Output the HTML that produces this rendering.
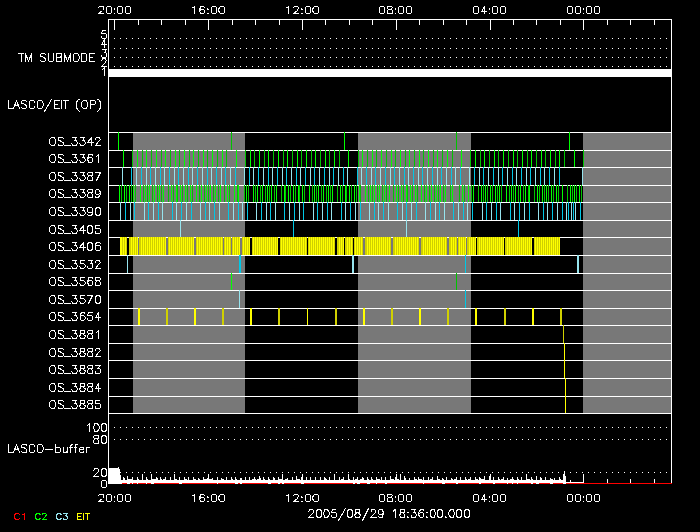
<!DOCTYPE html>
<html><head><meta charset="utf-8"><title>LASCO/EIT schedule</title>
<style>
html,body{margin:0;padding:0;background:#000;}
body{width:700px;height:532px;overflow:hidden;}
svg{display:block;}
</style></head><body>
<svg width="700" height="532" viewBox="0 0 700 532">
<rect x="0" y="0" width="700" height="532" fill="#000"/>
<g shape-rendering="crispEdges">
<rect x="133" y="133" width="112" height="280" fill="#787878"/>
<rect x="358" y="133" width="113" height="280" fill="#787878"/>
<rect x="583" y="133" width="88" height="280" fill="#787878"/>
<rect x="108" y="19" width="1" height="465" fill="#fff"/>
<rect x="671" y="19" width="1" height="465" fill="#fff"/>
<rect x="108" y="19" width="564" height="1" fill="#fff"/>
<rect x="114" y="19" width="1" height="11" fill="#fff"/>
<rect x="138" y="19" width="1" height="6" fill="#fff"/>
<rect x="161" y="19" width="1" height="6" fill="#fff"/>
<rect x="185" y="19" width="1" height="6" fill="#fff"/>
<rect x="208" y="19" width="1" height="11" fill="#fff"/>
<rect x="232" y="19" width="1" height="6" fill="#fff"/>
<rect x="255" y="19" width="1" height="6" fill="#fff"/>
<rect x="279" y="19" width="1" height="6" fill="#fff"/>
<rect x="302" y="19" width="1" height="11" fill="#fff"/>
<rect x="325" y="19" width="1" height="6" fill="#fff"/>
<rect x="349" y="19" width="1" height="6" fill="#fff"/>
<rect x="372" y="19" width="1" height="6" fill="#fff"/>
<rect x="396" y="19" width="1" height="11" fill="#fff"/>
<rect x="419" y="19" width="1" height="6" fill="#fff"/>
<rect x="443" y="19" width="1" height="6" fill="#fff"/>
<rect x="466" y="19" width="1" height="6" fill="#fff"/>
<rect x="490" y="19" width="1" height="11" fill="#fff"/>
<rect x="513" y="19" width="1" height="6" fill="#fff"/>
<rect x="536" y="19" width="1" height="6" fill="#fff"/>
<rect x="560" y="19" width="1" height="6" fill="#fff"/>
<rect x="583" y="19" width="1" height="11" fill="#fff"/>
<rect x="607" y="19" width="1" height="6" fill="#fff"/>
<rect x="630" y="19" width="1" height="6" fill="#fff"/>
<rect x="654" y="19" width="1" height="6" fill="#fff"/>
<rect x="114" y="38" width="1" height="1" fill="#fff"/>
<rect x="120" y="38" width="1" height="1" fill="#fff"/>
<rect x="126" y="38" width="1" height="1" fill="#fff"/>
<rect x="132" y="38" width="1" height="1" fill="#fff"/>
<rect x="138" y="38" width="1" height="1" fill="#fff"/>
<rect x="144" y="38" width="1" height="1" fill="#fff"/>
<rect x="150" y="38" width="1" height="1" fill="#fff"/>
<rect x="156" y="38" width="1" height="1" fill="#fff"/>
<rect x="162" y="38" width="1" height="1" fill="#fff"/>
<rect x="168" y="38" width="1" height="1" fill="#fff"/>
<rect x="174" y="38" width="1" height="1" fill="#fff"/>
<rect x="180" y="38" width="1" height="1" fill="#fff"/>
<rect x="186" y="38" width="1" height="1" fill="#fff"/>
<rect x="192" y="38" width="1" height="1" fill="#fff"/>
<rect x="198" y="38" width="1" height="1" fill="#fff"/>
<rect x="204" y="38" width="1" height="1" fill="#fff"/>
<rect x="210" y="38" width="1" height="1" fill="#fff"/>
<rect x="216" y="38" width="1" height="1" fill="#fff"/>
<rect x="222" y="38" width="1" height="1" fill="#fff"/>
<rect x="228" y="38" width="1" height="1" fill="#fff"/>
<rect x="234" y="38" width="1" height="1" fill="#fff"/>
<rect x="240" y="38" width="1" height="1" fill="#fff"/>
<rect x="246" y="38" width="1" height="1" fill="#fff"/>
<rect x="252" y="38" width="1" height="1" fill="#fff"/>
<rect x="258" y="38" width="1" height="1" fill="#fff"/>
<rect x="264" y="38" width="1" height="1" fill="#fff"/>
<rect x="270" y="38" width="1" height="1" fill="#fff"/>
<rect x="276" y="38" width="1" height="1" fill="#fff"/>
<rect x="282" y="38" width="1" height="1" fill="#fff"/>
<rect x="288" y="38" width="1" height="1" fill="#fff"/>
<rect x="294" y="38" width="1" height="1" fill="#fff"/>
<rect x="300" y="38" width="1" height="1" fill="#fff"/>
<rect x="306" y="38" width="1" height="1" fill="#fff"/>
<rect x="312" y="38" width="1" height="1" fill="#fff"/>
<rect x="318" y="38" width="1" height="1" fill="#fff"/>
<rect x="324" y="38" width="1" height="1" fill="#fff"/>
<rect x="330" y="38" width="1" height="1" fill="#fff"/>
<rect x="336" y="38" width="1" height="1" fill="#fff"/>
<rect x="342" y="38" width="1" height="1" fill="#fff"/>
<rect x="348" y="38" width="1" height="1" fill="#fff"/>
<rect x="354" y="38" width="1" height="1" fill="#fff"/>
<rect x="360" y="38" width="1" height="1" fill="#fff"/>
<rect x="366" y="38" width="1" height="1" fill="#fff"/>
<rect x="372" y="38" width="1" height="1" fill="#fff"/>
<rect x="378" y="38" width="1" height="1" fill="#fff"/>
<rect x="384" y="38" width="1" height="1" fill="#fff"/>
<rect x="390" y="38" width="1" height="1" fill="#fff"/>
<rect x="396" y="38" width="1" height="1" fill="#fff"/>
<rect x="402" y="38" width="1" height="1" fill="#fff"/>
<rect x="408" y="38" width="1" height="1" fill="#fff"/>
<rect x="414" y="38" width="1" height="1" fill="#fff"/>
<rect x="420" y="38" width="1" height="1" fill="#fff"/>
<rect x="426" y="38" width="1" height="1" fill="#fff"/>
<rect x="432" y="38" width="1" height="1" fill="#fff"/>
<rect x="438" y="38" width="1" height="1" fill="#fff"/>
<rect x="444" y="38" width="1" height="1" fill="#fff"/>
<rect x="450" y="38" width="1" height="1" fill="#fff"/>
<rect x="456" y="38" width="1" height="1" fill="#fff"/>
<rect x="462" y="38" width="1" height="1" fill="#fff"/>
<rect x="468" y="38" width="1" height="1" fill="#fff"/>
<rect x="474" y="38" width="1" height="1" fill="#fff"/>
<rect x="480" y="38" width="1" height="1" fill="#fff"/>
<rect x="486" y="38" width="1" height="1" fill="#fff"/>
<rect x="492" y="38" width="1" height="1" fill="#fff"/>
<rect x="498" y="38" width="1" height="1" fill="#fff"/>
<rect x="504" y="38" width="1" height="1" fill="#fff"/>
<rect x="510" y="38" width="1" height="1" fill="#fff"/>
<rect x="516" y="38" width="1" height="1" fill="#fff"/>
<rect x="522" y="38" width="1" height="1" fill="#fff"/>
<rect x="528" y="38" width="1" height="1" fill="#fff"/>
<rect x="534" y="38" width="1" height="1" fill="#fff"/>
<rect x="540" y="38" width="1" height="1" fill="#fff"/>
<rect x="546" y="38" width="1" height="1" fill="#fff"/>
<rect x="552" y="38" width="1" height="1" fill="#fff"/>
<rect x="558" y="38" width="1" height="1" fill="#fff"/>
<rect x="564" y="38" width="1" height="1" fill="#fff"/>
<rect x="570" y="38" width="1" height="1" fill="#fff"/>
<rect x="576" y="38" width="1" height="1" fill="#fff"/>
<rect x="582" y="38" width="1" height="1" fill="#fff"/>
<rect x="588" y="38" width="1" height="1" fill="#fff"/>
<rect x="594" y="38" width="1" height="1" fill="#fff"/>
<rect x="600" y="38" width="1" height="1" fill="#fff"/>
<rect x="606" y="38" width="1" height="1" fill="#fff"/>
<rect x="612" y="38" width="1" height="1" fill="#fff"/>
<rect x="618" y="38" width="1" height="1" fill="#fff"/>
<rect x="624" y="38" width="1" height="1" fill="#fff"/>
<rect x="630" y="38" width="1" height="1" fill="#fff"/>
<rect x="636" y="38" width="1" height="1" fill="#fff"/>
<rect x="642" y="38" width="1" height="1" fill="#fff"/>
<rect x="648" y="38" width="1" height="1" fill="#fff"/>
<rect x="654" y="38" width="1" height="1" fill="#fff"/>
<rect x="660" y="38" width="1" height="1" fill="#fff"/>
<rect x="666" y="38" width="1" height="1" fill="#fff"/>
<rect x="114" y="48" width="1" height="1" fill="#fff"/>
<rect x="120" y="48" width="1" height="1" fill="#fff"/>
<rect x="126" y="48" width="1" height="1" fill="#fff"/>
<rect x="132" y="48" width="1" height="1" fill="#fff"/>
<rect x="138" y="48" width="1" height="1" fill="#fff"/>
<rect x="144" y="48" width="1" height="1" fill="#fff"/>
<rect x="150" y="48" width="1" height="1" fill="#fff"/>
<rect x="156" y="48" width="1" height="1" fill="#fff"/>
<rect x="162" y="48" width="1" height="1" fill="#fff"/>
<rect x="168" y="48" width="1" height="1" fill="#fff"/>
<rect x="174" y="48" width="1" height="1" fill="#fff"/>
<rect x="180" y="48" width="1" height="1" fill="#fff"/>
<rect x="186" y="48" width="1" height="1" fill="#fff"/>
<rect x="192" y="48" width="1" height="1" fill="#fff"/>
<rect x="198" y="48" width="1" height="1" fill="#fff"/>
<rect x="204" y="48" width="1" height="1" fill="#fff"/>
<rect x="210" y="48" width="1" height="1" fill="#fff"/>
<rect x="216" y="48" width="1" height="1" fill="#fff"/>
<rect x="222" y="48" width="1" height="1" fill="#fff"/>
<rect x="228" y="48" width="1" height="1" fill="#fff"/>
<rect x="234" y="48" width="1" height="1" fill="#fff"/>
<rect x="240" y="48" width="1" height="1" fill="#fff"/>
<rect x="246" y="48" width="1" height="1" fill="#fff"/>
<rect x="252" y="48" width="1" height="1" fill="#fff"/>
<rect x="258" y="48" width="1" height="1" fill="#fff"/>
<rect x="264" y="48" width="1" height="1" fill="#fff"/>
<rect x="270" y="48" width="1" height="1" fill="#fff"/>
<rect x="276" y="48" width="1" height="1" fill="#fff"/>
<rect x="282" y="48" width="1" height="1" fill="#fff"/>
<rect x="288" y="48" width="1" height="1" fill="#fff"/>
<rect x="294" y="48" width="1" height="1" fill="#fff"/>
<rect x="300" y="48" width="1" height="1" fill="#fff"/>
<rect x="306" y="48" width="1" height="1" fill="#fff"/>
<rect x="312" y="48" width="1" height="1" fill="#fff"/>
<rect x="318" y="48" width="1" height="1" fill="#fff"/>
<rect x="324" y="48" width="1" height="1" fill="#fff"/>
<rect x="330" y="48" width="1" height="1" fill="#fff"/>
<rect x="336" y="48" width="1" height="1" fill="#fff"/>
<rect x="342" y="48" width="1" height="1" fill="#fff"/>
<rect x="348" y="48" width="1" height="1" fill="#fff"/>
<rect x="354" y="48" width="1" height="1" fill="#fff"/>
<rect x="360" y="48" width="1" height="1" fill="#fff"/>
<rect x="366" y="48" width="1" height="1" fill="#fff"/>
<rect x="372" y="48" width="1" height="1" fill="#fff"/>
<rect x="378" y="48" width="1" height="1" fill="#fff"/>
<rect x="384" y="48" width="1" height="1" fill="#fff"/>
<rect x="390" y="48" width="1" height="1" fill="#fff"/>
<rect x="396" y="48" width="1" height="1" fill="#fff"/>
<rect x="402" y="48" width="1" height="1" fill="#fff"/>
<rect x="408" y="48" width="1" height="1" fill="#fff"/>
<rect x="414" y="48" width="1" height="1" fill="#fff"/>
<rect x="420" y="48" width="1" height="1" fill="#fff"/>
<rect x="426" y="48" width="1" height="1" fill="#fff"/>
<rect x="432" y="48" width="1" height="1" fill="#fff"/>
<rect x="438" y="48" width="1" height="1" fill="#fff"/>
<rect x="444" y="48" width="1" height="1" fill="#fff"/>
<rect x="450" y="48" width="1" height="1" fill="#fff"/>
<rect x="456" y="48" width="1" height="1" fill="#fff"/>
<rect x="462" y="48" width="1" height="1" fill="#fff"/>
<rect x="468" y="48" width="1" height="1" fill="#fff"/>
<rect x="474" y="48" width="1" height="1" fill="#fff"/>
<rect x="480" y="48" width="1" height="1" fill="#fff"/>
<rect x="486" y="48" width="1" height="1" fill="#fff"/>
<rect x="492" y="48" width="1" height="1" fill="#fff"/>
<rect x="498" y="48" width="1" height="1" fill="#fff"/>
<rect x="504" y="48" width="1" height="1" fill="#fff"/>
<rect x="510" y="48" width="1" height="1" fill="#fff"/>
<rect x="516" y="48" width="1" height="1" fill="#fff"/>
<rect x="522" y="48" width="1" height="1" fill="#fff"/>
<rect x="528" y="48" width="1" height="1" fill="#fff"/>
<rect x="534" y="48" width="1" height="1" fill="#fff"/>
<rect x="540" y="48" width="1" height="1" fill="#fff"/>
<rect x="546" y="48" width="1" height="1" fill="#fff"/>
<rect x="552" y="48" width="1" height="1" fill="#fff"/>
<rect x="558" y="48" width="1" height="1" fill="#fff"/>
<rect x="564" y="48" width="1" height="1" fill="#fff"/>
<rect x="570" y="48" width="1" height="1" fill="#fff"/>
<rect x="576" y="48" width="1" height="1" fill="#fff"/>
<rect x="582" y="48" width="1" height="1" fill="#fff"/>
<rect x="588" y="48" width="1" height="1" fill="#fff"/>
<rect x="594" y="48" width="1" height="1" fill="#fff"/>
<rect x="600" y="48" width="1" height="1" fill="#fff"/>
<rect x="606" y="48" width="1" height="1" fill="#fff"/>
<rect x="612" y="48" width="1" height="1" fill="#fff"/>
<rect x="618" y="48" width="1" height="1" fill="#fff"/>
<rect x="624" y="48" width="1" height="1" fill="#fff"/>
<rect x="630" y="48" width="1" height="1" fill="#fff"/>
<rect x="636" y="48" width="1" height="1" fill="#fff"/>
<rect x="642" y="48" width="1" height="1" fill="#fff"/>
<rect x="648" y="48" width="1" height="1" fill="#fff"/>
<rect x="654" y="48" width="1" height="1" fill="#fff"/>
<rect x="660" y="48" width="1" height="1" fill="#fff"/>
<rect x="666" y="48" width="1" height="1" fill="#fff"/>
<rect x="114" y="57" width="1" height="1" fill="#fff"/>
<rect x="120" y="57" width="1" height="1" fill="#fff"/>
<rect x="126" y="57" width="1" height="1" fill="#fff"/>
<rect x="132" y="57" width="1" height="1" fill="#fff"/>
<rect x="138" y="57" width="1" height="1" fill="#fff"/>
<rect x="144" y="57" width="1" height="1" fill="#fff"/>
<rect x="150" y="57" width="1" height="1" fill="#fff"/>
<rect x="156" y="57" width="1" height="1" fill="#fff"/>
<rect x="162" y="57" width="1" height="1" fill="#fff"/>
<rect x="168" y="57" width="1" height="1" fill="#fff"/>
<rect x="174" y="57" width="1" height="1" fill="#fff"/>
<rect x="180" y="57" width="1" height="1" fill="#fff"/>
<rect x="186" y="57" width="1" height="1" fill="#fff"/>
<rect x="192" y="57" width="1" height="1" fill="#fff"/>
<rect x="198" y="57" width="1" height="1" fill="#fff"/>
<rect x="204" y="57" width="1" height="1" fill="#fff"/>
<rect x="210" y="57" width="1" height="1" fill="#fff"/>
<rect x="216" y="57" width="1" height="1" fill="#fff"/>
<rect x="222" y="57" width="1" height="1" fill="#fff"/>
<rect x="228" y="57" width="1" height="1" fill="#fff"/>
<rect x="234" y="57" width="1" height="1" fill="#fff"/>
<rect x="240" y="57" width="1" height="1" fill="#fff"/>
<rect x="246" y="57" width="1" height="1" fill="#fff"/>
<rect x="252" y="57" width="1" height="1" fill="#fff"/>
<rect x="258" y="57" width="1" height="1" fill="#fff"/>
<rect x="264" y="57" width="1" height="1" fill="#fff"/>
<rect x="270" y="57" width="1" height="1" fill="#fff"/>
<rect x="276" y="57" width="1" height="1" fill="#fff"/>
<rect x="282" y="57" width="1" height="1" fill="#fff"/>
<rect x="288" y="57" width="1" height="1" fill="#fff"/>
<rect x="294" y="57" width="1" height="1" fill="#fff"/>
<rect x="300" y="57" width="1" height="1" fill="#fff"/>
<rect x="306" y="57" width="1" height="1" fill="#fff"/>
<rect x="312" y="57" width="1" height="1" fill="#fff"/>
<rect x="318" y="57" width="1" height="1" fill="#fff"/>
<rect x="324" y="57" width="1" height="1" fill="#fff"/>
<rect x="330" y="57" width="1" height="1" fill="#fff"/>
<rect x="336" y="57" width="1" height="1" fill="#fff"/>
<rect x="342" y="57" width="1" height="1" fill="#fff"/>
<rect x="348" y="57" width="1" height="1" fill="#fff"/>
<rect x="354" y="57" width="1" height="1" fill="#fff"/>
<rect x="360" y="57" width="1" height="1" fill="#fff"/>
<rect x="366" y="57" width="1" height="1" fill="#fff"/>
<rect x="372" y="57" width="1" height="1" fill="#fff"/>
<rect x="378" y="57" width="1" height="1" fill="#fff"/>
<rect x="384" y="57" width="1" height="1" fill="#fff"/>
<rect x="390" y="57" width="1" height="1" fill="#fff"/>
<rect x="396" y="57" width="1" height="1" fill="#fff"/>
<rect x="402" y="57" width="1" height="1" fill="#fff"/>
<rect x="408" y="57" width="1" height="1" fill="#fff"/>
<rect x="414" y="57" width="1" height="1" fill="#fff"/>
<rect x="420" y="57" width="1" height="1" fill="#fff"/>
<rect x="426" y="57" width="1" height="1" fill="#fff"/>
<rect x="432" y="57" width="1" height="1" fill="#fff"/>
<rect x="438" y="57" width="1" height="1" fill="#fff"/>
<rect x="444" y="57" width="1" height="1" fill="#fff"/>
<rect x="450" y="57" width="1" height="1" fill="#fff"/>
<rect x="456" y="57" width="1" height="1" fill="#fff"/>
<rect x="462" y="57" width="1" height="1" fill="#fff"/>
<rect x="468" y="57" width="1" height="1" fill="#fff"/>
<rect x="474" y="57" width="1" height="1" fill="#fff"/>
<rect x="480" y="57" width="1" height="1" fill="#fff"/>
<rect x="486" y="57" width="1" height="1" fill="#fff"/>
<rect x="492" y="57" width="1" height="1" fill="#fff"/>
<rect x="498" y="57" width="1" height="1" fill="#fff"/>
<rect x="504" y="57" width="1" height="1" fill="#fff"/>
<rect x="510" y="57" width="1" height="1" fill="#fff"/>
<rect x="516" y="57" width="1" height="1" fill="#fff"/>
<rect x="522" y="57" width="1" height="1" fill="#fff"/>
<rect x="528" y="57" width="1" height="1" fill="#fff"/>
<rect x="534" y="57" width="1" height="1" fill="#fff"/>
<rect x="540" y="57" width="1" height="1" fill="#fff"/>
<rect x="546" y="57" width="1" height="1" fill="#fff"/>
<rect x="552" y="57" width="1" height="1" fill="#fff"/>
<rect x="558" y="57" width="1" height="1" fill="#fff"/>
<rect x="564" y="57" width="1" height="1" fill="#fff"/>
<rect x="570" y="57" width="1" height="1" fill="#fff"/>
<rect x="576" y="57" width="1" height="1" fill="#fff"/>
<rect x="582" y="57" width="1" height="1" fill="#fff"/>
<rect x="588" y="57" width="1" height="1" fill="#fff"/>
<rect x="594" y="57" width="1" height="1" fill="#fff"/>
<rect x="600" y="57" width="1" height="1" fill="#fff"/>
<rect x="606" y="57" width="1" height="1" fill="#fff"/>
<rect x="612" y="57" width="1" height="1" fill="#fff"/>
<rect x="618" y="57" width="1" height="1" fill="#fff"/>
<rect x="624" y="57" width="1" height="1" fill="#fff"/>
<rect x="630" y="57" width="1" height="1" fill="#fff"/>
<rect x="636" y="57" width="1" height="1" fill="#fff"/>
<rect x="642" y="57" width="1" height="1" fill="#fff"/>
<rect x="648" y="57" width="1" height="1" fill="#fff"/>
<rect x="654" y="57" width="1" height="1" fill="#fff"/>
<rect x="660" y="57" width="1" height="1" fill="#fff"/>
<rect x="666" y="57" width="1" height="1" fill="#fff"/>
<rect x="114" y="66" width="1" height="1" fill="#fff"/>
<rect x="120" y="66" width="1" height="1" fill="#fff"/>
<rect x="126" y="66" width="1" height="1" fill="#fff"/>
<rect x="132" y="66" width="1" height="1" fill="#fff"/>
<rect x="138" y="66" width="1" height="1" fill="#fff"/>
<rect x="144" y="66" width="1" height="1" fill="#fff"/>
<rect x="150" y="66" width="1" height="1" fill="#fff"/>
<rect x="156" y="66" width="1" height="1" fill="#fff"/>
<rect x="162" y="66" width="1" height="1" fill="#fff"/>
<rect x="168" y="66" width="1" height="1" fill="#fff"/>
<rect x="174" y="66" width="1" height="1" fill="#fff"/>
<rect x="180" y="66" width="1" height="1" fill="#fff"/>
<rect x="186" y="66" width="1" height="1" fill="#fff"/>
<rect x="192" y="66" width="1" height="1" fill="#fff"/>
<rect x="198" y="66" width="1" height="1" fill="#fff"/>
<rect x="204" y="66" width="1" height="1" fill="#fff"/>
<rect x="210" y="66" width="1" height="1" fill="#fff"/>
<rect x="216" y="66" width="1" height="1" fill="#fff"/>
<rect x="222" y="66" width="1" height="1" fill="#fff"/>
<rect x="228" y="66" width="1" height="1" fill="#fff"/>
<rect x="234" y="66" width="1" height="1" fill="#fff"/>
<rect x="240" y="66" width="1" height="1" fill="#fff"/>
<rect x="246" y="66" width="1" height="1" fill="#fff"/>
<rect x="252" y="66" width="1" height="1" fill="#fff"/>
<rect x="258" y="66" width="1" height="1" fill="#fff"/>
<rect x="264" y="66" width="1" height="1" fill="#fff"/>
<rect x="270" y="66" width="1" height="1" fill="#fff"/>
<rect x="276" y="66" width="1" height="1" fill="#fff"/>
<rect x="282" y="66" width="1" height="1" fill="#fff"/>
<rect x="288" y="66" width="1" height="1" fill="#fff"/>
<rect x="294" y="66" width="1" height="1" fill="#fff"/>
<rect x="300" y="66" width="1" height="1" fill="#fff"/>
<rect x="306" y="66" width="1" height="1" fill="#fff"/>
<rect x="312" y="66" width="1" height="1" fill="#fff"/>
<rect x="318" y="66" width="1" height="1" fill="#fff"/>
<rect x="324" y="66" width="1" height="1" fill="#fff"/>
<rect x="330" y="66" width="1" height="1" fill="#fff"/>
<rect x="336" y="66" width="1" height="1" fill="#fff"/>
<rect x="342" y="66" width="1" height="1" fill="#fff"/>
<rect x="348" y="66" width="1" height="1" fill="#fff"/>
<rect x="354" y="66" width="1" height="1" fill="#fff"/>
<rect x="360" y="66" width="1" height="1" fill="#fff"/>
<rect x="366" y="66" width="1" height="1" fill="#fff"/>
<rect x="372" y="66" width="1" height="1" fill="#fff"/>
<rect x="378" y="66" width="1" height="1" fill="#fff"/>
<rect x="384" y="66" width="1" height="1" fill="#fff"/>
<rect x="390" y="66" width="1" height="1" fill="#fff"/>
<rect x="396" y="66" width="1" height="1" fill="#fff"/>
<rect x="402" y="66" width="1" height="1" fill="#fff"/>
<rect x="408" y="66" width="1" height="1" fill="#fff"/>
<rect x="414" y="66" width="1" height="1" fill="#fff"/>
<rect x="420" y="66" width="1" height="1" fill="#fff"/>
<rect x="426" y="66" width="1" height="1" fill="#fff"/>
<rect x="432" y="66" width="1" height="1" fill="#fff"/>
<rect x="438" y="66" width="1" height="1" fill="#fff"/>
<rect x="444" y="66" width="1" height="1" fill="#fff"/>
<rect x="450" y="66" width="1" height="1" fill="#fff"/>
<rect x="456" y="66" width="1" height="1" fill="#fff"/>
<rect x="462" y="66" width="1" height="1" fill="#fff"/>
<rect x="468" y="66" width="1" height="1" fill="#fff"/>
<rect x="474" y="66" width="1" height="1" fill="#fff"/>
<rect x="480" y="66" width="1" height="1" fill="#fff"/>
<rect x="486" y="66" width="1" height="1" fill="#fff"/>
<rect x="492" y="66" width="1" height="1" fill="#fff"/>
<rect x="498" y="66" width="1" height="1" fill="#fff"/>
<rect x="504" y="66" width="1" height="1" fill="#fff"/>
<rect x="510" y="66" width="1" height="1" fill="#fff"/>
<rect x="516" y="66" width="1" height="1" fill="#fff"/>
<rect x="522" y="66" width="1" height="1" fill="#fff"/>
<rect x="528" y="66" width="1" height="1" fill="#fff"/>
<rect x="534" y="66" width="1" height="1" fill="#fff"/>
<rect x="540" y="66" width="1" height="1" fill="#fff"/>
<rect x="546" y="66" width="1" height="1" fill="#fff"/>
<rect x="552" y="66" width="1" height="1" fill="#fff"/>
<rect x="558" y="66" width="1" height="1" fill="#fff"/>
<rect x="564" y="66" width="1" height="1" fill="#fff"/>
<rect x="570" y="66" width="1" height="1" fill="#fff"/>
<rect x="576" y="66" width="1" height="1" fill="#fff"/>
<rect x="582" y="66" width="1" height="1" fill="#fff"/>
<rect x="588" y="66" width="1" height="1" fill="#fff"/>
<rect x="594" y="66" width="1" height="1" fill="#fff"/>
<rect x="600" y="66" width="1" height="1" fill="#fff"/>
<rect x="606" y="66" width="1" height="1" fill="#fff"/>
<rect x="612" y="66" width="1" height="1" fill="#fff"/>
<rect x="618" y="66" width="1" height="1" fill="#fff"/>
<rect x="624" y="66" width="1" height="1" fill="#fff"/>
<rect x="630" y="66" width="1" height="1" fill="#fff"/>
<rect x="636" y="66" width="1" height="1" fill="#fff"/>
<rect x="642" y="66" width="1" height="1" fill="#fff"/>
<rect x="648" y="66" width="1" height="1" fill="#fff"/>
<rect x="654" y="66" width="1" height="1" fill="#fff"/>
<rect x="660" y="66" width="1" height="1" fill="#fff"/>
<rect x="666" y="66" width="1" height="1" fill="#fff"/>
<rect x="114" y="427" width="1" height="1" fill="#fff"/>
<rect x="120" y="427" width="1" height="1" fill="#fff"/>
<rect x="126" y="427" width="1" height="1" fill="#fff"/>
<rect x="132" y="427" width="1" height="1" fill="#fff"/>
<rect x="138" y="427" width="1" height="1" fill="#fff"/>
<rect x="144" y="427" width="1" height="1" fill="#fff"/>
<rect x="150" y="427" width="1" height="1" fill="#fff"/>
<rect x="156" y="427" width="1" height="1" fill="#fff"/>
<rect x="162" y="427" width="1" height="1" fill="#fff"/>
<rect x="168" y="427" width="1" height="1" fill="#fff"/>
<rect x="174" y="427" width="1" height="1" fill="#fff"/>
<rect x="180" y="427" width="1" height="1" fill="#fff"/>
<rect x="186" y="427" width="1" height="1" fill="#fff"/>
<rect x="192" y="427" width="1" height="1" fill="#fff"/>
<rect x="198" y="427" width="1" height="1" fill="#fff"/>
<rect x="204" y="427" width="1" height="1" fill="#fff"/>
<rect x="210" y="427" width="1" height="1" fill="#fff"/>
<rect x="216" y="427" width="1" height="1" fill="#fff"/>
<rect x="222" y="427" width="1" height="1" fill="#fff"/>
<rect x="228" y="427" width="1" height="1" fill="#fff"/>
<rect x="234" y="427" width="1" height="1" fill="#fff"/>
<rect x="240" y="427" width="1" height="1" fill="#fff"/>
<rect x="246" y="427" width="1" height="1" fill="#fff"/>
<rect x="252" y="427" width="1" height="1" fill="#fff"/>
<rect x="258" y="427" width="1" height="1" fill="#fff"/>
<rect x="264" y="427" width="1" height="1" fill="#fff"/>
<rect x="270" y="427" width="1" height="1" fill="#fff"/>
<rect x="276" y="427" width="1" height="1" fill="#fff"/>
<rect x="282" y="427" width="1" height="1" fill="#fff"/>
<rect x="288" y="427" width="1" height="1" fill="#fff"/>
<rect x="294" y="427" width="1" height="1" fill="#fff"/>
<rect x="300" y="427" width="1" height="1" fill="#fff"/>
<rect x="306" y="427" width="1" height="1" fill="#fff"/>
<rect x="312" y="427" width="1" height="1" fill="#fff"/>
<rect x="318" y="427" width="1" height="1" fill="#fff"/>
<rect x="324" y="427" width="1" height="1" fill="#fff"/>
<rect x="330" y="427" width="1" height="1" fill="#fff"/>
<rect x="336" y="427" width="1" height="1" fill="#fff"/>
<rect x="342" y="427" width="1" height="1" fill="#fff"/>
<rect x="348" y="427" width="1" height="1" fill="#fff"/>
<rect x="354" y="427" width="1" height="1" fill="#fff"/>
<rect x="360" y="427" width="1" height="1" fill="#fff"/>
<rect x="366" y="427" width="1" height="1" fill="#fff"/>
<rect x="372" y="427" width="1" height="1" fill="#fff"/>
<rect x="378" y="427" width="1" height="1" fill="#fff"/>
<rect x="384" y="427" width="1" height="1" fill="#fff"/>
<rect x="390" y="427" width="1" height="1" fill="#fff"/>
<rect x="396" y="427" width="1" height="1" fill="#fff"/>
<rect x="402" y="427" width="1" height="1" fill="#fff"/>
<rect x="408" y="427" width="1" height="1" fill="#fff"/>
<rect x="414" y="427" width="1" height="1" fill="#fff"/>
<rect x="420" y="427" width="1" height="1" fill="#fff"/>
<rect x="426" y="427" width="1" height="1" fill="#fff"/>
<rect x="432" y="427" width="1" height="1" fill="#fff"/>
<rect x="438" y="427" width="1" height="1" fill="#fff"/>
<rect x="444" y="427" width="1" height="1" fill="#fff"/>
<rect x="450" y="427" width="1" height="1" fill="#fff"/>
<rect x="456" y="427" width="1" height="1" fill="#fff"/>
<rect x="462" y="427" width="1" height="1" fill="#fff"/>
<rect x="468" y="427" width="1" height="1" fill="#fff"/>
<rect x="474" y="427" width="1" height="1" fill="#fff"/>
<rect x="480" y="427" width="1" height="1" fill="#fff"/>
<rect x="486" y="427" width="1" height="1" fill="#fff"/>
<rect x="492" y="427" width="1" height="1" fill="#fff"/>
<rect x="498" y="427" width="1" height="1" fill="#fff"/>
<rect x="504" y="427" width="1" height="1" fill="#fff"/>
<rect x="510" y="427" width="1" height="1" fill="#fff"/>
<rect x="516" y="427" width="1" height="1" fill="#fff"/>
<rect x="522" y="427" width="1" height="1" fill="#fff"/>
<rect x="528" y="427" width="1" height="1" fill="#fff"/>
<rect x="534" y="427" width="1" height="1" fill="#fff"/>
<rect x="540" y="427" width="1" height="1" fill="#fff"/>
<rect x="546" y="427" width="1" height="1" fill="#fff"/>
<rect x="552" y="427" width="1" height="1" fill="#fff"/>
<rect x="558" y="427" width="1" height="1" fill="#fff"/>
<rect x="564" y="427" width="1" height="1" fill="#fff"/>
<rect x="570" y="427" width="1" height="1" fill="#fff"/>
<rect x="576" y="427" width="1" height="1" fill="#fff"/>
<rect x="582" y="427" width="1" height="1" fill="#fff"/>
<rect x="588" y="427" width="1" height="1" fill="#fff"/>
<rect x="594" y="427" width="1" height="1" fill="#fff"/>
<rect x="600" y="427" width="1" height="1" fill="#fff"/>
<rect x="606" y="427" width="1" height="1" fill="#fff"/>
<rect x="612" y="427" width="1" height="1" fill="#fff"/>
<rect x="618" y="427" width="1" height="1" fill="#fff"/>
<rect x="624" y="427" width="1" height="1" fill="#fff"/>
<rect x="630" y="427" width="1" height="1" fill="#fff"/>
<rect x="636" y="427" width="1" height="1" fill="#fff"/>
<rect x="642" y="427" width="1" height="1" fill="#fff"/>
<rect x="648" y="427" width="1" height="1" fill="#fff"/>
<rect x="654" y="427" width="1" height="1" fill="#fff"/>
<rect x="660" y="427" width="1" height="1" fill="#fff"/>
<rect x="666" y="427" width="1" height="1" fill="#fff"/>
<rect x="114" y="439" width="1" height="1" fill="#fff"/>
<rect x="120" y="439" width="1" height="1" fill="#fff"/>
<rect x="126" y="439" width="1" height="1" fill="#fff"/>
<rect x="132" y="439" width="1" height="1" fill="#fff"/>
<rect x="138" y="439" width="1" height="1" fill="#fff"/>
<rect x="144" y="439" width="1" height="1" fill="#fff"/>
<rect x="150" y="439" width="1" height="1" fill="#fff"/>
<rect x="156" y="439" width="1" height="1" fill="#fff"/>
<rect x="162" y="439" width="1" height="1" fill="#fff"/>
<rect x="168" y="439" width="1" height="1" fill="#fff"/>
<rect x="174" y="439" width="1" height="1" fill="#fff"/>
<rect x="180" y="439" width="1" height="1" fill="#fff"/>
<rect x="186" y="439" width="1" height="1" fill="#fff"/>
<rect x="192" y="439" width="1" height="1" fill="#fff"/>
<rect x="198" y="439" width="1" height="1" fill="#fff"/>
<rect x="204" y="439" width="1" height="1" fill="#fff"/>
<rect x="210" y="439" width="1" height="1" fill="#fff"/>
<rect x="216" y="439" width="1" height="1" fill="#fff"/>
<rect x="222" y="439" width="1" height="1" fill="#fff"/>
<rect x="228" y="439" width="1" height="1" fill="#fff"/>
<rect x="234" y="439" width="1" height="1" fill="#fff"/>
<rect x="240" y="439" width="1" height="1" fill="#fff"/>
<rect x="246" y="439" width="1" height="1" fill="#fff"/>
<rect x="252" y="439" width="1" height="1" fill="#fff"/>
<rect x="258" y="439" width="1" height="1" fill="#fff"/>
<rect x="264" y="439" width="1" height="1" fill="#fff"/>
<rect x="270" y="439" width="1" height="1" fill="#fff"/>
<rect x="276" y="439" width="1" height="1" fill="#fff"/>
<rect x="282" y="439" width="1" height="1" fill="#fff"/>
<rect x="288" y="439" width="1" height="1" fill="#fff"/>
<rect x="294" y="439" width="1" height="1" fill="#fff"/>
<rect x="300" y="439" width="1" height="1" fill="#fff"/>
<rect x="306" y="439" width="1" height="1" fill="#fff"/>
<rect x="312" y="439" width="1" height="1" fill="#fff"/>
<rect x="318" y="439" width="1" height="1" fill="#fff"/>
<rect x="324" y="439" width="1" height="1" fill="#fff"/>
<rect x="330" y="439" width="1" height="1" fill="#fff"/>
<rect x="336" y="439" width="1" height="1" fill="#fff"/>
<rect x="342" y="439" width="1" height="1" fill="#fff"/>
<rect x="348" y="439" width="1" height="1" fill="#fff"/>
<rect x="354" y="439" width="1" height="1" fill="#fff"/>
<rect x="360" y="439" width="1" height="1" fill="#fff"/>
<rect x="366" y="439" width="1" height="1" fill="#fff"/>
<rect x="372" y="439" width="1" height="1" fill="#fff"/>
<rect x="378" y="439" width="1" height="1" fill="#fff"/>
<rect x="384" y="439" width="1" height="1" fill="#fff"/>
<rect x="390" y="439" width="1" height="1" fill="#fff"/>
<rect x="396" y="439" width="1" height="1" fill="#fff"/>
<rect x="402" y="439" width="1" height="1" fill="#fff"/>
<rect x="408" y="439" width="1" height="1" fill="#fff"/>
<rect x="414" y="439" width="1" height="1" fill="#fff"/>
<rect x="420" y="439" width="1" height="1" fill="#fff"/>
<rect x="426" y="439" width="1" height="1" fill="#fff"/>
<rect x="432" y="439" width="1" height="1" fill="#fff"/>
<rect x="438" y="439" width="1" height="1" fill="#fff"/>
<rect x="444" y="439" width="1" height="1" fill="#fff"/>
<rect x="450" y="439" width="1" height="1" fill="#fff"/>
<rect x="456" y="439" width="1" height="1" fill="#fff"/>
<rect x="462" y="439" width="1" height="1" fill="#fff"/>
<rect x="468" y="439" width="1" height="1" fill="#fff"/>
<rect x="474" y="439" width="1" height="1" fill="#fff"/>
<rect x="480" y="439" width="1" height="1" fill="#fff"/>
<rect x="486" y="439" width="1" height="1" fill="#fff"/>
<rect x="492" y="439" width="1" height="1" fill="#fff"/>
<rect x="498" y="439" width="1" height="1" fill="#fff"/>
<rect x="504" y="439" width="1" height="1" fill="#fff"/>
<rect x="510" y="439" width="1" height="1" fill="#fff"/>
<rect x="516" y="439" width="1" height="1" fill="#fff"/>
<rect x="522" y="439" width="1" height="1" fill="#fff"/>
<rect x="528" y="439" width="1" height="1" fill="#fff"/>
<rect x="534" y="439" width="1" height="1" fill="#fff"/>
<rect x="540" y="439" width="1" height="1" fill="#fff"/>
<rect x="546" y="439" width="1" height="1" fill="#fff"/>
<rect x="552" y="439" width="1" height="1" fill="#fff"/>
<rect x="558" y="439" width="1" height="1" fill="#fff"/>
<rect x="564" y="439" width="1" height="1" fill="#fff"/>
<rect x="570" y="439" width="1" height="1" fill="#fff"/>
<rect x="576" y="439" width="1" height="1" fill="#fff"/>
<rect x="582" y="439" width="1" height="1" fill="#fff"/>
<rect x="588" y="439" width="1" height="1" fill="#fff"/>
<rect x="594" y="439" width="1" height="1" fill="#fff"/>
<rect x="600" y="439" width="1" height="1" fill="#fff"/>
<rect x="606" y="439" width="1" height="1" fill="#fff"/>
<rect x="612" y="439" width="1" height="1" fill="#fff"/>
<rect x="618" y="439" width="1" height="1" fill="#fff"/>
<rect x="624" y="439" width="1" height="1" fill="#fff"/>
<rect x="630" y="439" width="1" height="1" fill="#fff"/>
<rect x="636" y="439" width="1" height="1" fill="#fff"/>
<rect x="642" y="439" width="1" height="1" fill="#fff"/>
<rect x="648" y="439" width="1" height="1" fill="#fff"/>
<rect x="654" y="439" width="1" height="1" fill="#fff"/>
<rect x="660" y="439" width="1" height="1" fill="#fff"/>
<rect x="666" y="439" width="1" height="1" fill="#fff"/>
<rect x="114" y="472" width="1" height="1" fill="#fff"/>
<rect x="120" y="472" width="1" height="1" fill="#fff"/>
<rect x="126" y="472" width="1" height="1" fill="#fff"/>
<rect x="132" y="472" width="1" height="1" fill="#fff"/>
<rect x="138" y="472" width="1" height="1" fill="#fff"/>
<rect x="144" y="472" width="1" height="1" fill="#fff"/>
<rect x="150" y="472" width="1" height="1" fill="#fff"/>
<rect x="156" y="472" width="1" height="1" fill="#fff"/>
<rect x="162" y="472" width="1" height="1" fill="#fff"/>
<rect x="168" y="472" width="1" height="1" fill="#fff"/>
<rect x="174" y="472" width="1" height="1" fill="#fff"/>
<rect x="180" y="472" width="1" height="1" fill="#fff"/>
<rect x="186" y="472" width="1" height="1" fill="#fff"/>
<rect x="192" y="472" width="1" height="1" fill="#fff"/>
<rect x="198" y="472" width="1" height="1" fill="#fff"/>
<rect x="204" y="472" width="1" height="1" fill="#fff"/>
<rect x="210" y="472" width="1" height="1" fill="#fff"/>
<rect x="216" y="472" width="1" height="1" fill="#fff"/>
<rect x="222" y="472" width="1" height="1" fill="#fff"/>
<rect x="228" y="472" width="1" height="1" fill="#fff"/>
<rect x="234" y="472" width="1" height="1" fill="#fff"/>
<rect x="240" y="472" width="1" height="1" fill="#fff"/>
<rect x="246" y="472" width="1" height="1" fill="#fff"/>
<rect x="252" y="472" width="1" height="1" fill="#fff"/>
<rect x="258" y="472" width="1" height="1" fill="#fff"/>
<rect x="264" y="472" width="1" height="1" fill="#fff"/>
<rect x="270" y="472" width="1" height="1" fill="#fff"/>
<rect x="276" y="472" width="1" height="1" fill="#fff"/>
<rect x="282" y="472" width="1" height="1" fill="#fff"/>
<rect x="288" y="472" width="1" height="1" fill="#fff"/>
<rect x="294" y="472" width="1" height="1" fill="#fff"/>
<rect x="300" y="472" width="1" height="1" fill="#fff"/>
<rect x="306" y="472" width="1" height="1" fill="#fff"/>
<rect x="312" y="472" width="1" height="1" fill="#fff"/>
<rect x="318" y="472" width="1" height="1" fill="#fff"/>
<rect x="324" y="472" width="1" height="1" fill="#fff"/>
<rect x="330" y="472" width="1" height="1" fill="#fff"/>
<rect x="336" y="472" width="1" height="1" fill="#fff"/>
<rect x="342" y="472" width="1" height="1" fill="#fff"/>
<rect x="348" y="472" width="1" height="1" fill="#fff"/>
<rect x="354" y="472" width="1" height="1" fill="#fff"/>
<rect x="360" y="472" width="1" height="1" fill="#fff"/>
<rect x="366" y="472" width="1" height="1" fill="#fff"/>
<rect x="372" y="472" width="1" height="1" fill="#fff"/>
<rect x="378" y="472" width="1" height="1" fill="#fff"/>
<rect x="384" y="472" width="1" height="1" fill="#fff"/>
<rect x="390" y="472" width="1" height="1" fill="#fff"/>
<rect x="396" y="472" width="1" height="1" fill="#fff"/>
<rect x="402" y="472" width="1" height="1" fill="#fff"/>
<rect x="408" y="472" width="1" height="1" fill="#fff"/>
<rect x="414" y="472" width="1" height="1" fill="#fff"/>
<rect x="420" y="472" width="1" height="1" fill="#fff"/>
<rect x="426" y="472" width="1" height="1" fill="#fff"/>
<rect x="432" y="472" width="1" height="1" fill="#fff"/>
<rect x="438" y="472" width="1" height="1" fill="#fff"/>
<rect x="444" y="472" width="1" height="1" fill="#fff"/>
<rect x="450" y="472" width="1" height="1" fill="#fff"/>
<rect x="456" y="472" width="1" height="1" fill="#fff"/>
<rect x="462" y="472" width="1" height="1" fill="#fff"/>
<rect x="468" y="472" width="1" height="1" fill="#fff"/>
<rect x="474" y="472" width="1" height="1" fill="#fff"/>
<rect x="480" y="472" width="1" height="1" fill="#fff"/>
<rect x="486" y="472" width="1" height="1" fill="#fff"/>
<rect x="492" y="472" width="1" height="1" fill="#fff"/>
<rect x="498" y="472" width="1" height="1" fill="#fff"/>
<rect x="504" y="472" width="1" height="1" fill="#fff"/>
<rect x="510" y="472" width="1" height="1" fill="#fff"/>
<rect x="516" y="472" width="1" height="1" fill="#fff"/>
<rect x="522" y="472" width="1" height="1" fill="#fff"/>
<rect x="528" y="472" width="1" height="1" fill="#fff"/>
<rect x="534" y="472" width="1" height="1" fill="#fff"/>
<rect x="540" y="472" width="1" height="1" fill="#fff"/>
<rect x="546" y="472" width="1" height="1" fill="#fff"/>
<rect x="552" y="472" width="1" height="1" fill="#fff"/>
<rect x="558" y="472" width="1" height="1" fill="#fff"/>
<rect x="564" y="472" width="1" height="1" fill="#fff"/>
<rect x="570" y="472" width="1" height="1" fill="#fff"/>
<rect x="576" y="472" width="1" height="1" fill="#fff"/>
<rect x="582" y="472" width="1" height="1" fill="#fff"/>
<rect x="588" y="472" width="1" height="1" fill="#fff"/>
<rect x="594" y="472" width="1" height="1" fill="#fff"/>
<rect x="600" y="472" width="1" height="1" fill="#fff"/>
<rect x="606" y="472" width="1" height="1" fill="#fff"/>
<rect x="612" y="472" width="1" height="1" fill="#fff"/>
<rect x="618" y="472" width="1" height="1" fill="#fff"/>
<rect x="624" y="472" width="1" height="1" fill="#fff"/>
<rect x="630" y="472" width="1" height="1" fill="#fff"/>
<rect x="636" y="472" width="1" height="1" fill="#fff"/>
<rect x="642" y="472" width="1" height="1" fill="#fff"/>
<rect x="648" y="472" width="1" height="1" fill="#fff"/>
<rect x="654" y="472" width="1" height="1" fill="#fff"/>
<rect x="660" y="472" width="1" height="1" fill="#fff"/>
<rect x="666" y="472" width="1" height="1" fill="#fff"/>
<rect x="109" y="69" width="562" height="8" fill="#fff"/>
<rect x="109" y="132" width="562" height="1" fill="#fff"/>
<rect x="109" y="150" width="562" height="1" fill="#fff"/>
<rect x="109" y="167" width="562" height="1" fill="#fff"/>
<rect x="109" y="185" width="562" height="1" fill="#fff"/>
<rect x="109" y="202" width="562" height="1" fill="#fff"/>
<rect x="109" y="220" width="562" height="1" fill="#fff"/>
<rect x="109" y="237" width="562" height="1" fill="#fff"/>
<rect x="109" y="255" width="562" height="1" fill="#fff"/>
<rect x="109" y="273" width="562" height="1" fill="#fff"/>
<rect x="109" y="290" width="562" height="1" fill="#fff"/>
<rect x="109" y="308" width="562" height="1" fill="#fff"/>
<rect x="109" y="325" width="562" height="1" fill="#fff"/>
<rect x="109" y="343" width="562" height="1" fill="#fff"/>
<rect x="109" y="360" width="562" height="1" fill="#fff"/>
<rect x="109" y="378" width="562" height="1" fill="#fff"/>
<rect x="109" y="396" width="562" height="1" fill="#fff"/>
<rect x="109" y="413" width="562" height="1" fill="#fff"/>
<rect x="118" y="132" width="1" height="18" fill="#00ff00"/>
<rect x="231" y="132" width="1" height="18" fill="#00c400"/>
<rect x="344" y="132" width="1" height="18" fill="#00ff00"/>
<rect x="456" y="132" width="1" height="18" fill="#00c400"/>
<rect x="569" y="132" width="1" height="18" fill="#00ff00"/>
<rect x="123" y="150" width="1" height="17" fill="#00ff00"/>
<rect x="132" y="150" width="1" height="17" fill="#00c400"/>
<rect x="137" y="150" width="1" height="17" fill="#00ff00"/>
<rect x="142" y="150" width="1" height="17" fill="#00c400"/>
<rect x="146" y="150" width="1" height="17" fill="#00ff00"/>
<rect x="151" y="150" width="1" height="17" fill="#00c400"/>
<rect x="156" y="150" width="1" height="17" fill="#00ff00"/>
<rect x="161" y="150" width="1" height="17" fill="#00c400"/>
<rect x="165" y="150" width="1" height="17" fill="#00ff00"/>
<rect x="170" y="150" width="1" height="17" fill="#00c400"/>
<rect x="175" y="150" width="1" height="17" fill="#00ff00"/>
<rect x="179" y="150" width="1" height="17" fill="#00c400"/>
<rect x="184" y="150" width="1" height="17" fill="#00ff00"/>
<rect x="189" y="150" width="1" height="17" fill="#00c400"/>
<rect x="193" y="150" width="1" height="17" fill="#00ff00"/>
<rect x="198" y="150" width="1" height="17" fill="#00c400"/>
<rect x="203" y="150" width="1" height="17" fill="#00ff00"/>
<rect x="207" y="150" width="1" height="17" fill="#00c400"/>
<rect x="212" y="150" width="1" height="17" fill="#00ff00"/>
<rect x="217" y="150" width="1" height="17" fill="#00c400"/>
<rect x="222" y="150" width="1" height="17" fill="#00ff00"/>
<rect x="226" y="150" width="1" height="17" fill="#00c400"/>
<rect x="236" y="150" width="1" height="17" fill="#00ff00"/>
<rect x="245" y="150" width="1" height="17" fill="#00c400"/>
<rect x="250" y="150" width="1" height="17" fill="#00ff00"/>
<rect x="254" y="150" width="1" height="17" fill="#00c400"/>
<rect x="259" y="150" width="1" height="17" fill="#00ff00"/>
<rect x="264" y="150" width="1" height="17" fill="#00c400"/>
<rect x="268" y="150" width="1" height="17" fill="#00ff00"/>
<rect x="273" y="150" width="1" height="17" fill="#00c400"/>
<rect x="278" y="150" width="1" height="17" fill="#00ff00"/>
<rect x="283" y="150" width="1" height="17" fill="#00c400"/>
<rect x="287" y="150" width="1" height="17" fill="#00ff00"/>
<rect x="292" y="150" width="1" height="17" fill="#00c400"/>
<rect x="297" y="150" width="1" height="17" fill="#00ff00"/>
<rect x="301" y="150" width="1" height="17" fill="#00c400"/>
<rect x="306" y="150" width="1" height="17" fill="#00ff00"/>
<rect x="311" y="150" width="1" height="17" fill="#00c400"/>
<rect x="315" y="150" width="1" height="17" fill="#00ff00"/>
<rect x="320" y="150" width="1" height="17" fill="#00c400"/>
<rect x="325" y="150" width="1" height="17" fill="#00ff00"/>
<rect x="329" y="150" width="1" height="17" fill="#00c400"/>
<rect x="334" y="150" width="1" height="17" fill="#00ff00"/>
<rect x="339" y="150" width="1" height="17" fill="#00c400"/>
<rect x="348" y="150" width="1" height="17" fill="#00ff00"/>
<rect x="358" y="150" width="1" height="17" fill="#00c400"/>
<rect x="362" y="150" width="1" height="17" fill="#00ff00"/>
<rect x="367" y="150" width="1" height="17" fill="#00c400"/>
<rect x="372" y="150" width="1" height="17" fill="#00ff00"/>
<rect x="376" y="150" width="1" height="17" fill="#00c400"/>
<rect x="381" y="150" width="1" height="17" fill="#00ff00"/>
<rect x="386" y="150" width="1" height="17" fill="#00c400"/>
<rect x="391" y="150" width="1" height="17" fill="#00ff00"/>
<rect x="395" y="150" width="1" height="17" fill="#00c400"/>
<rect x="400" y="150" width="1" height="17" fill="#00ff00"/>
<rect x="405" y="150" width="1" height="17" fill="#00c400"/>
<rect x="409" y="150" width="1" height="17" fill="#00ff00"/>
<rect x="414" y="150" width="1" height="17" fill="#00c400"/>
<rect x="419" y="150" width="1" height="17" fill="#00ff00"/>
<rect x="423" y="150" width="1" height="17" fill="#00c400"/>
<rect x="428" y="150" width="1" height="17" fill="#00ff00"/>
<rect x="433" y="150" width="1" height="17" fill="#00c400"/>
<rect x="437" y="150" width="1" height="17" fill="#00ff00"/>
<rect x="442" y="150" width="1" height="17" fill="#00c400"/>
<rect x="447" y="150" width="1" height="17" fill="#00ff00"/>
<rect x="452" y="150" width="1" height="17" fill="#00c400"/>
<rect x="461" y="150" width="1" height="17" fill="#00ff00"/>
<rect x="470" y="150" width="1" height="17" fill="#00c400"/>
<rect x="475" y="150" width="1" height="17" fill="#00ff00"/>
<rect x="480" y="150" width="1" height="17" fill="#00c400"/>
<rect x="484" y="150" width="1" height="17" fill="#00ff00"/>
<rect x="489" y="150" width="1" height="17" fill="#00c400"/>
<rect x="494" y="150" width="1" height="17" fill="#00ff00"/>
<rect x="498" y="150" width="1" height="17" fill="#00c400"/>
<rect x="503" y="150" width="1" height="17" fill="#00ff00"/>
<rect x="508" y="150" width="1" height="17" fill="#00c400"/>
<rect x="513" y="150" width="1" height="17" fill="#00ff00"/>
<rect x="517" y="150" width="1" height="17" fill="#00c400"/>
<rect x="522" y="150" width="1" height="17" fill="#00ff00"/>
<rect x="527" y="150" width="1" height="17" fill="#00c400"/>
<rect x="531" y="150" width="1" height="17" fill="#00ff00"/>
<rect x="536" y="150" width="1" height="17" fill="#00c400"/>
<rect x="541" y="150" width="1" height="17" fill="#00ff00"/>
<rect x="545" y="150" width="1" height="17" fill="#00c400"/>
<rect x="550" y="150" width="1" height="17" fill="#00ff00"/>
<rect x="555" y="150" width="1" height="17" fill="#00c400"/>
<rect x="559" y="150" width="1" height="17" fill="#00ff00"/>
<rect x="564" y="150" width="1" height="17" fill="#00c400"/>
<rect x="574" y="150" width="1" height="17" fill="#00ff00"/>
<rect x="583" y="150" width="1" height="17" fill="#00c400"/>
<rect x="122" y="167" width="1" height="18" fill="#96e4ee"/>
<rect x="131" y="167" width="1" height="18" fill="#00c8e6"/>
<rect x="136" y="167" width="1" height="18" fill="#96e4ee"/>
<rect x="141" y="167" width="1" height="18" fill="#00c8e6"/>
<rect x="146" y="167" width="1" height="18" fill="#96e4ee"/>
<rect x="150" y="167" width="1" height="18" fill="#00c8e6"/>
<rect x="155" y="167" width="1" height="18" fill="#96e4ee"/>
<rect x="160" y="167" width="1" height="18" fill="#00c8e6"/>
<rect x="164" y="167" width="1" height="18" fill="#96e4ee"/>
<rect x="169" y="167" width="1" height="18" fill="#00c8e6"/>
<rect x="174" y="167" width="1" height="18" fill="#96e4ee"/>
<rect x="178" y="167" width="1" height="18" fill="#00c8e6"/>
<rect x="183" y="167" width="1" height="18" fill="#96e4ee"/>
<rect x="188" y="167" width="1" height="18" fill="#00c8e6"/>
<rect x="192" y="167" width="1" height="18" fill="#96e4ee"/>
<rect x="197" y="167" width="1" height="18" fill="#00c8e6"/>
<rect x="202" y="167" width="1" height="18" fill="#96e4ee"/>
<rect x="207" y="167" width="1" height="18" fill="#00c8e6"/>
<rect x="211" y="167" width="1" height="18" fill="#96e4ee"/>
<rect x="216" y="167" width="1" height="18" fill="#00c8e6"/>
<rect x="221" y="167" width="1" height="18" fill="#96e4ee"/>
<rect x="225" y="167" width="1" height="18" fill="#00c8e6"/>
<rect x="230" y="167" width="1" height="18" fill="#96e4ee"/>
<rect x="235" y="167" width="1" height="18" fill="#00c8e6"/>
<rect x="244" y="167" width="1" height="18" fill="#96e4ee"/>
<rect x="249" y="167" width="1" height="18" fill="#00c8e6"/>
<rect x="253" y="167" width="1" height="18" fill="#96e4ee"/>
<rect x="258" y="167" width="1" height="18" fill="#00c8e6"/>
<rect x="263" y="167" width="1" height="18" fill="#96e4ee"/>
<rect x="268" y="167" width="1" height="18" fill="#00c8e6"/>
<rect x="272" y="167" width="1" height="18" fill="#96e4ee"/>
<rect x="277" y="167" width="1" height="18" fill="#00c8e6"/>
<rect x="282" y="167" width="1" height="18" fill="#96e4ee"/>
<rect x="286" y="167" width="1" height="18" fill="#00c8e6"/>
<rect x="291" y="167" width="1" height="18" fill="#96e4ee"/>
<rect x="296" y="167" width="1" height="18" fill="#00c8e6"/>
<rect x="300" y="167" width="1" height="18" fill="#96e4ee"/>
<rect x="305" y="167" width="1" height="18" fill="#00c8e6"/>
<rect x="310" y="167" width="1" height="18" fill="#96e4ee"/>
<rect x="314" y="167" width="1" height="18" fill="#00c8e6"/>
<rect x="319" y="167" width="1" height="18" fill="#96e4ee"/>
<rect x="324" y="167" width="1" height="18" fill="#00c8e6"/>
<rect x="329" y="167" width="1" height="18" fill="#96e4ee"/>
<rect x="333" y="167" width="1" height="18" fill="#00c8e6"/>
<rect x="338" y="167" width="1" height="18" fill="#96e4ee"/>
<rect x="343" y="167" width="1" height="18" fill="#00c8e6"/>
<rect x="347" y="167" width="1" height="18" fill="#96e4ee"/>
<rect x="357" y="167" width="1" height="18" fill="#00c8e6"/>
<rect x="361" y="167" width="1" height="18" fill="#96e4ee"/>
<rect x="366" y="167" width="1" height="18" fill="#00c8e6"/>
<rect x="371" y="167" width="1" height="18" fill="#96e4ee"/>
<rect x="375" y="167" width="1" height="18" fill="#00c8e6"/>
<rect x="380" y="167" width="1" height="18" fill="#96e4ee"/>
<rect x="385" y="167" width="1" height="18" fill="#00c8e6"/>
<rect x="390" y="167" width="1" height="18" fill="#96e4ee"/>
<rect x="394" y="167" width="1" height="18" fill="#00c8e6"/>
<rect x="399" y="167" width="1" height="18" fill="#96e4ee"/>
<rect x="404" y="167" width="1" height="18" fill="#00c8e6"/>
<rect x="408" y="167" width="1" height="18" fill="#96e4ee"/>
<rect x="413" y="167" width="1" height="18" fill="#00c8e6"/>
<rect x="418" y="167" width="1" height="18" fill="#96e4ee"/>
<rect x="422" y="167" width="1" height="18" fill="#00c8e6"/>
<rect x="427" y="167" width="1" height="18" fill="#96e4ee"/>
<rect x="432" y="167" width="1" height="18" fill="#00c8e6"/>
<rect x="437" y="167" width="1" height="18" fill="#96e4ee"/>
<rect x="441" y="167" width="1" height="18" fill="#00c8e6"/>
<rect x="446" y="167" width="1" height="18" fill="#96e4ee"/>
<rect x="451" y="167" width="1" height="18" fill="#00c8e6"/>
<rect x="455" y="167" width="1" height="18" fill="#96e4ee"/>
<rect x="460" y="167" width="1" height="18" fill="#00c8e6"/>
<rect x="469" y="167" width="1" height="18" fill="#96e4ee"/>
<rect x="474" y="167" width="1" height="18" fill="#00c8e6"/>
<rect x="479" y="167" width="1" height="18" fill="#96e4ee"/>
<rect x="483" y="167" width="1" height="18" fill="#00c8e6"/>
<rect x="488" y="167" width="1" height="18" fill="#96e4ee"/>
<rect x="493" y="167" width="1" height="18" fill="#00c8e6"/>
<rect x="498" y="167" width="1" height="18" fill="#96e4ee"/>
<rect x="502" y="167" width="1" height="18" fill="#00c8e6"/>
<rect x="507" y="167" width="1" height="18" fill="#96e4ee"/>
<rect x="512" y="167" width="1" height="18" fill="#00c8e6"/>
<rect x="516" y="167" width="1" height="18" fill="#96e4ee"/>
<rect x="521" y="167" width="1" height="18" fill="#00c8e6"/>
<rect x="526" y="167" width="1" height="18" fill="#96e4ee"/>
<rect x="530" y="167" width="1" height="18" fill="#00c8e6"/>
<rect x="535" y="167" width="1" height="18" fill="#96e4ee"/>
<rect x="540" y="167" width="1" height="18" fill="#00c8e6"/>
<rect x="544" y="167" width="1" height="18" fill="#96e4ee"/>
<rect x="549" y="167" width="1" height="18" fill="#00c8e6"/>
<rect x="554" y="167" width="1" height="18" fill="#96e4ee"/>
<rect x="559" y="167" width="1" height="18" fill="#00c8e6"/>
<rect x="582" y="167" width="1" height="18" fill="#96e4ee"/>
<rect x="119" y="185" width="1" height="17" fill="#00ff00"/>
<rect x="121" y="185" width="1" height="17" fill="#00c400"/>
<rect x="124" y="185" width="1" height="17" fill="#00ff00"/>
<rect x="126" y="185" width="1" height="17" fill="#00c400"/>
<rect x="129" y="185" width="1" height="17" fill="#00ff00"/>
<rect x="131" y="185" width="1" height="17" fill="#00c400"/>
<rect x="133" y="185" width="1" height="17" fill="#00ff00"/>
<rect x="135" y="185" width="1" height="17" fill="#00c400"/>
<rect x="140" y="185" width="1" height="17" fill="#00ff00"/>
<rect x="143" y="185" width="1" height="17" fill="#00c400"/>
<rect x="145" y="185" width="1" height="17" fill="#00ff00"/>
<rect x="147" y="185" width="1" height="17" fill="#00c400"/>
<rect x="149" y="185" width="1" height="17" fill="#00ff00"/>
<rect x="152" y="185" width="1" height="17" fill="#00c400"/>
<rect x="154" y="185" width="1" height="17" fill="#00ff00"/>
<rect x="157" y="185" width="1" height="17" fill="#00c400"/>
<rect x="159" y="185" width="1" height="17" fill="#00ff00"/>
<rect x="161" y="185" width="1" height="17" fill="#00c400"/>
<rect x="163" y="185" width="1" height="17" fill="#00ff00"/>
<rect x="168" y="185" width="1" height="17" fill="#00c400"/>
<rect x="171" y="185" width="1" height="17" fill="#00ff00"/>
<rect x="173" y="185" width="1" height="17" fill="#00c400"/>
<rect x="176" y="185" width="1" height="17" fill="#00ff00"/>
<rect x="177" y="185" width="1" height="17" fill="#00c400"/>
<rect x="180" y="185" width="1" height="17" fill="#00ff00"/>
<rect x="182" y="185" width="1" height="17" fill="#00c400"/>
<rect x="185" y="185" width="1" height="17" fill="#00ff00"/>
<rect x="187" y="185" width="1" height="17" fill="#00c400"/>
<rect x="190" y="185" width="1" height="17" fill="#00ff00"/>
<rect x="192" y="185" width="1" height="17" fill="#00c400"/>
<rect x="196" y="185" width="1" height="17" fill="#00ff00"/>
<rect x="199" y="185" width="1" height="17" fill="#00c400"/>
<rect x="201" y="185" width="1" height="17" fill="#00ff00"/>
<rect x="204" y="185" width="1" height="17" fill="#00c400"/>
<rect x="206" y="185" width="1" height="17" fill="#00ff00"/>
<rect x="208" y="185" width="1" height="17" fill="#00c400"/>
<rect x="210" y="185" width="1" height="17" fill="#00ff00"/>
<rect x="213" y="185" width="1" height="17" fill="#00c400"/>
<rect x="215" y="185" width="1" height="17" fill="#00ff00"/>
<rect x="218" y="185" width="1" height="17" fill="#00c400"/>
<rect x="220" y="185" width="1" height="17" fill="#00ff00"/>
<rect x="224" y="185" width="1" height="17" fill="#00c400"/>
<rect x="227" y="185" width="1" height="17" fill="#00ff00"/>
<rect x="229" y="185" width="1" height="17" fill="#00c400"/>
<rect x="234" y="185" width="1" height="17" fill="#00ff00"/>
<rect x="237" y="185" width="1" height="17" fill="#00c400"/>
<rect x="238" y="185" width="1" height="17" fill="#00ff00"/>
<rect x="244" y="185" width="1" height="17" fill="#00c400"/>
<rect x="246" y="185" width="1" height="17" fill="#00ff00"/>
<rect x="248" y="185" width="1" height="17" fill="#00c400"/>
<rect x="253" y="185" width="1" height="17" fill="#00ff00"/>
<rect x="255" y="185" width="1" height="17" fill="#00c400"/>
<rect x="257" y="185" width="1" height="17" fill="#00ff00"/>
<rect x="260" y="185" width="1" height="17" fill="#00c400"/>
<rect x="262" y="185" width="1" height="17" fill="#00ff00"/>
<rect x="265" y="185" width="1" height="17" fill="#00c400"/>
<rect x="267" y="185" width="1" height="17" fill="#00ff00"/>
<rect x="269" y="185" width="1" height="17" fill="#00c400"/>
<rect x="271" y="185" width="1" height="17" fill="#00ff00"/>
<rect x="274" y="185" width="1" height="17" fill="#00c400"/>
<rect x="276" y="185" width="1" height="17" fill="#00ff00"/>
<rect x="281" y="185" width="1" height="17" fill="#00c400"/>
<rect x="284" y="185" width="1" height="17" fill="#00ff00"/>
<rect x="285" y="185" width="1" height="17" fill="#00c400"/>
<rect x="288" y="185" width="1" height="17" fill="#00ff00"/>
<rect x="290" y="185" width="1" height="17" fill="#00c400"/>
<rect x="293" y="185" width="1" height="17" fill="#00ff00"/>
<rect x="295" y="185" width="1" height="17" fill="#00c400"/>
<rect x="298" y="185" width="1" height="17" fill="#00ff00"/>
<rect x="299" y="185" width="1" height="17" fill="#00c400"/>
<rect x="302" y="185" width="1" height="17" fill="#00ff00"/>
<rect x="304" y="185" width="1" height="17" fill="#00c400"/>
<rect x="309" y="185" width="1" height="17" fill="#00ff00"/>
<rect x="312" y="185" width="1" height="17" fill="#00c400"/>
<rect x="314" y="185" width="1" height="17" fill="#00ff00"/>
<rect x="316" y="185" width="1" height="17" fill="#00c400"/>
<rect x="318" y="185" width="1" height="17" fill="#00ff00"/>
<rect x="321" y="185" width="1" height="17" fill="#00c400"/>
<rect x="323" y="185" width="1" height="17" fill="#00ff00"/>
<rect x="326" y="185" width="1" height="17" fill="#00c400"/>
<rect x="328" y="185" width="1" height="17" fill="#00ff00"/>
<rect x="330" y="185" width="1" height="17" fill="#00c400"/>
<rect x="332" y="185" width="1" height="17" fill="#00ff00"/>
<rect x="337" y="185" width="1" height="17" fill="#00c400"/>
<rect x="340" y="185" width="1" height="17" fill="#00ff00"/>
<rect x="342" y="185" width="1" height="17" fill="#00c400"/>
<rect x="345" y="185" width="1" height="17" fill="#00ff00"/>
<rect x="346" y="185" width="1" height="17" fill="#00c400"/>
<rect x="349" y="185" width="1" height="17" fill="#00ff00"/>
<rect x="351" y="185" width="1" height="17" fill="#00c400"/>
<rect x="354" y="185" width="1" height="17" fill="#00ff00"/>
<rect x="356" y="185" width="1" height="17" fill="#00c400"/>
<rect x="359" y="185" width="1" height="17" fill="#00ff00"/>
<rect x="360" y="185" width="1" height="17" fill="#00c400"/>
<rect x="365" y="185" width="1" height="17" fill="#00ff00"/>
<rect x="368" y="185" width="1" height="17" fill="#00c400"/>
<rect x="370" y="185" width="1" height="17" fill="#00ff00"/>
<rect x="372" y="185" width="1" height="17" fill="#00c400"/>
<rect x="374" y="185" width="1" height="17" fill="#00ff00"/>
<rect x="377" y="185" width="1" height="17" fill="#00c400"/>
<rect x="379" y="185" width="1" height="17" fill="#00ff00"/>
<rect x="382" y="185" width="1" height="17" fill="#00c400"/>
<rect x="384" y="185" width="1" height="17" fill="#00ff00"/>
<rect x="386" y="185" width="1" height="17" fill="#00c400"/>
<rect x="389" y="185" width="1" height="17" fill="#00ff00"/>
<rect x="393" y="185" width="1" height="17" fill="#00c400"/>
<rect x="396" y="185" width="1" height="17" fill="#00ff00"/>
<rect x="398" y="185" width="1" height="17" fill="#00c400"/>
<rect x="401" y="185" width="1" height="17" fill="#00ff00"/>
<rect x="403" y="185" width="1" height="17" fill="#00c400"/>
<rect x="406" y="185" width="1" height="17" fill="#00ff00"/>
<rect x="407" y="185" width="1" height="17" fill="#00c400"/>
<rect x="410" y="185" width="1" height="17" fill="#00ff00"/>
<rect x="412" y="185" width="1" height="17" fill="#00c400"/>
<rect x="415" y="185" width="1" height="17" fill="#00ff00"/>
<rect x="417" y="185" width="1" height="17" fill="#00c400"/>
<rect x="421" y="185" width="1" height="17" fill="#00ff00"/>
<rect x="424" y="185" width="1" height="17" fill="#00c400"/>
<rect x="426" y="185" width="1" height="17" fill="#00ff00"/>
<rect x="429" y="185" width="1" height="17" fill="#00c400"/>
<rect x="431" y="185" width="1" height="17" fill="#00ff00"/>
<rect x="434" y="185" width="1" height="17" fill="#00c400"/>
<rect x="436" y="185" width="1" height="17" fill="#00ff00"/>
<rect x="438" y="185" width="1" height="17" fill="#00c400"/>
<rect x="440" y="185" width="1" height="17" fill="#00ff00"/>
<rect x="443" y="185" width="1" height="17" fill="#00c400"/>
<rect x="445" y="185" width="1" height="17" fill="#00ff00"/>
<rect x="450" y="185" width="1" height="17" fill="#00c400"/>
<rect x="452" y="185" width="1" height="17" fill="#00ff00"/>
<rect x="459" y="185" width="1" height="17" fill="#00c400"/>
<rect x="462" y="185" width="1" height="17" fill="#00ff00"/>
<rect x="464" y="185" width="1" height="17" fill="#00c400"/>
<rect x="468" y="185" width="1" height="17" fill="#00ff00"/>
<rect x="471" y="185" width="1" height="17" fill="#00c400"/>
<rect x="473" y="185" width="1" height="17" fill="#00ff00"/>
<rect x="478" y="185" width="1" height="17" fill="#00c400"/>
<rect x="481" y="185" width="1" height="17" fill="#00ff00"/>
<rect x="483" y="185" width="1" height="17" fill="#00c400"/>
<rect x="485" y="185" width="1" height="17" fill="#00ff00"/>
<rect x="487" y="185" width="1" height="17" fill="#00c400"/>
<rect x="490" y="185" width="1" height="17" fill="#00ff00"/>
<rect x="492" y="185" width="1" height="17" fill="#00c400"/>
<rect x="495" y="185" width="1" height="17" fill="#00ff00"/>
<rect x="497" y="185" width="1" height="17" fill="#00c400"/>
<rect x="499" y="185" width="1" height="17" fill="#00ff00"/>
<rect x="501" y="185" width="1" height="17" fill="#00c400"/>
<rect x="506" y="185" width="1" height="17" fill="#00ff00"/>
<rect x="509" y="185" width="1" height="17" fill="#00c400"/>
<rect x="511" y="185" width="1" height="17" fill="#00ff00"/>
<rect x="513" y="185" width="1" height="17" fill="#00c400"/>
<rect x="515" y="185" width="1" height="17" fill="#00ff00"/>
<rect x="518" y="185" width="1" height="17" fill="#00c400"/>
<rect x="520" y="185" width="1" height="17" fill="#00ff00"/>
<rect x="523" y="185" width="1" height="17" fill="#00c400"/>
<rect x="525" y="185" width="1" height="17" fill="#00ff00"/>
<rect x="528" y="185" width="1" height="17" fill="#00c400"/>
<rect x="529" y="185" width="1" height="17" fill="#00ff00"/>
<rect x="534" y="185" width="1" height="17" fill="#00c400"/>
<rect x="537" y="185" width="1" height="17" fill="#00ff00"/>
<rect x="539" y="185" width="1" height="17" fill="#00c400"/>
<rect x="542" y="185" width="1" height="17" fill="#00ff00"/>
<rect x="544" y="185" width="1" height="17" fill="#00c400"/>
<rect x="546" y="185" width="1" height="17" fill="#00ff00"/>
<rect x="548" y="185" width="1" height="17" fill="#00c400"/>
<rect x="551" y="185" width="1" height="17" fill="#00ff00"/>
<rect x="553" y="185" width="1" height="17" fill="#00c400"/>
<rect x="556" y="185" width="1" height="17" fill="#00ff00"/>
<rect x="558" y="185" width="1" height="17" fill="#00c400"/>
<rect x="562" y="185" width="1" height="17" fill="#00ff00"/>
<rect x="567" y="185" width="1" height="17" fill="#00c400"/>
<rect x="570" y="185" width="1" height="17" fill="#00ff00"/>
<rect x="572" y="185" width="1" height="17" fill="#00c400"/>
<rect x="574" y="185" width="1" height="17" fill="#00ff00"/>
<rect x="576" y="185" width="1" height="17" fill="#00c400"/>
<rect x="579" y="185" width="1" height="17" fill="#00ff00"/>
<rect x="581" y="185" width="1" height="17" fill="#00c400"/>
<rect x="120" y="202" width="1" height="18" fill="#96e4ee"/>
<rect x="125" y="202" width="1" height="18" fill="#00c8e6"/>
<rect x="130" y="202" width="1" height="18" fill="#96e4ee"/>
<rect x="134" y="202" width="1" height="18" fill="#00c8e6"/>
<rect x="144" y="202" width="1" height="18" fill="#96e4ee"/>
<rect x="148" y="202" width="1" height="18" fill="#00c8e6"/>
<rect x="153" y="202" width="1" height="18" fill="#96e4ee"/>
<rect x="158" y="202" width="1" height="18" fill="#00c8e6"/>
<rect x="162" y="202" width="1" height="18" fill="#96e4ee"/>
<rect x="172" y="202" width="1" height="18" fill="#00c8e6"/>
<rect x="176" y="202" width="1" height="18" fill="#96e4ee"/>
<rect x="181" y="202" width="1" height="18" fill="#00c8e6"/>
<rect x="186" y="202" width="1" height="18" fill="#96e4ee"/>
<rect x="191" y="202" width="1" height="18" fill="#00c8e6"/>
<rect x="200" y="202" width="1" height="18" fill="#96e4ee"/>
<rect x="205" y="202" width="1" height="18" fill="#00c8e6"/>
<rect x="209" y="202" width="1" height="18" fill="#96e4ee"/>
<rect x="214" y="202" width="1" height="18" fill="#00c8e6"/>
<rect x="219" y="202" width="1" height="18" fill="#96e4ee"/>
<rect x="228" y="202" width="1" height="18" fill="#00c8e6"/>
<rect x="233" y="202" width="1" height="18" fill="#96e4ee"/>
<rect x="238" y="202" width="1" height="18" fill="#00c8e6"/>
<rect x="242" y="202" width="1" height="18" fill="#96e4ee"/>
<rect x="247" y="202" width="1" height="18" fill="#00c8e6"/>
<rect x="256" y="202" width="1" height="18" fill="#96e4ee"/>
<rect x="261" y="202" width="1" height="18" fill="#00c8e6"/>
<rect x="266" y="202" width="1" height="18" fill="#96e4ee"/>
<rect x="270" y="202" width="1" height="18" fill="#00c8e6"/>
<rect x="275" y="202" width="1" height="18" fill="#96e4ee"/>
<rect x="284" y="202" width="1" height="18" fill="#00c8e6"/>
<rect x="289" y="202" width="1" height="18" fill="#96e4ee"/>
<rect x="294" y="202" width="1" height="18" fill="#00c8e6"/>
<rect x="299" y="202" width="1" height="18" fill="#96e4ee"/>
<rect x="303" y="202" width="1" height="18" fill="#00c8e6"/>
<rect x="313" y="202" width="1" height="18" fill="#96e4ee"/>
<rect x="317" y="202" width="1" height="18" fill="#00c8e6"/>
<rect x="322" y="202" width="1" height="18" fill="#96e4ee"/>
<rect x="327" y="202" width="1" height="18" fill="#00c8e6"/>
<rect x="331" y="202" width="1" height="18" fill="#96e4ee"/>
<rect x="341" y="202" width="1" height="18" fill="#00c8e6"/>
<rect x="345" y="202" width="1" height="18" fill="#96e4ee"/>
<rect x="350" y="202" width="1" height="18" fill="#00c8e6"/>
<rect x="355" y="202" width="1" height="18" fill="#96e4ee"/>
<rect x="360" y="202" width="1" height="18" fill="#00c8e6"/>
<rect x="369" y="202" width="1" height="18" fill="#96e4ee"/>
<rect x="374" y="202" width="1" height="18" fill="#00c8e6"/>
<rect x="378" y="202" width="1" height="18" fill="#96e4ee"/>
<rect x="383" y="202" width="1" height="18" fill="#00c8e6"/>
<rect x="388" y="202" width="1" height="18" fill="#96e4ee"/>
<rect x="397" y="202" width="1" height="18" fill="#00c8e6"/>
<rect x="402" y="202" width="1" height="18" fill="#96e4ee"/>
<rect x="406" y="202" width="1" height="18" fill="#00c8e6"/>
<rect x="411" y="202" width="1" height="18" fill="#96e4ee"/>
<rect x="416" y="202" width="1" height="18" fill="#00c8e6"/>
<rect x="425" y="202" width="1" height="18" fill="#96e4ee"/>
<rect x="430" y="202" width="1" height="18" fill="#00c8e6"/>
<rect x="435" y="202" width="1" height="18" fill="#96e4ee"/>
<rect x="439" y="202" width="1" height="18" fill="#00c8e6"/>
<rect x="444" y="202" width="1" height="18" fill="#96e4ee"/>
<rect x="453" y="202" width="1" height="18" fill="#00c8e6"/>
<rect x="458" y="202" width="1" height="18" fill="#96e4ee"/>
<rect x="463" y="202" width="1" height="18" fill="#00c8e6"/>
<rect x="467" y="202" width="1" height="18" fill="#96e4ee"/>
<rect x="472" y="202" width="1" height="18" fill="#00c8e6"/>
<rect x="482" y="202" width="1" height="18" fill="#96e4ee"/>
<rect x="486" y="202" width="1" height="18" fill="#00c8e6"/>
<rect x="491" y="202" width="1" height="18" fill="#96e4ee"/>
<rect x="496" y="202" width="1" height="18" fill="#00c8e6"/>
<rect x="500" y="202" width="1" height="18" fill="#96e4ee"/>
<rect x="510" y="202" width="1" height="18" fill="#00c8e6"/>
<rect x="514" y="202" width="1" height="18" fill="#96e4ee"/>
<rect x="519" y="202" width="1" height="18" fill="#00c8e6"/>
<rect x="524" y="202" width="1" height="18" fill="#96e4ee"/>
<rect x="529" y="202" width="1" height="18" fill="#00c8e6"/>
<rect x="538" y="202" width="1" height="18" fill="#96e4ee"/>
<rect x="543" y="202" width="1" height="18" fill="#00c8e6"/>
<rect x="547" y="202" width="1" height="18" fill="#96e4ee"/>
<rect x="552" y="202" width="1" height="18" fill="#00c8e6"/>
<rect x="557" y="202" width="1" height="18" fill="#96e4ee"/>
<rect x="562" y="202" width="1" height="18" fill="#00c8e6"/>
<rect x="566" y="202" width="1" height="18" fill="#96e4ee"/>
<rect x="568" y="202" width="1" height="18" fill="#00c8e6"/>
<rect x="571" y="202" width="1" height="18" fill="#96e4ee"/>
<rect x="573" y="202" width="1" height="18" fill="#00c8e6"/>
<rect x="575" y="202" width="1" height="18" fill="#96e4ee"/>
<rect x="580" y="202" width="1" height="18" fill="#00c8e6"/>
<rect x="180" y="220" width="1" height="17" fill="#96e4ee"/>
<rect x="293" y="220" width="1" height="17" fill="#00c8e6"/>
<rect x="406" y="220" width="1" height="17" fill="#96e4ee"/>
<rect x="518" y="220" width="1" height="17" fill="#00c8e6"/>
<rect x="120" y="237" width="1" height="18" fill="#ffff00"/>
<rect x="121" y="237" width="1" height="18" fill="#ffff00"/>
<rect x="122" y="237" width="1" height="18" fill="#d0d000"/>
<rect x="123" y="237" width="1" height="18" fill="#ffff00"/>
<rect x="124" y="237" width="1" height="18" fill="#d0d000"/>
<rect x="125" y="237" width="1" height="18" fill="#ffff00"/>
<rect x="126" y="237" width="1" height="18" fill="#d0d000"/>
<rect x="129" y="237" width="1" height="18" fill="#d0d000"/>
<rect x="130" y="237" width="1" height="18" fill="#d0d000"/>
<rect x="131" y="237" width="1" height="18" fill="#ffff00"/>
<rect x="132" y="237" width="1" height="18" fill="#d0d000"/>
<rect x="133" y="237" width="1" height="18" fill="#ffff00"/>
<rect x="134" y="237" width="1" height="18" fill="#d0d000"/>
<rect x="135" y="237" width="1" height="18" fill="#ffff00"/>
<rect x="136" y="237" width="1" height="18" fill="#d0d000"/>
<rect x="137" y="237" width="1" height="18" fill="#ffff00"/>
<rect x="139" y="237" width="1" height="18" fill="#d0d000"/>
<rect x="140" y="237" width="1" height="18" fill="#d0d000"/>
<rect x="141" y="237" width="1" height="18" fill="#ffff00"/>
<rect x="142" y="237" width="1" height="18" fill="#d0d000"/>
<rect x="143" y="237" width="1" height="18" fill="#ffff00"/>
<rect x="144" y="237" width="1" height="18" fill="#d0d000"/>
<rect x="145" y="237" width="1" height="18" fill="#ffff00"/>
<rect x="146" y="237" width="1" height="18" fill="#d0d000"/>
<rect x="147" y="237" width="1" height="18" fill="#ffff00"/>
<rect x="148" y="237" width="1" height="18" fill="#d0d000"/>
<rect x="149" y="237" width="1" height="18" fill="#ffff00"/>
<rect x="150" y="237" width="1" height="18" fill="#d0d000"/>
<rect x="151" y="237" width="1" height="18" fill="#ffff00"/>
<rect x="152" y="237" width="1" height="18" fill="#d0d000"/>
<rect x="153" y="237" width="1" height="18" fill="#ffff00"/>
<rect x="154" y="237" width="1" height="18" fill="#d0d000"/>
<rect x="155" y="237" width="1" height="18" fill="#ffff00"/>
<rect x="156" y="237" width="1" height="18" fill="#d0d000"/>
<rect x="157" y="237" width="1" height="18" fill="#ffff00"/>
<rect x="158" y="237" width="1" height="18" fill="#d0d000"/>
<rect x="159" y="237" width="1" height="18" fill="#ffff00"/>
<rect x="160" y="237" width="1" height="18" fill="#d0d000"/>
<rect x="161" y="237" width="1" height="18" fill="#ffff00"/>
<rect x="162" y="237" width="1" height="18" fill="#d0d000"/>
<rect x="163" y="237" width="1" height="18" fill="#ffff00"/>
<rect x="164" y="237" width="1" height="18" fill="#d0d000"/>
<rect x="165" y="237" width="1" height="18" fill="#ffff00"/>
<rect x="168" y="237" width="1" height="18" fill="#d0d000"/>
<rect x="169" y="237" width="1" height="18" fill="#ffff00"/>
<rect x="170" y="237" width="1" height="18" fill="#d0d000"/>
<rect x="171" y="237" width="1" height="18" fill="#ffff00"/>
<rect x="172" y="237" width="1" height="18" fill="#d0d000"/>
<rect x="173" y="237" width="1" height="18" fill="#ffff00"/>
<rect x="174" y="237" width="1" height="18" fill="#d0d000"/>
<rect x="175" y="237" width="1" height="18" fill="#ffff00"/>
<rect x="176" y="237" width="1" height="18" fill="#d0d000"/>
<rect x="177" y="237" width="1" height="18" fill="#ffff00"/>
<rect x="178" y="237" width="1" height="18" fill="#d0d000"/>
<rect x="179" y="237" width="1" height="18" fill="#ffff00"/>
<rect x="180" y="237" width="1" height="18" fill="#d0d000"/>
<rect x="181" y="237" width="1" height="18" fill="#ffff00"/>
<rect x="182" y="237" width="1" height="18" fill="#d0d000"/>
<rect x="183" y="237" width="1" height="18" fill="#ffff00"/>
<rect x="184" y="237" width="1" height="18" fill="#d0d000"/>
<rect x="185" y="237" width="1" height="18" fill="#ffff00"/>
<rect x="186" y="237" width="1" height="18" fill="#d0d000"/>
<rect x="187" y="237" width="1" height="18" fill="#ffff00"/>
<rect x="188" y="237" width="1" height="18" fill="#d0d000"/>
<rect x="189" y="237" width="1" height="18" fill="#ffff00"/>
<rect x="190" y="237" width="1" height="18" fill="#d0d000"/>
<rect x="191" y="237" width="1" height="18" fill="#ffff00"/>
<rect x="192" y="237" width="1" height="18" fill="#d0d000"/>
<rect x="193" y="237" width="1" height="18" fill="#ffff00"/>
<rect x="196" y="237" width="1" height="18" fill="#d0d000"/>
<rect x="197" y="237" width="1" height="18" fill="#ffff00"/>
<rect x="198" y="237" width="1" height="18" fill="#d0d000"/>
<rect x="199" y="237" width="1" height="18" fill="#ffff00"/>
<rect x="200" y="237" width="1" height="18" fill="#d0d000"/>
<rect x="201" y="237" width="1" height="18" fill="#ffff00"/>
<rect x="202" y="237" width="1" height="18" fill="#d0d000"/>
<rect x="203" y="237" width="1" height="18" fill="#ffff00"/>
<rect x="204" y="237" width="1" height="18" fill="#d0d000"/>
<rect x="205" y="237" width="1" height="18" fill="#ffff00"/>
<rect x="206" y="237" width="1" height="18" fill="#d0d000"/>
<rect x="207" y="237" width="1" height="18" fill="#ffff00"/>
<rect x="208" y="237" width="1" height="18" fill="#d0d000"/>
<rect x="209" y="237" width="1" height="18" fill="#ffff00"/>
<rect x="210" y="237" width="1" height="18" fill="#d0d000"/>
<rect x="211" y="237" width="1" height="18" fill="#ffff00"/>
<rect x="212" y="237" width="1" height="18" fill="#d0d000"/>
<rect x="213" y="237" width="1" height="18" fill="#ffff00"/>
<rect x="214" y="237" width="1" height="18" fill="#d0d000"/>
<rect x="215" y="237" width="1" height="18" fill="#ffff00"/>
<rect x="216" y="237" width="1" height="18" fill="#d0d000"/>
<rect x="217" y="237" width="1" height="18" fill="#ffff00"/>
<rect x="218" y="237" width="1" height="18" fill="#d0d000"/>
<rect x="219" y="237" width="1" height="18" fill="#ffff00"/>
<rect x="220" y="237" width="1" height="18" fill="#d0d000"/>
<rect x="221" y="237" width="1" height="18" fill="#ffff00"/>
<rect x="222" y="237" width="1" height="18" fill="#d0d000"/>
<rect x="224" y="237" width="1" height="18" fill="#d0d000"/>
<rect x="225" y="237" width="1" height="18" fill="#ffff00"/>
<rect x="226" y="237" width="1" height="18" fill="#d0d000"/>
<rect x="227" y="237" width="1" height="18" fill="#ffff00"/>
<rect x="228" y="237" width="1" height="18" fill="#d0d000"/>
<rect x="229" y="237" width="1" height="18" fill="#ffff00"/>
<rect x="230" y="237" width="1" height="18" fill="#d0d000"/>
<rect x="232" y="237" width="1" height="18" fill="#d0d000"/>
<rect x="233" y="237" width="1" height="18" fill="#ffff00"/>
<rect x="234" y="237" width="1" height="18" fill="#d0d000"/>
<rect x="235" y="237" width="1" height="18" fill="#ffff00"/>
<rect x="236" y="237" width="1" height="18" fill="#d0d000"/>
<rect x="237" y="237" width="1" height="18" fill="#ffff00"/>
<rect x="238" y="237" width="1" height="18" fill="#d0d000"/>
<rect x="239" y="237" width="1" height="18" fill="#ffff00"/>
<rect x="242" y="237" width="1" height="18" fill="#d0d000"/>
<rect x="243" y="237" width="1" height="18" fill="#ffff00"/>
<rect x="244" y="237" width="1" height="18" fill="#d0d000"/>
<rect x="245" y="237" width="1" height="18" fill="#ffff00"/>
<rect x="246" y="237" width="1" height="18" fill="#d0d000"/>
<rect x="247" y="237" width="1" height="18" fill="#ffff00"/>
<rect x="248" y="237" width="1" height="18" fill="#d0d000"/>
<rect x="249" y="237" width="1" height="18" fill="#ffff00"/>
<rect x="252" y="237" width="1" height="18" fill="#d0d000"/>
<rect x="253" y="237" width="1" height="18" fill="#ffff00"/>
<rect x="254" y="237" width="1" height="18" fill="#d0d000"/>
<rect x="255" y="237" width="1" height="18" fill="#ffff00"/>
<rect x="256" y="237" width="1" height="18" fill="#d0d000"/>
<rect x="257" y="237" width="1" height="18" fill="#ffff00"/>
<rect x="258" y="237" width="1" height="18" fill="#d0d000"/>
<rect x="259" y="237" width="1" height="18" fill="#ffff00"/>
<rect x="260" y="237" width="1" height="18" fill="#d0d000"/>
<rect x="261" y="237" width="1" height="18" fill="#ffff00"/>
<rect x="262" y="237" width="1" height="18" fill="#d0d000"/>
<rect x="263" y="237" width="1" height="18" fill="#ffff00"/>
<rect x="264" y="237" width="1" height="18" fill="#d0d000"/>
<rect x="265" y="237" width="1" height="18" fill="#ffff00"/>
<rect x="266" y="237" width="1" height="18" fill="#d0d000"/>
<rect x="267" y="237" width="1" height="18" fill="#ffff00"/>
<rect x="268" y="237" width="1" height="18" fill="#d0d000"/>
<rect x="269" y="237" width="1" height="18" fill="#ffff00"/>
<rect x="270" y="237" width="1" height="18" fill="#d0d000"/>
<rect x="271" y="237" width="1" height="18" fill="#ffff00"/>
<rect x="272" y="237" width="1" height="18" fill="#d0d000"/>
<rect x="273" y="237" width="1" height="18" fill="#ffff00"/>
<rect x="274" y="237" width="1" height="18" fill="#d0d000"/>
<rect x="275" y="237" width="1" height="18" fill="#ffff00"/>
<rect x="276" y="237" width="1" height="18" fill="#d0d000"/>
<rect x="277" y="237" width="1" height="18" fill="#ffff00"/>
<rect x="280" y="237" width="1" height="18" fill="#d0d000"/>
<rect x="281" y="237" width="1" height="18" fill="#ffff00"/>
<rect x="282" y="237" width="1" height="18" fill="#d0d000"/>
<rect x="283" y="237" width="1" height="18" fill="#ffff00"/>
<rect x="284" y="237" width="1" height="18" fill="#d0d000"/>
<rect x="285" y="237" width="1" height="18" fill="#ffff00"/>
<rect x="286" y="237" width="1" height="18" fill="#d0d000"/>
<rect x="287" y="237" width="1" height="18" fill="#ffff00"/>
<rect x="288" y="237" width="1" height="18" fill="#d0d000"/>
<rect x="289" y="237" width="1" height="18" fill="#ffff00"/>
<rect x="290" y="237" width="1" height="18" fill="#d0d000"/>
<rect x="291" y="237" width="1" height="18" fill="#ffff00"/>
<rect x="292" y="237" width="1" height="18" fill="#d0d000"/>
<rect x="293" y="237" width="1" height="18" fill="#ffff00"/>
<rect x="294" y="237" width="1" height="18" fill="#d0d000"/>
<rect x="295" y="237" width="1" height="18" fill="#ffff00"/>
<rect x="296" y="237" width="1" height="18" fill="#d0d000"/>
<rect x="297" y="237" width="1" height="18" fill="#ffff00"/>
<rect x="298" y="237" width="1" height="18" fill="#d0d000"/>
<rect x="299" y="237" width="1" height="18" fill="#ffff00"/>
<rect x="300" y="237" width="1" height="18" fill="#d0d000"/>
<rect x="301" y="237" width="1" height="18" fill="#ffff00"/>
<rect x="302" y="237" width="1" height="18" fill="#d0d000"/>
<rect x="303" y="237" width="1" height="18" fill="#ffff00"/>
<rect x="304" y="237" width="1" height="18" fill="#d0d000"/>
<rect x="305" y="237" width="1" height="18" fill="#ffff00"/>
<rect x="306" y="237" width="1" height="18" fill="#d0d000"/>
<rect x="308" y="237" width="1" height="18" fill="#d0d000"/>
<rect x="309" y="237" width="1" height="18" fill="#ffff00"/>
<rect x="310" y="237" width="1" height="18" fill="#d0d000"/>
<rect x="311" y="237" width="1" height="18" fill="#ffff00"/>
<rect x="312" y="237" width="1" height="18" fill="#d0d000"/>
<rect x="313" y="237" width="1" height="18" fill="#ffff00"/>
<rect x="314" y="237" width="1" height="18" fill="#d0d000"/>
<rect x="315" y="237" width="1" height="18" fill="#ffff00"/>
<rect x="316" y="237" width="1" height="18" fill="#d0d000"/>
<rect x="317" y="237" width="1" height="18" fill="#ffff00"/>
<rect x="318" y="237" width="1" height="18" fill="#d0d000"/>
<rect x="319" y="237" width="1" height="18" fill="#ffff00"/>
<rect x="320" y="237" width="1" height="18" fill="#d0d000"/>
<rect x="321" y="237" width="1" height="18" fill="#ffff00"/>
<rect x="322" y="237" width="1" height="18" fill="#d0d000"/>
<rect x="323" y="237" width="1" height="18" fill="#ffff00"/>
<rect x="324" y="237" width="1" height="18" fill="#d0d000"/>
<rect x="325" y="237" width="1" height="18" fill="#ffff00"/>
<rect x="326" y="237" width="1" height="18" fill="#d0d000"/>
<rect x="327" y="237" width="1" height="18" fill="#ffff00"/>
<rect x="328" y="237" width="1" height="18" fill="#d0d000"/>
<rect x="329" y="237" width="1" height="18" fill="#ffff00"/>
<rect x="330" y="237" width="1" height="18" fill="#d0d000"/>
<rect x="331" y="237" width="1" height="18" fill="#ffff00"/>
<rect x="332" y="237" width="1" height="18" fill="#d0d000"/>
<rect x="333" y="237" width="1" height="18" fill="#ffff00"/>
<rect x="334" y="237" width="1" height="18" fill="#d0d000"/>
<rect x="337" y="237" width="1" height="18" fill="#d0d000"/>
<rect x="338" y="237" width="1" height="18" fill="#d0d000"/>
<rect x="339" y="237" width="1" height="18" fill="#ffff00"/>
<rect x="340" y="237" width="1" height="18" fill="#d0d000"/>
<rect x="341" y="237" width="1" height="18" fill="#ffff00"/>
<rect x="342" y="237" width="1" height="18" fill="#d0d000"/>
<rect x="343" y="237" width="1" height="18" fill="#ffff00"/>
<rect x="345" y="237" width="1" height="18" fill="#d0d000"/>
<rect x="346" y="237" width="1" height="18" fill="#d0d000"/>
<rect x="347" y="237" width="1" height="18" fill="#ffff00"/>
<rect x="348" y="237" width="1" height="18" fill="#d0d000"/>
<rect x="349" y="237" width="1" height="18" fill="#ffff00"/>
<rect x="350" y="237" width="1" height="18" fill="#d0d000"/>
<rect x="351" y="237" width="1" height="18" fill="#ffff00"/>
<rect x="352" y="237" width="1" height="18" fill="#d0d000"/>
<rect x="354" y="237" width="1" height="18" fill="#d0d000"/>
<rect x="355" y="237" width="1" height="18" fill="#ffff00"/>
<rect x="356" y="237" width="1" height="18" fill="#d0d000"/>
<rect x="357" y="237" width="1" height="18" fill="#ffff00"/>
<rect x="358" y="237" width="1" height="18" fill="#d0d000"/>
<rect x="359" y="237" width="1" height="18" fill="#ffff00"/>
<rect x="360" y="237" width="1" height="18" fill="#d0d000"/>
<rect x="361" y="237" width="1" height="18" fill="#ffff00"/>
<rect x="362" y="237" width="1" height="18" fill="#d0d000"/>
<rect x="365" y="237" width="1" height="18" fill="#d0d000"/>
<rect x="366" y="237" width="1" height="18" fill="#d0d000"/>
<rect x="367" y="237" width="1" height="18" fill="#ffff00"/>
<rect x="368" y="237" width="1" height="18" fill="#d0d000"/>
<rect x="369" y="237" width="1" height="18" fill="#ffff00"/>
<rect x="370" y="237" width="1" height="18" fill="#d0d000"/>
<rect x="371" y="237" width="1" height="18" fill="#ffff00"/>
<rect x="372" y="237" width="1" height="18" fill="#d0d000"/>
<rect x="373" y="237" width="1" height="18" fill="#ffff00"/>
<rect x="374" y="237" width="1" height="18" fill="#d0d000"/>
<rect x="375" y="237" width="1" height="18" fill="#ffff00"/>
<rect x="376" y="237" width="1" height="18" fill="#d0d000"/>
<rect x="377" y="237" width="1" height="18" fill="#ffff00"/>
<rect x="378" y="237" width="1" height="18" fill="#d0d000"/>
<rect x="379" y="237" width="1" height="18" fill="#ffff00"/>
<rect x="380" y="237" width="1" height="18" fill="#d0d000"/>
<rect x="381" y="237" width="1" height="18" fill="#ffff00"/>
<rect x="382" y="237" width="1" height="18" fill="#d0d000"/>
<rect x="383" y="237" width="1" height="18" fill="#ffff00"/>
<rect x="384" y="237" width="1" height="18" fill="#d0d000"/>
<rect x="385" y="237" width="1" height="18" fill="#ffff00"/>
<rect x="386" y="237" width="1" height="18" fill="#d0d000"/>
<rect x="387" y="237" width="1" height="18" fill="#ffff00"/>
<rect x="388" y="237" width="1" height="18" fill="#d0d000"/>
<rect x="389" y="237" width="1" height="18" fill="#ffff00"/>
<rect x="390" y="237" width="1" height="18" fill="#d0d000"/>
<rect x="393" y="237" width="1" height="18" fill="#d0d000"/>
<rect x="394" y="237" width="1" height="18" fill="#d0d000"/>
<rect x="395" y="237" width="1" height="18" fill="#ffff00"/>
<rect x="396" y="237" width="1" height="18" fill="#d0d000"/>
<rect x="397" y="237" width="1" height="18" fill="#ffff00"/>
<rect x="398" y="237" width="1" height="18" fill="#d0d000"/>
<rect x="399" y="237" width="1" height="18" fill="#ffff00"/>
<rect x="400" y="237" width="1" height="18" fill="#d0d000"/>
<rect x="401" y="237" width="1" height="18" fill="#ffff00"/>
<rect x="402" y="237" width="1" height="18" fill="#d0d000"/>
<rect x="403" y="237" width="1" height="18" fill="#ffff00"/>
<rect x="404" y="237" width="1" height="18" fill="#d0d000"/>
<rect x="405" y="237" width="1" height="18" fill="#ffff00"/>
<rect x="406" y="237" width="1" height="18" fill="#d0d000"/>
<rect x="407" y="237" width="1" height="18" fill="#ffff00"/>
<rect x="408" y="237" width="1" height="18" fill="#d0d000"/>
<rect x="409" y="237" width="1" height="18" fill="#ffff00"/>
<rect x="410" y="237" width="1" height="18" fill="#d0d000"/>
<rect x="411" y="237" width="1" height="18" fill="#ffff00"/>
<rect x="412" y="237" width="1" height="18" fill="#d0d000"/>
<rect x="413" y="237" width="1" height="18" fill="#ffff00"/>
<rect x="414" y="237" width="1" height="18" fill="#d0d000"/>
<rect x="415" y="237" width="1" height="18" fill="#ffff00"/>
<rect x="416" y="237" width="1" height="18" fill="#d0d000"/>
<rect x="417" y="237" width="1" height="18" fill="#ffff00"/>
<rect x="418" y="237" width="1" height="18" fill="#d0d000"/>
<rect x="421" y="237" width="1" height="18" fill="#d0d000"/>
<rect x="422" y="237" width="1" height="18" fill="#d0d000"/>
<rect x="423" y="237" width="1" height="18" fill="#ffff00"/>
<rect x="424" y="237" width="1" height="18" fill="#d0d000"/>
<rect x="425" y="237" width="1" height="18" fill="#ffff00"/>
<rect x="426" y="237" width="1" height="18" fill="#d0d000"/>
<rect x="427" y="237" width="1" height="18" fill="#ffff00"/>
<rect x="428" y="237" width="1" height="18" fill="#d0d000"/>
<rect x="429" y="237" width="1" height="18" fill="#ffff00"/>
<rect x="430" y="237" width="1" height="18" fill="#d0d000"/>
<rect x="431" y="237" width="1" height="18" fill="#ffff00"/>
<rect x="432" y="237" width="1" height="18" fill="#d0d000"/>
<rect x="433" y="237" width="1" height="18" fill="#ffff00"/>
<rect x="434" y="237" width="1" height="18" fill="#d0d000"/>
<rect x="435" y="237" width="1" height="18" fill="#ffff00"/>
<rect x="436" y="237" width="1" height="18" fill="#d0d000"/>
<rect x="437" y="237" width="1" height="18" fill="#ffff00"/>
<rect x="438" y="237" width="1" height="18" fill="#d0d000"/>
<rect x="439" y="237" width="1" height="18" fill="#ffff00"/>
<rect x="440" y="237" width="1" height="18" fill="#d0d000"/>
<rect x="441" y="237" width="1" height="18" fill="#ffff00"/>
<rect x="442" y="237" width="1" height="18" fill="#d0d000"/>
<rect x="443" y="237" width="1" height="18" fill="#ffff00"/>
<rect x="444" y="237" width="1" height="18" fill="#d0d000"/>
<rect x="445" y="237" width="1" height="18" fill="#ffff00"/>
<rect x="446" y="237" width="1" height="18" fill="#d0d000"/>
<rect x="449" y="237" width="1" height="18" fill="#d0d000"/>
<rect x="450" y="237" width="1" height="18" fill="#d0d000"/>
<rect x="451" y="237" width="1" height="18" fill="#ffff00"/>
<rect x="452" y="237" width="1" height="18" fill="#d0d000"/>
<rect x="453" y="237" width="1" height="18" fill="#ffff00"/>
<rect x="454" y="237" width="1" height="18" fill="#d0d000"/>
<rect x="455" y="237" width="1" height="18" fill="#ffff00"/>
<rect x="456" y="237" width="1" height="18" fill="#d0d000"/>
<rect x="458" y="237" width="1" height="18" fill="#d0d000"/>
<rect x="459" y="237" width="1" height="18" fill="#ffff00"/>
<rect x="460" y="237" width="1" height="18" fill="#d0d000"/>
<rect x="461" y="237" width="1" height="18" fill="#ffff00"/>
<rect x="462" y="237" width="1" height="18" fill="#d0d000"/>
<rect x="463" y="237" width="1" height="18" fill="#ffff00"/>
<rect x="464" y="237" width="1" height="18" fill="#d0d000"/>
<rect x="465" y="237" width="1" height="18" fill="#ffff00"/>
<rect x="467" y="237" width="1" height="18" fill="#d0d000"/>
<rect x="468" y="237" width="1" height="18" fill="#d0d000"/>
<rect x="469" y="237" width="1" height="18" fill="#ffff00"/>
<rect x="470" y="237" width="1" height="18" fill="#d0d000"/>
<rect x="471" y="237" width="1" height="18" fill="#ffff00"/>
<rect x="472" y="237" width="1" height="18" fill="#d0d000"/>
<rect x="473" y="237" width="1" height="18" fill="#ffff00"/>
<rect x="474" y="237" width="1" height="18" fill="#d0d000"/>
<rect x="475" y="237" width="1" height="18" fill="#ffff00"/>
<rect x="477" y="237" width="1" height="18" fill="#d0d000"/>
<rect x="478" y="237" width="1" height="18" fill="#d0d000"/>
<rect x="479" y="237" width="1" height="18" fill="#ffff00"/>
<rect x="480" y="237" width="1" height="18" fill="#d0d000"/>
<rect x="481" y="237" width="1" height="18" fill="#ffff00"/>
<rect x="482" y="237" width="1" height="18" fill="#d0d000"/>
<rect x="483" y="237" width="1" height="18" fill="#ffff00"/>
<rect x="484" y="237" width="1" height="18" fill="#d0d000"/>
<rect x="485" y="237" width="1" height="18" fill="#ffff00"/>
<rect x="486" y="237" width="1" height="18" fill="#d0d000"/>
<rect x="487" y="237" width="1" height="18" fill="#ffff00"/>
<rect x="488" y="237" width="1" height="18" fill="#d0d000"/>
<rect x="489" y="237" width="1" height="18" fill="#ffff00"/>
<rect x="490" y="237" width="1" height="18" fill="#d0d000"/>
<rect x="491" y="237" width="1" height="18" fill="#ffff00"/>
<rect x="492" y="237" width="1" height="18" fill="#d0d000"/>
<rect x="493" y="237" width="1" height="18" fill="#ffff00"/>
<rect x="494" y="237" width="1" height="18" fill="#d0d000"/>
<rect x="495" y="237" width="1" height="18" fill="#ffff00"/>
<rect x="496" y="237" width="1" height="18" fill="#d0d000"/>
<rect x="497" y="237" width="1" height="18" fill="#ffff00"/>
<rect x="498" y="237" width="1" height="18" fill="#d0d000"/>
<rect x="499" y="237" width="1" height="18" fill="#ffff00"/>
<rect x="500" y="237" width="1" height="18" fill="#d0d000"/>
<rect x="501" y="237" width="1" height="18" fill="#ffff00"/>
<rect x="502" y="237" width="1" height="18" fill="#d0d000"/>
<rect x="503" y="237" width="1" height="18" fill="#ffff00"/>
<rect x="505" y="237" width="1" height="18" fill="#d0d000"/>
<rect x="506" y="237" width="1" height="18" fill="#d0d000"/>
<rect x="507" y="237" width="1" height="18" fill="#ffff00"/>
<rect x="508" y="237" width="1" height="18" fill="#d0d000"/>
<rect x="509" y="237" width="1" height="18" fill="#ffff00"/>
<rect x="510" y="237" width="1" height="18" fill="#d0d000"/>
<rect x="511" y="237" width="1" height="18" fill="#ffff00"/>
<rect x="512" y="237" width="1" height="18" fill="#d0d000"/>
<rect x="513" y="237" width="1" height="18" fill="#ffff00"/>
<rect x="514" y="237" width="1" height="18" fill="#d0d000"/>
<rect x="515" y="237" width="1" height="18" fill="#ffff00"/>
<rect x="516" y="237" width="1" height="18" fill="#d0d000"/>
<rect x="517" y="237" width="1" height="18" fill="#ffff00"/>
<rect x="518" y="237" width="1" height="18" fill="#d0d000"/>
<rect x="519" y="237" width="1" height="18" fill="#ffff00"/>
<rect x="520" y="237" width="1" height="18" fill="#d0d000"/>
<rect x="521" y="237" width="1" height="18" fill="#ffff00"/>
<rect x="522" y="237" width="1" height="18" fill="#d0d000"/>
<rect x="523" y="237" width="1" height="18" fill="#ffff00"/>
<rect x="524" y="237" width="1" height="18" fill="#d0d000"/>
<rect x="525" y="237" width="1" height="18" fill="#ffff00"/>
<rect x="526" y="237" width="1" height="18" fill="#d0d000"/>
<rect x="527" y="237" width="1" height="18" fill="#ffff00"/>
<rect x="528" y="237" width="1" height="18" fill="#d0d000"/>
<rect x="529" y="237" width="1" height="18" fill="#ffff00"/>
<rect x="530" y="237" width="1" height="18" fill="#d0d000"/>
<rect x="531" y="237" width="1" height="18" fill="#ffff00"/>
<rect x="534" y="237" width="1" height="18" fill="#d0d000"/>
<rect x="535" y="237" width="1" height="18" fill="#ffff00"/>
<rect x="536" y="237" width="1" height="18" fill="#d0d000"/>
<rect x="537" y="237" width="1" height="18" fill="#ffff00"/>
<rect x="538" y="237" width="1" height="18" fill="#d0d000"/>
<rect x="539" y="237" width="1" height="18" fill="#ffff00"/>
<rect x="540" y="237" width="1" height="18" fill="#d0d000"/>
<rect x="541" y="237" width="1" height="18" fill="#ffff00"/>
<rect x="542" y="237" width="1" height="18" fill="#d0d000"/>
<rect x="543" y="237" width="1" height="18" fill="#ffff00"/>
<rect x="544" y="237" width="1" height="18" fill="#d0d000"/>
<rect x="545" y="237" width="1" height="18" fill="#ffff00"/>
<rect x="546" y="237" width="1" height="18" fill="#d0d000"/>
<rect x="547" y="237" width="1" height="18" fill="#ffff00"/>
<rect x="548" y="237" width="1" height="18" fill="#d0d000"/>
<rect x="549" y="237" width="1" height="18" fill="#ffff00"/>
<rect x="550" y="237" width="1" height="18" fill="#d0d000"/>
<rect x="551" y="237" width="1" height="18" fill="#ffff00"/>
<rect x="552" y="237" width="1" height="18" fill="#d0d000"/>
<rect x="553" y="237" width="1" height="18" fill="#ffff00"/>
<rect x="554" y="237" width="1" height="18" fill="#d0d000"/>
<rect x="555" y="237" width="1" height="18" fill="#ffff00"/>
<rect x="556" y="237" width="1" height="18" fill="#d0d000"/>
<rect x="557" y="237" width="1" height="18" fill="#ffff00"/>
<rect x="558" y="237" width="1" height="18" fill="#d0d000"/>
<rect x="559" y="237" width="1" height="18" fill="#ffff00"/>
<rect x="127" y="255" width="1" height="18" fill="#96e4ee"/>
<rect x="239" y="255" width="2" height="18" fill="#00c8e6"/>
<rect x="352" y="255" width="2" height="18" fill="#96e4ee"/>
<rect x="465" y="255" width="1" height="18" fill="#00c8e6"/>
<rect x="577" y="255" width="2" height="18" fill="#96e4ee"/>
<rect x="231" y="273" width="1" height="17" fill="#00ff00"/>
<rect x="456" y="273" width="1" height="17" fill="#00c400"/>
<rect x="239" y="290" width="1" height="18" fill="#96e4ee"/>
<rect x="465" y="290" width="1" height="18" fill="#00c8e6"/>
<rect x="138" y="308" width="2" height="17" fill="#ffff00"/>
<rect x="166" y="308" width="2" height="17" fill="#d0d000"/>
<rect x="194" y="308" width="2" height="17" fill="#ffff00"/>
<rect x="222" y="308" width="2" height="17" fill="#d0d000"/>
<rect x="250" y="308" width="2" height="17" fill="#ffff00"/>
<rect x="278" y="308" width="2" height="17" fill="#d0d000"/>
<rect x="307" y="308" width="1" height="17" fill="#ffff00"/>
<rect x="335" y="308" width="2" height="17" fill="#d0d000"/>
<rect x="363" y="308" width="2" height="17" fill="#ffff00"/>
<rect x="391" y="308" width="2" height="17" fill="#d0d000"/>
<rect x="419" y="308" width="2" height="17" fill="#ffff00"/>
<rect x="447" y="308" width="2" height="17" fill="#d0d000"/>
<rect x="475" y="308" width="2" height="17" fill="#ffff00"/>
<rect x="504" y="308" width="2" height="17" fill="#d0d000"/>
<rect x="532" y="308" width="2" height="17" fill="#ffff00"/>
<rect x="560" y="308" width="2" height="17" fill="#d0d000"/>
<rect x="563" y="325" width="1" height="18" fill="#d0d000"/>
<rect x="564" y="343" width="1" height="17" fill="#ffff00"/>
<rect x="564" y="360" width="1" height="18" fill="#ffff00"/>
<rect x="565" y="378" width="1" height="18" fill="#ffff00"/>
<rect x="565" y="396" width="1" height="17" fill="#ffff00"/>
<rect x="109" y="483" width="563" height="1" fill="#ff0000"/>
<rect x="109" y="468" width="9" height="16" fill="#fff"/>
<rect x="118" y="467" width="1" height="17" fill="#fff"/>
<rect x="119" y="469" width="1" height="15" fill="#fff"/>
<rect x="120" y="475" width="1" height="9" fill="#fff"/>
<rect x="121" y="480" width="1" height="4" fill="#fff"/>
<rect x="122" y="480" width="444" height="3" fill="#fff"/>
<rect x="123" y="477" width="1" height="3" fill="#fff"/>
<rect x="124" y="478" width="1" height="2" fill="#fff"/>
<rect x="127" y="476" width="1" height="4" fill="#fff"/>
<rect x="128" y="479" width="3" height="1" fill="#fff"/>
<rect x="127" y="483" width="3" height="1" fill="#fff"/>
<rect x="132" y="477" width="1" height="3" fill="#fff"/>
<rect x="130" y="479" width="2" height="1" fill="#fff"/>
<rect x="132" y="483" width="1" height="1" fill="#fff"/>
<rect x="137" y="477" width="1" height="3" fill="#fff"/>
<rect x="137" y="483" width="1" height="1" fill="#fff"/>
<rect x="142" y="474" width="1" height="6" fill="#fff"/>
<rect x="146" y="477" width="1" height="3" fill="#fff"/>
<rect x="147" y="479" width="1" height="1" fill="#fff"/>
<rect x="146" y="483" width="1" height="1" fill="#fff"/>
<rect x="151" y="474" width="1" height="6" fill="#fff"/>
<rect x="152" y="479" width="3" height="1" fill="#fff"/>
<rect x="151" y="483" width="3" height="1" fill="#fff"/>
<rect x="156" y="477" width="1" height="3" fill="#fff"/>
<rect x="154" y="479" width="2" height="1" fill="#fff"/>
<rect x="157" y="478" width="1" height="2" fill="#fff"/>
<rect x="160" y="477" width="1" height="3" fill="#fff"/>
<rect x="165" y="477" width="1" height="3" fill="#fff"/>
<rect x="163" y="479" width="2" height="1" fill="#fff"/>
<rect x="170" y="477" width="1" height="3" fill="#fff"/>
<rect x="174" y="474" width="1" height="6" fill="#fff"/>
<rect x="175" y="479" width="2" height="1" fill="#fff"/>
<rect x="179" y="477" width="1" height="3" fill="#fff"/>
<rect x="179" y="483" width="3" height="1" fill="#fff"/>
<rect x="184" y="477" width="1" height="3" fill="#fff"/>
<rect x="185" y="479" width="2" height="1" fill="#fff"/>
<rect x="188" y="477" width="1" height="3" fill="#fff"/>
<rect x="193" y="477" width="1" height="3" fill="#fff"/>
<rect x="194" y="479" width="2" height="1" fill="#fff"/>
<rect x="198" y="478" width="1" height="2" fill="#fff"/>
<rect x="199" y="479" width="1" height="1" fill="#fff"/>
<rect x="203" y="477" width="1" height="3" fill="#fff"/>
<rect x="204" y="479" width="3" height="1" fill="#fff"/>
<rect x="207" y="478" width="1" height="2" fill="#fff"/>
<rect x="208" y="479" width="2" height="1" fill="#fff"/>
<rect x="212" y="478" width="1" height="2" fill="#fff"/>
<rect x="210" y="479" width="2" height="1" fill="#fff"/>
<rect x="217" y="477" width="1" height="3" fill="#fff"/>
<rect x="217" y="483" width="1" height="1" fill="#fff"/>
<rect x="221" y="478" width="1" height="2" fill="#fff"/>
<rect x="222" y="479" width="2" height="1" fill="#fff"/>
<rect x="226" y="477" width="1" height="3" fill="#fff"/>
<rect x="231" y="477" width="1" height="3" fill="#fff"/>
<rect x="235" y="477" width="1" height="3" fill="#fff"/>
<rect x="236" y="479" width="1" height="1" fill="#fff"/>
<rect x="235" y="483" width="3" height="1" fill="#fff"/>
<rect x="240" y="478" width="1" height="2" fill="#fff"/>
<rect x="240" y="483" width="2" height="1" fill="#fff"/>
<rect x="241" y="478" width="1" height="2" fill="#fff"/>
<rect x="245" y="477" width="1" height="3" fill="#fff"/>
<rect x="249" y="477" width="1" height="3" fill="#fff"/>
<rect x="254" y="477" width="1" height="3" fill="#fff"/>
<rect x="252" y="479" width="2" height="1" fill="#fff"/>
<rect x="259" y="476" width="1" height="4" fill="#fff"/>
<rect x="257" y="479" width="2" height="1" fill="#fff"/>
<rect x="260" y="478" width="1" height="2" fill="#fff"/>
<rect x="263" y="477" width="1" height="3" fill="#fff"/>
<rect x="264" y="479" width="1" height="1" fill="#fff"/>
<rect x="268" y="477" width="1" height="3" fill="#fff"/>
<rect x="269" y="479" width="1" height="1" fill="#fff"/>
<rect x="268" y="483" width="3" height="1" fill="#fff"/>
<rect x="273" y="477" width="1" height="3" fill="#fff"/>
<rect x="274" y="478" width="1" height="2" fill="#fff"/>
<rect x="278" y="477" width="1" height="3" fill="#fff"/>
<rect x="278" y="483" width="2" height="1" fill="#fff"/>
<rect x="282" y="474" width="1" height="6" fill="#fff"/>
<rect x="280" y="479" width="2" height="1" fill="#fff"/>
<rect x="282" y="483" width="2" height="1" fill="#fff"/>
<rect x="287" y="478" width="1" height="2" fill="#fff"/>
<rect x="285" y="479" width="2" height="1" fill="#fff"/>
<rect x="292" y="477" width="1" height="3" fill="#fff"/>
<rect x="296" y="476" width="1" height="4" fill="#fff"/>
<rect x="297" y="479" width="3" height="1" fill="#fff"/>
<rect x="301" y="477" width="1" height="3" fill="#fff"/>
<rect x="301" y="483" width="3" height="1" fill="#fff"/>
<rect x="306" y="477" width="1" height="3" fill="#fff"/>
<rect x="310" y="477" width="1" height="3" fill="#fff"/>
<rect x="315" y="477" width="1" height="3" fill="#fff"/>
<rect x="320" y="477" width="1" height="3" fill="#fff"/>
<rect x="324" y="477" width="1" height="3" fill="#fff"/>
<rect x="325" y="479" width="2" height="1" fill="#fff"/>
<rect x="325" y="478" width="1" height="2" fill="#fff"/>
<rect x="329" y="477" width="1" height="3" fill="#fff"/>
<rect x="334" y="474" width="1" height="6" fill="#fff"/>
<rect x="339" y="477" width="1" height="3" fill="#fff"/>
<rect x="343" y="477" width="1" height="3" fill="#fff"/>
<rect x="341" y="479" width="2" height="1" fill="#fff"/>
<rect x="348" y="474" width="1" height="6" fill="#fff"/>
<rect x="353" y="477" width="1" height="3" fill="#fff"/>
<rect x="353" y="483" width="2" height="1" fill="#fff"/>
<rect x="357" y="477" width="1" height="3" fill="#fff"/>
<rect x="355" y="479" width="2" height="1" fill="#fff"/>
<rect x="357" y="483" width="3" height="1" fill="#fff"/>
<rect x="362" y="477" width="1" height="3" fill="#fff"/>
<rect x="360" y="479" width="2" height="1" fill="#fff"/>
<rect x="363" y="478" width="1" height="2" fill="#fff"/>
<rect x="367" y="477" width="1" height="3" fill="#fff"/>
<rect x="368" y="479" width="1" height="1" fill="#fff"/>
<rect x="367" y="483" width="3" height="1" fill="#fff"/>
<rect x="371" y="477" width="1" height="3" fill="#fff"/>
<rect x="376" y="477" width="1" height="3" fill="#fff"/>
<rect x="377" y="479" width="3" height="1" fill="#fff"/>
<rect x="376" y="483" width="1" height="1" fill="#fff"/>
<rect x="381" y="477" width="1" height="3" fill="#fff"/>
<rect x="385" y="477" width="1" height="3" fill="#fff"/>
<rect x="385" y="483" width="2" height="1" fill="#fff"/>
<rect x="390" y="476" width="1" height="4" fill="#fff"/>
<rect x="391" y="479" width="3" height="1" fill="#fff"/>
<rect x="395" y="477" width="1" height="3" fill="#fff"/>
<rect x="396" y="479" width="3" height="1" fill="#fff"/>
<rect x="400" y="474" width="1" height="6" fill="#fff"/>
<rect x="404" y="476" width="1" height="4" fill="#fff"/>
<rect x="405" y="479" width="1" height="1" fill="#fff"/>
<rect x="405" y="478" width="1" height="2" fill="#fff"/>
<rect x="409" y="478" width="1" height="2" fill="#fff"/>
<rect x="414" y="477" width="1" height="3" fill="#fff"/>
<rect x="415" y="479" width="2" height="1" fill="#fff"/>
<rect x="418" y="477" width="1" height="3" fill="#fff"/>
<rect x="419" y="479" width="3" height="1" fill="#fff"/>
<rect x="423" y="477" width="1" height="3" fill="#fff"/>
<rect x="423" y="483" width="1" height="1" fill="#fff"/>
<rect x="428" y="477" width="1" height="3" fill="#fff"/>
<rect x="432" y="477" width="1" height="3" fill="#fff"/>
<rect x="430" y="479" width="2" height="1" fill="#fff"/>
<rect x="437" y="476" width="1" height="4" fill="#fff"/>
<rect x="438" y="479" width="2" height="1" fill="#fff"/>
<rect x="442" y="478" width="1" height="2" fill="#fff"/>
<rect x="442" y="483" width="3" height="1" fill="#fff"/>
<rect x="446" y="477" width="1" height="3" fill="#fff"/>
<rect x="451" y="478" width="1" height="2" fill="#fff"/>
<rect x="452" y="479" width="1" height="1" fill="#fff"/>
<rect x="456" y="477" width="1" height="3" fill="#fff"/>
<rect x="454" y="479" width="2" height="1" fill="#fff"/>
<rect x="456" y="483" width="2" height="1" fill="#fff"/>
<rect x="460" y="477" width="1" height="3" fill="#fff"/>
<rect x="465" y="477" width="1" height="3" fill="#fff"/>
<rect x="470" y="477" width="1" height="3" fill="#fff"/>
<rect x="468" y="479" width="2" height="1" fill="#fff"/>
<rect x="475" y="477" width="1" height="3" fill="#fff"/>
<rect x="476" y="479" width="2" height="1" fill="#fff"/>
<rect x="479" y="477" width="1" height="3" fill="#fff"/>
<rect x="480" y="479" width="2" height="1" fill="#fff"/>
<rect x="479" y="483" width="2" height="1" fill="#fff"/>
<rect x="480" y="478" width="1" height="2" fill="#fff"/>
<rect x="484" y="476" width="1" height="4" fill="#fff"/>
<rect x="482" y="479" width="2" height="1" fill="#fff"/>
<rect x="489" y="476" width="1" height="4" fill="#fff"/>
<rect x="490" y="478" width="1" height="2" fill="#fff"/>
<rect x="493" y="477" width="1" height="3" fill="#fff"/>
<rect x="493" y="483" width="2" height="1" fill="#fff"/>
<rect x="498" y="477" width="1" height="3" fill="#fff"/>
<rect x="499" y="479" width="1" height="1" fill="#fff"/>
<rect x="503" y="477" width="1" height="3" fill="#fff"/>
<rect x="501" y="479" width="2" height="1" fill="#fff"/>
<rect x="507" y="478" width="1" height="2" fill="#fff"/>
<rect x="507" y="483" width="1" height="1" fill="#fff"/>
<rect x="512" y="477" width="1" height="3" fill="#fff"/>
<rect x="510" y="479" width="2" height="1" fill="#fff"/>
<rect x="512" y="483" width="1" height="1" fill="#fff"/>
<rect x="517" y="477" width="1" height="3" fill="#fff"/>
<rect x="518" y="479" width="1" height="1" fill="#fff"/>
<rect x="517" y="483" width="1" height="1" fill="#fff"/>
<rect x="521" y="477" width="1" height="3" fill="#fff"/>
<rect x="526" y="474" width="1" height="6" fill="#fff"/>
<rect x="527" y="479" width="3" height="1" fill="#fff"/>
<rect x="531" y="477" width="1" height="3" fill="#fff"/>
<rect x="532" y="479" width="1" height="1" fill="#fff"/>
<rect x="531" y="483" width="2" height="1" fill="#fff"/>
<rect x="536" y="476" width="1" height="4" fill="#fff"/>
<rect x="536" y="483" width="3" height="1" fill="#fff"/>
<rect x="540" y="477" width="1" height="3" fill="#fff"/>
<rect x="541" y="479" width="1" height="1" fill="#fff"/>
<rect x="541" y="478" width="1" height="2" fill="#fff"/>
<rect x="545" y="477" width="1" height="3" fill="#fff"/>
<rect x="550" y="478" width="1" height="2" fill="#fff"/>
<rect x="551" y="479" width="2" height="1" fill="#fff"/>
<rect x="550" y="483" width="3" height="1" fill="#fff"/>
<rect x="554" y="478" width="1" height="2" fill="#fff"/>
<rect x="559" y="477" width="1" height="3" fill="#fff"/>
<rect x="563" y="474" width="1" height="10" fill="#fff"/>
<rect x="564" y="471" width="1" height="13" fill="#fff"/>
<rect x="565" y="476" width="1" height="8" fill="#fff"/>
<rect x="566" y="482" width="17" height="1" fill="#fff"/>
<rect x="570" y="480" width="1" height="3" fill="#fff"/>
<rect x="114" y="474" width="1" height="9" fill="#fff"/>
<rect x="138" y="479" width="1" height="4" fill="#fff"/>
<rect x="161" y="479" width="1" height="4" fill="#fff"/>
<rect x="185" y="479" width="1" height="4" fill="#fff"/>
<rect x="208" y="474" width="1" height="9" fill="#fff"/>
<rect x="232" y="479" width="1" height="4" fill="#fff"/>
<rect x="255" y="479" width="1" height="4" fill="#fff"/>
<rect x="279" y="479" width="1" height="4" fill="#fff"/>
<rect x="302" y="474" width="1" height="9" fill="#fff"/>
<rect x="325" y="479" width="1" height="4" fill="#fff"/>
<rect x="349" y="479" width="1" height="4" fill="#fff"/>
<rect x="372" y="479" width="1" height="4" fill="#fff"/>
<rect x="396" y="474" width="1" height="9" fill="#fff"/>
<rect x="419" y="479" width="1" height="4" fill="#fff"/>
<rect x="443" y="479" width="1" height="4" fill="#fff"/>
<rect x="466" y="479" width="1" height="4" fill="#fff"/>
<rect x="490" y="474" width="1" height="9" fill="#fff"/>
<rect x="513" y="479" width="1" height="4" fill="#fff"/>
<rect x="536" y="479" width="1" height="4" fill="#fff"/>
<rect x="560" y="479" width="1" height="4" fill="#fff"/>
<rect x="583" y="474" width="1" height="10" fill="#fff"/>
<rect x="607" y="479" width="1" height="5" fill="#fff"/>
<rect x="630" y="479" width="1" height="5" fill="#fff"/>
<rect x="654" y="479" width="1" height="5" fill="#fff"/>
<rect x="583" y="483" width="88" height="1" fill="#ff0000"/>
</g>
<g fill="none" stroke-width="1" stroke-linecap="square" shape-rendering="crispEdges">
<path d="M98.5,7.5 L99.5,6.5 L100.5,6.5 L101.5,6.5 L102.5,6.5 L103.5,6.5 L103.5,7.5 L103.5,8.5 L103.5,9.5 L102.5,10.5 L98.5,13.5 L103.5,13.5 M108.5,6.5 L107.5,6.5 L106.5,7.5 L106.5,9.5 L106.5,10.5 L106.5,12.5 L107.5,13.5 L108.5,13.5 L109.5,13.5 L110.5,13.5 L111.5,12.5 L111.5,10.5 L111.5,9.5 L111.5,7.5 L110.5,6.5 L109.5,6.5 L108.5,6.5 M114.5,8.5 L114.5,9.5 L114.5,8.5 M114.5,13.5 L114.51,13.5 M119.5,6.5 L118.5,6.5 L117.5,7.5 L117.5,9.5 L117.5,10.5 L117.5,12.5 L118.5,13.5 L119.5,13.5 L120.5,13.5 L121.5,13.5 L122.5,12.5 L122.5,10.5 L122.5,9.5 L122.5,7.5 L121.5,6.5 L120.5,6.5 L119.5,6.5 M127.5,6.5 L126.5,6.5 L125.5,7.5 L125.5,9.5 L125.5,10.5 L125.5,12.5 L126.5,13.5 L127.5,13.5 L128.5,13.5 L129.5,13.5 L130.5,12.5 L130.5,10.5 L130.5,9.5 L130.5,7.5 L129.5,6.5 L128.5,6.5 L127.5,6.5" stroke="#fff"/>
<path d="M98.5,495.5 L99.5,494.5 L100.5,494.5 L101.5,494.5 L102.5,494.5 L103.5,494.5 L103.5,495.5 L103.5,496.5 L103.5,497.5 L102.5,498.5 L98.5,501.5 L103.5,501.5 M108.5,494.5 L107.5,494.5 L106.5,495.5 L106.5,497.5 L106.5,498.5 L106.5,500.5 L107.5,501.5 L108.5,501.5 L109.5,501.5 L110.5,501.5 L111.5,500.5 L111.5,498.5 L111.5,497.5 L111.5,495.5 L110.5,494.5 L109.5,494.5 L108.5,494.5 M114.5,496.5 L114.5,497.5 L114.5,496.5 M114.5,501.5 L114.51,501.5 M119.5,494.5 L118.5,494.5 L117.5,495.5 L117.5,497.5 L117.5,498.5 L117.5,500.5 L118.5,501.5 L119.5,501.5 L120.5,501.5 L121.5,501.5 L122.5,500.5 L122.5,498.5 L122.5,497.5 L122.5,495.5 L121.5,494.5 L120.5,494.5 L119.5,494.5 M127.5,494.5 L126.5,494.5 L125.5,495.5 L125.5,497.5 L125.5,498.5 L125.5,500.5 L126.5,501.5 L127.5,501.5 L128.5,501.5 L129.5,501.5 L130.5,500.5 L130.5,498.5 L130.5,497.5 L130.5,495.5 L129.5,494.5 L128.5,494.5 L127.5,494.5" stroke="#fff"/>
<path d="M192.5,7.5 L193.5,7.5 L194.5,6.5 L194.5,13.5 M204.5,7.5 L203.5,6.5 L202.5,6.5 L201.5,6.5 L200.5,6.5 L200.5,7.5 L199.5,9.5 L199.5,11.5 L200.5,12.5 L200.5,13.5 L201.5,13.5 L202.5,13.5 L203.5,13.5 L204.5,12.5 L204.5,11.5 L204.5,10.5 L203.5,9.5 L202.5,9.5 L201.5,9.5 L200.5,9.5 L200.5,10.5 L199.5,11.5 M207.5,8.5 L207.5,9.5 L208.5,9.5 L207.5,8.5 M207.5,13.5 L208.5,13.5 L207.5,13.5 M213.5,6.5 L212.5,6.5 L211.5,7.5 L211.5,9.5 L211.5,10.5 L211.5,12.5 L212.5,13.5 L213.5,13.5 L214.5,13.5 L215.5,13.5 L216.5,12.5 L216.5,10.5 L216.5,9.5 L216.5,7.5 L215.5,6.5 L214.5,6.5 L213.5,6.5 M221.5,6.5 L220.5,6.5 L219.5,7.5 L218.5,9.5 L218.5,10.5 L219.5,12.5 L220.5,13.5 L221.5,13.5 L222.5,13.5 L223.5,13.5 L224.5,12.5 L224.5,10.5 L224.5,9.5 L224.5,7.5 L223.5,6.5 L222.5,6.5 L221.5,6.5" stroke="#fff"/>
<path d="M192.5,495.5 L193.5,495.5 L194.5,494.5 L194.5,501.5 M204.5,495.5 L203.5,494.5 L202.5,494.5 L201.5,494.5 L200.5,494.5 L200.5,495.5 L199.5,497.5 L199.5,499.5 L200.5,500.5 L200.5,501.5 L201.5,501.5 L202.5,501.5 L203.5,501.5 L204.5,500.5 L204.5,499.5 L204.5,498.5 L203.5,497.5 L202.5,497.5 L201.5,497.5 L200.5,497.5 L200.5,498.5 L199.5,499.5 M207.5,496.5 L207.5,497.5 L208.5,497.5 L207.5,496.5 M207.5,501.5 L208.5,501.5 L207.5,501.5 M213.5,494.5 L212.5,494.5 L211.5,495.5 L211.5,497.5 L211.5,498.5 L211.5,500.5 L212.5,501.5 L213.5,501.5 L214.5,501.5 L215.5,501.5 L216.5,500.5 L216.5,498.5 L216.5,497.5 L216.5,495.5 L215.5,494.5 L214.5,494.5 L213.5,494.5 M221.5,494.5 L220.5,494.5 L219.5,495.5 L218.5,497.5 L218.5,498.5 L219.5,500.5 L220.5,501.5 L221.5,501.5 L222.5,501.5 L223.5,501.5 L224.5,500.5 L224.5,498.5 L224.5,497.5 L224.5,495.5 L223.5,494.5 L222.5,494.5 L221.5,494.5" stroke="#fff"/>
<path d="M286.5,7.5 L287.5,7.5 L288.5,6.5 L288.5,13.5 M293.5,7.5 L294.5,6.5 L295.5,6.5 L296.5,6.5 L297.5,6.5 L298.5,7.5 L298.5,8.5 L297.5,9.5 L297.5,10.5 L293.5,13.5 L298.5,13.5 M301.5,8.5 L301.5,9.5 L302.5,9.5 L301.5,8.5 M301.5,13.5 L302.5,13.5 L301.5,13.5 M307.5,6.5 L306.5,6.5 L305.5,7.5 L305.5,9.5 L305.5,10.5 L305.5,12.5 L306.5,13.5 L307.5,13.5 L308.5,13.5 L309.5,13.5 L310.5,12.5 L310.5,10.5 L310.5,9.5 L310.5,7.5 L309.5,6.5 L308.5,6.5 L307.5,6.5 M315.5,6.5 L314.5,6.5 L313.5,7.5 L312.5,9.5 L312.5,10.5 L313.5,12.5 L314.5,13.5 L315.5,13.5 L316.5,13.5 L317.5,13.5 L318.5,12.5 L318.5,10.5 L318.5,9.5 L318.5,7.5 L317.5,6.5 L316.5,6.5 L315.5,6.5" stroke="#fff"/>
<path d="M286.5,495.5 L287.5,495.5 L288.5,494.5 L288.5,501.5 M293.5,495.5 L294.5,494.5 L295.5,494.5 L296.5,494.5 L297.5,494.5 L298.5,495.5 L298.5,496.5 L297.5,497.5 L297.5,498.5 L293.5,501.5 L298.5,501.5 M301.5,496.5 L301.5,497.5 L302.5,497.5 L301.5,496.5 M301.5,501.5 L302.5,501.5 L301.5,501.5 M307.5,494.5 L306.5,494.5 L305.5,495.5 L305.5,497.5 L305.5,498.5 L305.5,500.5 L306.5,501.5 L307.5,501.5 L308.5,501.5 L309.5,501.5 L310.5,500.5 L310.5,498.5 L310.5,497.5 L310.5,495.5 L309.5,494.5 L308.5,494.5 L307.5,494.5 M315.5,494.5 L314.5,494.5 L313.5,495.5 L312.5,497.5 L312.5,498.5 L313.5,500.5 L314.5,501.5 L315.5,501.5 L316.5,501.5 L317.5,501.5 L318.5,500.5 L318.5,498.5 L318.5,497.5 L318.5,495.5 L317.5,494.5 L316.5,494.5 L315.5,494.5" stroke="#fff"/>
<path d="M381.5,6.5 L380.5,6.5 L379.5,7.5 L379.5,9.5 L379.5,10.5 L379.5,12.5 L380.5,13.5 L381.5,13.5 L382.5,13.5 L383.5,13.5 L384.5,12.5 L384.5,10.5 L384.5,9.5 L384.5,7.5 L383.5,6.5 L382.5,6.5 L381.5,6.5 M389.5,6.5 L387.5,6.5 L387.5,7.5 L387.5,8.5 L388.5,9.5 L390.5,9.5 L391.5,9.5 L392.5,10.5 L392.5,11.5 L392.5,12.5 L392.5,13.5 L391.5,13.5 L390.5,13.5 L389.5,13.5 L387.5,13.5 L387.5,12.5 L387.5,11.5 L387.5,10.5 L388.5,9.5 L389.5,9.5 L390.5,9.5 L391.5,8.5 L392.5,7.5 L391.5,6.5 L390.5,6.5 L389.5,6.5 M395.5,8.5 L395.5,9.5 L395.5,8.5 M395.5,13.5 L395.51,13.5 M400.5,6.5 L399.5,6.5 L398.5,7.5 L398.5,9.5 L398.5,10.5 L398.5,12.5 L399.5,13.5 L400.5,13.5 L401.5,13.5 L402.5,13.5 L403.5,12.5 L403.5,10.5 L403.5,9.5 L403.5,7.5 L402.5,6.5 L401.5,6.5 L400.5,6.5 M408.5,6.5 L407.5,6.5 L406.5,7.5 L406.5,9.5 L406.5,10.5 L406.5,12.5 L407.5,13.5 L408.5,13.5 L409.5,13.5 L410.5,13.5 L411.5,12.5 L411.5,10.5 L411.5,9.5 L411.5,7.5 L410.5,6.5 L409.5,6.5 L408.5,6.5" stroke="#fff"/>
<path d="M381.5,494.5 L380.5,494.5 L379.5,495.5 L379.5,497.5 L379.5,498.5 L379.5,500.5 L380.5,501.5 L381.5,501.5 L382.5,501.5 L383.5,501.5 L384.5,500.5 L384.5,498.5 L384.5,497.5 L384.5,495.5 L383.5,494.5 L382.5,494.5 L381.5,494.5 M389.5,494.5 L387.5,494.5 L387.5,495.5 L387.5,496.5 L388.5,497.5 L390.5,497.5 L391.5,497.5 L392.5,498.5 L392.5,499.5 L392.5,500.5 L392.5,501.5 L391.5,501.5 L390.5,501.5 L389.5,501.5 L387.5,501.5 L387.5,500.5 L387.5,499.5 L387.5,498.5 L388.5,497.5 L389.5,497.5 L390.5,497.5 L391.5,496.5 L392.5,495.5 L391.5,494.5 L390.5,494.5 L389.5,494.5 M395.5,496.5 L395.5,497.5 L395.5,496.5 M395.5,501.5 L395.51,501.5 M400.5,494.5 L399.5,494.5 L398.5,495.5 L398.5,497.5 L398.5,498.5 L398.5,500.5 L399.5,501.5 L400.5,501.5 L401.5,501.5 L402.5,501.5 L403.5,500.5 L403.5,498.5 L403.5,497.5 L403.5,495.5 L402.5,494.5 L401.5,494.5 L400.5,494.5 M408.5,494.5 L407.5,494.5 L406.5,495.5 L406.5,497.5 L406.5,498.5 L406.5,500.5 L407.5,501.5 L408.5,501.5 L409.5,501.5 L410.5,501.5 L411.5,500.5 L411.5,498.5 L411.5,497.5 L411.5,495.5 L410.5,494.5 L409.5,494.5 L408.5,494.5" stroke="#fff"/>
<path d="M475.5,6.5 L474.5,6.5 L473.5,7.5 L473.5,9.5 L473.5,10.5 L473.5,12.5 L474.5,13.5 L475.5,13.5 L476.5,13.5 L477.5,13.5 L478.5,12.5 L478.5,10.5 L478.5,9.5 L478.5,7.5 L477.5,6.5 L476.5,6.5 L475.5,6.5 M484.5,6.5 L481.5,11.5 L486.5,11.5 M484.5,6.5 L484.5,13.5 M489.5,8.5 L489.5,9.5 L489.5,8.5 M489.5,13.5 L489.51,13.5 M494.5,6.5 L493.5,6.5 L492.5,7.5 L492.5,9.5 L492.5,10.5 L492.5,12.5 L493.5,13.5 L494.5,13.5 L495.5,13.5 L496.5,13.5 L497.5,12.5 L497.5,10.5 L497.5,9.5 L497.5,7.5 L496.5,6.5 L495.5,6.5 L494.5,6.5 M502.5,6.5 L501.5,6.5 L500.5,7.5 L500.5,9.5 L500.5,10.5 L500.5,12.5 L501.5,13.5 L502.5,13.5 L503.5,13.5 L504.5,13.5 L505.5,12.5 L505.5,10.5 L505.5,9.5 L505.5,7.5 L504.5,6.5 L503.5,6.5 L502.5,6.5" stroke="#fff"/>
<path d="M475.5,494.5 L474.5,494.5 L473.5,495.5 L473.5,497.5 L473.5,498.5 L473.5,500.5 L474.5,501.5 L475.5,501.5 L476.5,501.5 L477.5,501.5 L478.5,500.5 L478.5,498.5 L478.5,497.5 L478.5,495.5 L477.5,494.5 L476.5,494.5 L475.5,494.5 M484.5,494.5 L481.5,499.5 L486.5,499.5 M484.5,494.5 L484.5,501.5 M489.5,496.5 L489.5,497.5 L489.5,496.5 M489.5,501.5 L489.51,501.5 M494.5,494.5 L493.5,494.5 L492.5,495.5 L492.5,497.5 L492.5,498.5 L492.5,500.5 L493.5,501.5 L494.5,501.5 L495.5,501.5 L496.5,501.5 L497.5,500.5 L497.5,498.5 L497.5,497.5 L497.5,495.5 L496.5,494.5 L495.5,494.5 L494.5,494.5 M502.5,494.5 L501.5,494.5 L500.5,495.5 L500.5,497.5 L500.5,498.5 L500.5,500.5 L501.5,501.5 L502.5,501.5 L503.5,501.5 L504.5,501.5 L505.5,500.5 L505.5,498.5 L505.5,497.5 L505.5,495.5 L504.5,494.5 L503.5,494.5 L502.5,494.5" stroke="#fff"/>
<path d="M569.5,6.5 L568.5,6.5 L567.5,7.5 L567.5,9.5 L567.5,10.5 L567.5,12.5 L568.5,13.5 L569.5,13.5 L570.5,13.5 L571.5,13.5 L572.5,12.5 L572.5,10.5 L572.5,9.5 L572.5,7.5 L571.5,6.5 L570.5,6.5 L569.5,6.5 M577.5,6.5 L576.5,6.5 L575.5,7.5 L575.5,9.5 L575.5,10.5 L575.5,12.5 L576.5,13.5 L577.5,13.5 L578.5,13.5 L579.5,13.5 L580.5,12.5 L580.5,10.5 L580.5,9.5 L580.5,7.5 L579.5,6.5 L578.5,6.5 L577.5,6.5 M583.5,8.5 L583.5,9.5 L583.5,8.5 M583.5,13.5 L583.51,13.5 M588.5,6.5 L587.5,6.5 L586.5,7.5 L586.5,9.5 L586.5,10.5 L586.5,12.5 L587.5,13.5 L588.5,13.5 L589.5,13.5 L590.5,13.5 L591.5,12.5 L591.5,10.5 L591.5,9.5 L591.5,7.5 L590.5,6.5 L589.5,6.5 L588.5,6.5 M596.5,6.5 L595.5,6.5 L594.5,7.5 L594.5,9.5 L594.5,10.5 L594.5,12.5 L595.5,13.5 L596.5,13.5 L597.5,13.5 L598.5,13.5 L599.5,12.5 L599.5,10.5 L599.5,9.5 L599.5,7.5 L598.5,6.5 L597.5,6.5 L596.5,6.5" stroke="#fff"/>
<path d="M569.5,494.5 L568.5,494.5 L567.5,495.5 L567.5,497.5 L567.5,498.5 L567.5,500.5 L568.5,501.5 L569.5,501.5 L570.5,501.5 L571.5,501.5 L572.5,500.5 L572.5,498.5 L572.5,497.5 L572.5,495.5 L571.5,494.5 L570.5,494.5 L569.5,494.5 M577.5,494.5 L576.5,494.5 L575.5,495.5 L575.5,497.5 L575.5,498.5 L575.5,500.5 L576.5,501.5 L577.5,501.5 L578.5,501.5 L579.5,501.5 L580.5,500.5 L580.5,498.5 L580.5,497.5 L580.5,495.5 L579.5,494.5 L578.5,494.5 L577.5,494.5 M583.5,496.5 L583.5,497.5 L583.5,496.5 M583.5,501.5 L583.51,501.5 M588.5,494.5 L587.5,494.5 L586.5,495.5 L586.5,497.5 L586.5,498.5 L586.5,500.5 L587.5,501.5 L588.5,501.5 L589.5,501.5 L590.5,501.5 L591.5,500.5 L591.5,498.5 L591.5,497.5 L591.5,495.5 L590.5,494.5 L589.5,494.5 L588.5,494.5 M596.5,494.5 L595.5,494.5 L594.5,495.5 L594.5,497.5 L594.5,498.5 L594.5,500.5 L595.5,501.5 L596.5,501.5 L597.5,501.5 L598.5,501.5 L599.5,500.5 L599.5,498.5 L599.5,497.5 L599.5,495.5 L598.5,494.5 L597.5,494.5 L596.5,494.5" stroke="#fff"/>
<path d="M21.5,53.5 L21.5,61.5 M18.5,53.5 L23.5,53.5 M25.5,53.5 L25.5,61.5 M25.5,53.5 L28.5,61.5 M31.5,53.5 L28.5,61.5 M31.5,53.5 L31.5,61.5 M45.5,54.5 L44.5,53.5 L43.5,53.5 L42.5,53.5 L41.5,53.5 L40.5,54.5 L40.5,55.5 L40.5,56.5 L41.5,56.5 L44.5,57.5 L44.5,58.5 L45.5,58.5 L45.5,59.5 L45.5,60.5 L44.5,61.5 L43.5,61.5 L42.5,61.5 L41.5,61.5 L40.5,60.5 M48.5,53.5 L48.5,59.5 L48.5,60.5 L49.5,61.5 L50.5,61.5 L51.5,61.5 L52.5,61.5 L53.5,60.5 L53.5,59.5 L53.5,53.5 M56.5,53.5 L56.5,61.5 M56.5,53.5 L59.5,53.5 L61.5,53.5 L61.5,54.5 L61.5,55.5 L61.5,56.5 L59.5,57.5 M56.5,57.5 L59.5,57.5 L61.5,57.5 L61.5,58.5 L61.5,59.5 L61.5,60.5 L61.5,61.5 L59.5,61.5 L56.5,61.5 M64.5,53.5 L64.5,61.5 M64.5,53.5 L67.5,61.5 M70.5,53.5 L67.5,61.5 M70.5,53.5 L70.5,61.5 M75.5,53.5 L74.5,53.5 L73.5,54.5 L73.5,55.5 L73.5,56.5 L73.5,58.5 L73.5,59.5 L73.5,60.5 L74.5,61.5 L75.5,61.5 L76.5,61.5 L77.5,61.5 L78.5,60.5 L78.5,59.5 L79.5,58.5 L79.5,56.5 L78.5,55.5 L78.5,54.5 L77.5,53.5 L76.5,53.5 L75.5,53.5 M81.5,53.5 L81.5,61.5 M81.5,53.5 L84.5,53.5 L85.5,53.5 L86.5,54.5 L86.5,55.5 L86.5,56.5 L86.5,58.5 L86.5,59.5 L86.5,60.5 L85.5,61.5 L84.5,61.5 L81.5,61.5 M89.5,53.5 L89.5,61.5 M89.5,53.5 L94.5,53.5 M89.5,57.5 L92.5,57.5 M89.5,61.5 L94.5,61.5" stroke="#fff"/>
<path d="M8.5,100.5 L8.5,108.5 M8.5,108.5 L13.5,108.5 M16.5,100.5 L13.5,108.5 M16.5,100.5 L19.5,108.5 M14.5,105.5 L18.5,105.5 M26.5,101.5 L25.5,100.5 L24.5,100.5 L23.5,100.5 L22.5,100.5 L21.5,101.5 L21.5,102.5 L21.5,103.5 L22.5,103.5 L25.5,104.5 L25.5,105.5 L26.5,105.5 L26.5,106.5 L26.5,107.5 L25.5,108.5 L24.5,108.5 L23.5,108.5 L22.5,108.5 L21.5,107.5 M34.5,102.5 L34.5,101.5 L33.5,100.5 L32.5,100.5 L31.5,100.5 L30.5,100.5 L29.5,101.5 L29.5,102.5 L29.5,103.5 L29.5,105.5 L29.5,106.5 L29.5,107.5 L30.5,108.5 L31.5,108.5 L32.5,108.5 L33.5,108.5 L34.5,107.5 L34.5,106.5 M39.5,100.5 L38.5,100.5 L37.5,101.5 L37.5,102.5 L37.5,103.5 L37.5,105.5 L37.5,106.5 L37.5,107.5 L38.5,108.5 L39.5,108.5 L40.5,108.5 L41.5,108.5 L42.5,107.5 L42.5,106.5 L43.5,105.5 L43.5,103.5 L42.5,102.5 L42.5,101.5 L41.5,100.5 L40.5,100.5 L39.5,100.5 M51.5,99.5 L44.5,111.5 M54.5,100.5 L54.5,108.5 M54.5,100.5 L59.5,100.5 M54.5,104.5 L57.5,104.5 M54.5,108.5 L59.5,108.5 M61.5,100.5 L61.5,108.5 M65.5,100.5 L65.5,108.5 M63.5,100.5 L68.5,100.5 M79.5,99.5 L78.5,99.5 L77.5,100.5 L76.5,102.5 L76.5,104.5 L76.5,105.5 L76.5,107.5 L77.5,109.5 L78.5,110.5 L79.5,111.5 M83.5,100.5 L82.5,101.5 L81.5,102.5 L81.5,103.5 L81.5,105.5 L81.5,106.5 L82.5,107.5 L83.5,108.5 L85.5,108.5 L86.5,108.5 L86.5,107.5 L87.5,106.5 L87.5,105.5 L87.5,103.5 L87.5,102.5 L86.5,101.5 L86.5,100.5 L85.5,100.5 L83.5,100.5 M90.5,100.5 L90.5,108.5 M90.5,100.5 L93.5,100.5 L94.5,100.5 L95.5,101.5 L95.5,102.5 L95.5,103.5 L94.5,104.5 L93.5,104.5 L90.5,104.5 M97.5,99.5 L98.5,99.5 L99.5,100.5 L100.5,102.5 L100.5,104.5 L100.5,105.5 L100.5,107.5 L99.5,109.5 L98.5,110.5 L97.5,111.5" stroke="#fff"/>
<path d="M102.5,69.5 L103.5,68.5 L104.5,67.5 L104.5,75.5" stroke="#fff"/>
<path d="M101.5,60.5 L102.5,59.5 L102.5,58.5 L103.5,58.5 L104.5,58.5 L105.5,58.5 L105.5,59.5 L106.5,60.5 L105.5,61.5 L105.5,62.5 L101.5,66.5 L106.5,66.5" stroke="#fff"/>
<path d="M102.5,49.5 L106.5,49.5 L104.5,52.5 L105.5,52.5 L106.5,53.5 L106.5,54.5 L106.5,55.5 L106.5,56.5 L105.5,57.5 L104.5,57.5 L103.5,57.5 L102.5,57.5 L101.5,56.5 L101.5,55.5" stroke="#fff"/>
<path d="M104.5,39.5 L101.5,44.5 L106.5,44.5 M104.5,39.5 L104.5,47.5" stroke="#fff"/>
<path d="M105.5,30.5 L102.5,30.5 L101.5,33.5 L102.5,33.5 L103.5,33.5 L104.5,33.5 L105.5,33.5 L106.5,34.5 L106.5,35.5 L106.5,36.5 L106.5,37.5 L105.5,38.5 L104.5,38.5 L103.5,38.5 L102.5,38.5 L101.5,37.5 L101.5,36.5" stroke="#fff"/>
<path d="M51.5,137.5 L50.5,138.5 L49.5,139.5 L49.5,140.5 L49.5,142.5 L49.5,143.5 L50.5,144.5 L51.5,145.5 L53.5,145.5 L54.5,145.5 L54.5,144.5 L55.5,143.5 L55.5,142.5 L55.5,140.5 L55.5,139.5 L54.5,138.5 L54.5,137.5 L53.5,137.5 L51.5,137.5 M63.5,138.5 L62.5,137.5 L61.5,137.5 L59.5,137.5 L58.5,137.5 L58.5,138.5 L58.5,139.5 L58.5,140.5 L59.5,140.5 L61.5,141.5 L62.5,142.5 L63.5,142.5 L63.5,143.5 L63.5,144.5 L62.5,145.5 L61.5,145.5 L59.5,145.5 L58.5,145.5 L58.5,144.5 M64.5,145.5 L70.5,145.5 M72.5,137.5 L76.5,137.5 L74.5,140.5 L75.5,140.5 L76.5,140.5 L76.5,141.5 L77.5,142.5 L77.5,143.5 L76.5,144.5 L76.5,145.5 L75.5,145.5 L73.5,145.5 L72.5,145.5 L72.5,144.5 L71.5,143.5 M80.5,137.5 L84.5,137.5 L82.5,140.5 L83.5,140.5 L84.5,140.5 L84.5,141.5 L85.5,142.5 L85.5,143.5 L84.5,144.5 L83.5,145.5 L82.5,145.5 L81.5,145.5 L80.5,145.5 L80.5,144.5 L79.5,143.5 M91.5,137.5 L87.5,142.5 L93.5,142.5 M91.5,137.5 L91.5,145.5 M95.5,139.5 L95.5,138.5 L96.5,137.5 L97.5,137.5 L98.5,137.5 L99.5,137.5 L99.5,138.5 L100.5,139.5 L99.5,140.5 L98.5,141.5 L95.5,145.5 L100.5,145.5" stroke="#fff"/>
<path d="M51.5,154.5 L50.5,155.5 L49.5,156.5 L49.5,157.5 L49.5,159.5 L49.5,160.5 L50.5,161.5 L51.5,162.5 L53.5,162.5 L54.5,162.5 L54.5,161.5 L55.5,160.5 L55.5,159.5 L55.5,157.5 L55.5,156.5 L54.5,155.5 L54.5,154.5 L53.5,154.5 L51.5,154.5 M63.5,155.5 L62.5,154.5 L61.5,154.5 L59.5,154.5 L58.5,154.5 L58.5,155.5 L58.5,156.5 L58.5,157.5 L59.5,157.5 L61.5,158.5 L62.5,159.5 L63.5,159.5 L63.5,160.5 L63.5,161.5 L62.5,162.5 L61.5,162.5 L59.5,162.5 L58.5,162.5 L58.5,161.5 M64.5,162.5 L70.5,162.5 M72.5,154.5 L76.5,154.5 L74.5,157.5 L75.5,157.5 L76.5,157.5 L76.5,158.5 L77.5,159.5 L77.5,160.5 L76.5,161.5 L76.5,162.5 L75.5,162.5 L73.5,162.5 L72.5,162.5 L72.5,161.5 L71.5,160.5 M80.5,154.5 L84.5,154.5 L82.5,157.5 L83.5,157.5 L84.5,157.5 L84.5,158.5 L85.5,159.5 L85.5,160.5 L84.5,161.5 L83.5,162.5 L82.5,162.5 L81.5,162.5 L80.5,162.5 L80.5,161.5 L79.5,160.5 M92.5,155.5 L92.5,154.5 L90.5,154.5 L88.5,154.5 L88.5,156.5 L87.5,157.5 L87.5,159.5 L88.5,161.5 L88.5,162.5 L90.5,162.5 L91.5,162.5 L92.5,161.5 L92.5,160.5 L92.5,159.5 L92.5,158.5 L91.5,157.5 L90.5,157.5 L88.5,157.5 L88.5,158.5 L87.5,159.5 M96.5,156.5 L97.5,155.5 L98.5,154.5 L98.5,162.5" stroke="#fff"/>
<path d="M51.5,172.5 L50.5,173.5 L49.5,174.5 L49.5,175.5 L49.5,177.5 L49.5,178.5 L50.5,179.5 L51.5,180.5 L53.5,180.5 L54.5,180.5 L54.5,179.5 L55.5,178.5 L55.5,177.5 L55.5,175.5 L55.5,174.5 L54.5,173.5 L54.5,172.5 L53.5,172.5 L51.5,172.5 M63.5,173.5 L62.5,172.5 L61.5,172.5 L59.5,172.5 L58.5,172.5 L58.5,173.5 L58.5,174.5 L58.5,175.5 L59.5,175.5 L61.5,176.5 L62.5,177.5 L63.5,177.5 L63.5,178.5 L63.5,179.5 L62.5,180.5 L61.5,180.5 L59.5,180.5 L58.5,180.5 L58.5,179.5 M64.5,180.5 L70.5,180.5 M72.5,172.5 L76.5,172.5 L74.5,175.5 L75.5,175.5 L76.5,175.5 L76.5,176.5 L77.5,177.5 L77.5,178.5 L76.5,179.5 L76.5,180.5 L75.5,180.5 L73.5,180.5 L72.5,180.5 L72.5,179.5 L71.5,178.5 M80.5,172.5 L84.5,172.5 L82.5,175.5 L83.5,175.5 L84.5,175.5 L84.5,176.5 L85.5,177.5 L85.5,178.5 L84.5,179.5 L83.5,180.5 L82.5,180.5 L81.5,180.5 L80.5,180.5 L80.5,179.5 L79.5,178.5 M89.5,172.5 L88.5,172.5 L87.5,173.5 L87.5,174.5 L88.5,175.5 L90.5,175.5 L91.5,176.5 L92.5,177.5 L92.5,178.5 L92.5,179.5 L92.5,180.5 L90.5,180.5 L89.5,180.5 L88.5,180.5 L87.5,179.5 L87.5,178.5 L87.5,177.5 L88.5,176.5 L89.5,175.5 L91.5,175.5 L92.5,175.5 L92.5,174.5 L92.5,173.5 L92.5,172.5 L90.5,172.5 L89.5,172.5 M100.5,172.5 L96.5,180.5 M95.5,172.5 L100.5,172.5" stroke="#fff"/>
<path d="M51.5,189.5 L50.5,190.5 L49.5,191.5 L49.5,192.5 L49.5,194.5 L49.5,195.5 L50.5,196.5 L51.5,197.5 L53.5,197.5 L54.5,197.5 L54.5,196.5 L55.5,195.5 L55.5,194.5 L55.5,192.5 L55.5,191.5 L54.5,190.5 L54.5,189.5 L53.5,189.5 L51.5,189.5 M63.5,190.5 L62.5,189.5 L61.5,189.5 L59.5,189.5 L58.5,189.5 L58.5,190.5 L58.5,191.5 L58.5,192.5 L59.5,192.5 L61.5,193.5 L62.5,194.5 L63.5,194.5 L63.5,195.5 L63.5,196.5 L62.5,197.5 L61.5,197.5 L59.5,197.5 L58.5,197.5 L58.5,196.5 M64.5,197.5 L70.5,197.5 M72.5,189.5 L76.5,189.5 L74.5,192.5 L75.5,192.5 L76.5,192.5 L76.5,193.5 L77.5,194.5 L77.5,195.5 L76.5,196.5 L76.5,197.5 L75.5,197.5 L73.5,197.5 L72.5,197.5 L72.5,196.5 L71.5,195.5 M80.5,189.5 L84.5,189.5 L82.5,192.5 L83.5,192.5 L84.5,192.5 L84.5,193.5 L85.5,194.5 L85.5,195.5 L84.5,196.5 L83.5,197.5 L82.5,197.5 L81.5,197.5 L80.5,197.5 L80.5,196.5 L79.5,195.5 M89.5,189.5 L88.5,189.5 L87.5,190.5 L87.5,191.5 L88.5,192.5 L90.5,192.5 L91.5,193.5 L92.5,194.5 L92.5,195.5 L92.5,196.5 L92.5,197.5 L90.5,197.5 L89.5,197.5 L88.5,197.5 L87.5,196.5 L87.5,195.5 L87.5,194.5 L88.5,193.5 L89.5,192.5 L91.5,192.5 L92.5,192.5 L92.5,191.5 L92.5,190.5 L92.5,189.5 L90.5,189.5 L89.5,189.5 M100.5,192.5 L99.5,193.5 L98.5,194.5 L97.5,194.5 L96.5,194.5 L95.5,193.5 L95.5,192.5 L95.5,191.5 L95.5,190.5 L96.5,189.5 L97.5,189.5 L98.5,189.5 L99.5,190.5 L100.5,192.5 L100.5,194.5 L99.5,195.5 L98.5,197.5 L97.5,197.5 L95.5,197.5 L95.5,196.5" stroke="#fff"/>
<path d="M51.5,207.5 L50.5,208.5 L49.5,209.5 L49.5,210.5 L49.5,212.5 L49.5,213.5 L50.5,214.5 L51.5,215.5 L53.5,215.5 L54.5,215.5 L54.5,214.5 L55.5,213.5 L55.5,212.5 L55.5,210.5 L55.5,209.5 L54.5,208.5 L54.5,207.5 L53.5,207.5 L51.5,207.5 M63.5,208.5 L62.5,207.5 L61.5,207.5 L59.5,207.5 L58.5,207.5 L58.5,208.5 L58.5,209.5 L58.5,210.5 L59.5,210.5 L61.5,211.5 L62.5,212.5 L63.5,212.5 L63.5,213.5 L63.5,214.5 L62.5,215.5 L61.5,215.5 L59.5,215.5 L58.5,215.5 L58.5,214.5 M64.5,215.5 L70.5,215.5 M72.5,207.5 L76.5,207.5 L74.5,210.5 L75.5,210.5 L76.5,210.5 L76.5,211.5 L77.5,212.5 L77.5,213.5 L76.5,214.5 L76.5,215.5 L75.5,215.5 L73.5,215.5 L72.5,215.5 L72.5,214.5 L71.5,213.5 M80.5,207.5 L84.5,207.5 L82.5,210.5 L83.5,210.5 L84.5,210.5 L84.5,211.5 L85.5,212.5 L85.5,213.5 L84.5,214.5 L83.5,215.5 L82.5,215.5 L81.5,215.5 L80.5,215.5 L80.5,214.5 L79.5,213.5 M92.5,210.5 L92.5,211.5 L91.5,212.5 L90.5,212.5 L89.5,212.5 L88.5,212.5 L87.5,211.5 L87.5,210.5 L87.5,209.5 L87.5,208.5 L88.5,207.5 L89.5,207.5 L90.5,207.5 L91.5,207.5 L92.5,208.5 L92.5,210.5 L92.5,212.5 L92.5,213.5 L91.5,215.5 L90.5,215.5 L89.5,215.5 L88.5,215.5 L87.5,214.5 M97.5,207.5 L96.5,207.5 L95.5,209.5 L95.5,210.5 L95.5,212.5 L95.5,213.5 L96.5,215.5 L97.5,215.5 L98.5,215.5 L99.5,215.5 L100.5,213.5 L100.5,212.5 L100.5,210.5 L100.5,209.5 L99.5,207.5 L98.5,207.5 L97.5,207.5" stroke="#fff"/>
<path d="M51.5,225.5 L50.5,226.5 L49.5,227.5 L49.5,228.5 L49.5,230.5 L49.5,231.5 L50.5,232.5 L51.5,233.5 L53.5,233.5 L54.5,233.5 L54.5,232.5 L55.5,231.5 L55.5,230.5 L55.5,228.5 L55.5,227.5 L54.5,226.5 L54.5,225.5 L53.5,225.5 L51.5,225.5 M63.5,226.5 L62.5,225.5 L61.5,225.5 L59.5,225.5 L58.5,225.5 L58.5,226.5 L58.5,227.5 L58.5,228.5 L59.5,228.5 L61.5,229.5 L62.5,230.5 L63.5,230.5 L63.5,231.5 L63.5,232.5 L62.5,233.5 L61.5,233.5 L59.5,233.5 L58.5,233.5 L58.5,232.5 M64.5,233.5 L70.5,233.5 M72.5,225.5 L76.5,225.5 L74.5,228.5 L75.5,228.5 L76.5,228.5 L76.5,229.5 L77.5,230.5 L77.5,231.5 L76.5,232.5 L76.5,233.5 L75.5,233.5 L73.5,233.5 L72.5,233.5 L72.5,232.5 L71.5,231.5 M83.5,225.5 L79.5,230.5 L85.5,230.5 M83.5,225.5 L83.5,233.5 M89.5,225.5 L88.5,225.5 L87.5,227.5 L87.5,228.5 L87.5,230.5 L87.5,231.5 L88.5,233.5 L89.5,233.5 L90.5,233.5 L91.5,233.5 L92.5,231.5 L92.5,230.5 L92.5,228.5 L92.5,227.5 L91.5,225.5 L90.5,225.5 L89.5,225.5 M99.5,225.5 L95.5,225.5 L95.5,228.5 L97.5,228.5 L98.5,228.5 L99.5,228.5 L100.5,229.5 L100.5,230.5 L100.5,231.5 L100.5,232.5 L99.5,233.5 L98.5,233.5 L97.5,233.5 L95.5,233.5 L95.5,232.5 L95.5,231.5" stroke="#fff"/>
<path d="M51.5,242.5 L50.5,243.5 L49.5,244.5 L49.5,245.5 L49.5,247.5 L49.5,248.5 L50.5,249.5 L51.5,250.5 L53.5,250.5 L54.5,250.5 L54.5,249.5 L55.5,248.5 L55.5,247.5 L55.5,245.5 L55.5,244.5 L54.5,243.5 L54.5,242.5 L53.5,242.5 L51.5,242.5 M63.5,243.5 L62.5,242.5 L61.5,242.5 L59.5,242.5 L58.5,242.5 L58.5,243.5 L58.5,244.5 L58.5,245.5 L59.5,245.5 L61.5,246.5 L62.5,247.5 L63.5,247.5 L63.5,248.5 L63.5,249.5 L62.5,250.5 L61.5,250.5 L59.5,250.5 L58.5,250.5 L58.5,249.5 M64.5,250.5 L70.5,250.5 M72.5,242.5 L76.5,242.5 L74.5,245.5 L75.5,245.5 L76.5,245.5 L76.5,246.5 L77.5,247.5 L77.5,248.5 L76.5,249.5 L76.5,250.5 L75.5,250.5 L73.5,250.5 L72.5,250.5 L72.5,249.5 L71.5,248.5 M83.5,242.5 L79.5,247.5 L85.5,247.5 M83.5,242.5 L83.5,250.5 M89.5,242.5 L88.5,242.5 L87.5,244.5 L87.5,245.5 L87.5,247.5 L87.5,248.5 L88.5,250.5 L89.5,250.5 L90.5,250.5 L91.5,250.5 L92.5,248.5 L92.5,247.5 L92.5,245.5 L92.5,244.5 L91.5,242.5 L90.5,242.5 L89.5,242.5 M100.5,243.5 L99.5,242.5 L98.5,242.5 L97.5,242.5 L96.5,242.5 L95.5,244.5 L95.5,245.5 L95.5,247.5 L95.5,249.5 L96.5,250.5 L97.5,250.5 L98.5,250.5 L99.5,250.5 L100.5,249.5 L100.5,248.5 L100.5,247.5 L100.5,246.5 L99.5,245.5 L98.5,245.5 L97.5,245.5 L96.5,245.5 L95.5,246.5 L95.5,247.5" stroke="#fff"/>
<path d="M51.5,260.5 L50.5,261.5 L49.5,262.5 L49.5,263.5 L49.5,265.5 L49.5,266.5 L50.5,267.5 L51.5,268.5 L53.5,268.5 L54.5,268.5 L54.5,267.5 L55.5,266.5 L55.5,265.5 L55.5,263.5 L55.5,262.5 L54.5,261.5 L54.5,260.5 L53.5,260.5 L51.5,260.5 M63.5,261.5 L62.5,260.5 L61.5,260.5 L59.5,260.5 L58.5,260.5 L58.5,261.5 L58.5,262.5 L58.5,263.5 L59.5,263.5 L61.5,264.5 L62.5,265.5 L63.5,265.5 L63.5,266.5 L63.5,267.5 L62.5,268.5 L61.5,268.5 L59.5,268.5 L58.5,268.5 L58.5,267.5 M64.5,268.5 L70.5,268.5 M72.5,260.5 L76.5,260.5 L74.5,263.5 L75.5,263.5 L76.5,263.5 L76.5,264.5 L77.5,265.5 L77.5,266.5 L76.5,267.5 L76.5,268.5 L75.5,268.5 L73.5,268.5 L72.5,268.5 L72.5,267.5 L71.5,266.5 M84.5,260.5 L80.5,260.5 L80.5,263.5 L81.5,263.5 L82.5,263.5 L83.5,263.5 L84.5,264.5 L85.5,265.5 L85.5,266.5 L84.5,267.5 L83.5,268.5 L82.5,268.5 L81.5,268.5 L80.5,268.5 L80.5,267.5 L79.5,266.5 M88.5,260.5 L92.5,260.5 L90.5,263.5 L91.5,263.5 L92.5,263.5 L92.5,264.5 L92.5,265.5 L92.5,266.5 L92.5,267.5 L91.5,268.5 L90.5,268.5 L89.5,268.5 L88.5,268.5 L87.5,267.5 L87.5,266.5 M95.5,262.5 L95.5,261.5 L96.5,260.5 L97.5,260.5 L98.5,260.5 L99.5,260.5 L99.5,261.5 L100.5,262.5 L99.5,263.5 L98.5,264.5 L95.5,268.5 L100.5,268.5" stroke="#fff"/>
<path d="M51.5,277.5 L50.5,278.5 L49.5,279.5 L49.5,280.5 L49.5,282.5 L49.5,283.5 L50.5,284.5 L51.5,285.5 L53.5,285.5 L54.5,285.5 L54.5,284.5 L55.5,283.5 L55.5,282.5 L55.5,280.5 L55.5,279.5 L54.5,278.5 L54.5,277.5 L53.5,277.5 L51.5,277.5 M63.5,278.5 L62.5,277.5 L61.5,277.5 L59.5,277.5 L58.5,277.5 L58.5,278.5 L58.5,279.5 L58.5,280.5 L59.5,280.5 L61.5,281.5 L62.5,282.5 L63.5,282.5 L63.5,283.5 L63.5,284.5 L62.5,285.5 L61.5,285.5 L59.5,285.5 L58.5,285.5 L58.5,284.5 M64.5,285.5 L70.5,285.5 M72.5,277.5 L76.5,277.5 L74.5,280.5 L75.5,280.5 L76.5,280.5 L76.5,281.5 L77.5,282.5 L77.5,283.5 L76.5,284.5 L76.5,285.5 L75.5,285.5 L73.5,285.5 L72.5,285.5 L72.5,284.5 L71.5,283.5 M84.5,277.5 L80.5,277.5 L80.5,280.5 L81.5,280.5 L82.5,280.5 L83.5,280.5 L84.5,281.5 L85.5,282.5 L85.5,283.5 L84.5,284.5 L83.5,285.5 L82.5,285.5 L81.5,285.5 L80.5,285.5 L80.5,284.5 L79.5,283.5 M92.5,278.5 L92.5,277.5 L90.5,277.5 L88.5,277.5 L88.5,279.5 L87.5,280.5 L87.5,282.5 L88.5,284.5 L88.5,285.5 L90.5,285.5 L91.5,285.5 L92.5,284.5 L92.5,283.5 L92.5,282.5 L92.5,281.5 L91.5,280.5 L90.5,280.5 L88.5,280.5 L88.5,281.5 L87.5,282.5 M97.5,277.5 L95.5,277.5 L95.5,278.5 L95.5,279.5 L95.5,280.5 L96.5,280.5 L98.5,280.5 L99.5,281.5 L100.5,282.5 L100.5,283.5 L100.5,284.5 L99.5,285.5 L98.5,285.5 L97.5,285.5 L95.5,285.5 L95.5,284.5 L95.5,283.5 L95.5,282.5 L96.5,281.5 L97.5,280.5 L98.5,280.5 L99.5,280.5 L100.5,279.5 L100.5,278.5 L99.5,277.5 L98.5,277.5 L97.5,277.5" stroke="#fff"/>
<path d="M51.5,295.5 L50.5,296.5 L49.5,297.5 L49.5,298.5 L49.5,300.5 L49.5,301.5 L50.5,302.5 L51.5,303.5 L53.5,303.5 L54.5,303.5 L54.5,302.5 L55.5,301.5 L55.5,300.5 L55.5,298.5 L55.5,297.5 L54.5,296.5 L54.5,295.5 L53.5,295.5 L51.5,295.5 M63.5,296.5 L62.5,295.5 L61.5,295.5 L59.5,295.5 L58.5,295.5 L58.5,296.5 L58.5,297.5 L58.5,298.5 L59.5,298.5 L61.5,299.5 L62.5,300.5 L63.5,300.5 L63.5,301.5 L63.5,302.5 L62.5,303.5 L61.5,303.5 L59.5,303.5 L58.5,303.5 L58.5,302.5 M64.5,303.5 L70.5,303.5 M72.5,295.5 L76.5,295.5 L74.5,298.5 L75.5,298.5 L76.5,298.5 L76.5,299.5 L77.5,300.5 L77.5,301.5 L76.5,302.5 L76.5,303.5 L75.5,303.5 L73.5,303.5 L72.5,303.5 L72.5,302.5 L71.5,301.5 M84.5,295.5 L80.5,295.5 L80.5,298.5 L81.5,298.5 L82.5,298.5 L83.5,298.5 L84.5,299.5 L85.5,300.5 L85.5,301.5 L84.5,302.5 L83.5,303.5 L82.5,303.5 L81.5,303.5 L80.5,303.5 L80.5,302.5 L79.5,301.5 M92.5,295.5 L88.5,303.5 M87.5,295.5 L92.5,295.5 M97.5,295.5 L96.5,295.5 L95.5,297.5 L95.5,298.5 L95.5,300.5 L95.5,301.5 L96.5,303.5 L97.5,303.5 L98.5,303.5 L99.5,303.5 L100.5,301.5 L100.5,300.5 L100.5,298.5 L100.5,297.5 L99.5,295.5 L98.5,295.5 L97.5,295.5" stroke="#fff"/>
<path d="M51.5,312.5 L50.5,313.5 L49.5,314.5 L49.5,315.5 L49.5,317.5 L49.5,318.5 L50.5,319.5 L51.5,320.5 L53.5,320.5 L54.5,320.5 L54.5,319.5 L55.5,318.5 L55.5,317.5 L55.5,315.5 L55.5,314.5 L54.5,313.5 L54.5,312.5 L53.5,312.5 L51.5,312.5 M63.5,313.5 L62.5,312.5 L61.5,312.5 L59.5,312.5 L58.5,312.5 L58.5,313.5 L58.5,314.5 L58.5,315.5 L59.5,315.5 L61.5,316.5 L62.5,317.5 L63.5,317.5 L63.5,318.5 L63.5,319.5 L62.5,320.5 L61.5,320.5 L59.5,320.5 L58.5,320.5 L58.5,319.5 M64.5,320.5 L70.5,320.5 M72.5,312.5 L76.5,312.5 L74.5,315.5 L75.5,315.5 L76.5,315.5 L76.5,316.5 L77.5,317.5 L77.5,318.5 L76.5,319.5 L76.5,320.5 L75.5,320.5 L73.5,320.5 L72.5,320.5 L72.5,319.5 L71.5,318.5 M84.5,313.5 L84.5,312.5 L83.5,312.5 L82.5,312.5 L81.5,312.5 L80.5,314.5 L80.5,315.5 L80.5,317.5 L80.5,319.5 L81.5,320.5 L82.5,320.5 L83.5,320.5 L84.5,319.5 L85.5,318.5 L85.5,317.5 L84.5,316.5 L83.5,315.5 L82.5,315.5 L81.5,315.5 L80.5,316.5 L80.5,317.5 M92.5,312.5 L88.5,312.5 L87.5,315.5 L88.5,315.5 L89.5,315.5 L90.5,315.5 L91.5,315.5 L92.5,316.5 L92.5,317.5 L92.5,318.5 L92.5,319.5 L91.5,320.5 L90.5,320.5 L89.5,320.5 L88.5,320.5 L87.5,319.5 L87.5,318.5 M98.5,312.5 L95.5,317.5 L100.5,317.5 M98.5,312.5 L98.5,320.5" stroke="#fff"/>
<path d="M51.5,330.5 L50.5,331.5 L49.5,332.5 L49.5,333.5 L49.5,335.5 L49.5,336.5 L50.5,337.5 L51.5,338.5 L53.5,338.5 L54.5,338.5 L54.5,337.5 L55.5,336.5 L55.5,335.5 L55.5,333.5 L55.5,332.5 L54.5,331.5 L54.5,330.5 L53.5,330.5 L51.5,330.5 M63.5,331.5 L62.5,330.5 L61.5,330.5 L59.5,330.5 L58.5,330.5 L58.5,331.5 L58.5,332.5 L58.5,333.5 L59.5,333.5 L61.5,334.5 L62.5,335.5 L63.5,335.5 L63.5,336.5 L63.5,337.5 L62.5,338.5 L61.5,338.5 L59.5,338.5 L58.5,338.5 L58.5,337.5 M64.5,338.5 L70.5,338.5 M72.5,330.5 L76.5,330.5 L74.5,333.5 L75.5,333.5 L76.5,333.5 L76.5,334.5 L77.5,335.5 L77.5,336.5 L76.5,337.5 L76.5,338.5 L75.5,338.5 L73.5,338.5 L72.5,338.5 L72.5,337.5 L71.5,336.5 M81.5,330.5 L80.5,330.5 L80.5,331.5 L80.5,332.5 L80.5,333.5 L81.5,333.5 L82.5,333.5 L83.5,334.5 L84.5,335.5 L85.5,335.5 L85.5,336.5 L84.5,337.5 L84.5,338.5 L83.5,338.5 L81.5,338.5 L80.5,338.5 L80.5,337.5 L79.5,336.5 L79.5,335.5 L80.5,335.5 L80.5,334.5 L81.5,333.5 L83.5,333.5 L84.5,333.5 L84.5,332.5 L84.5,331.5 L84.5,330.5 L83.5,330.5 L81.5,330.5 M89.5,330.5 L88.5,330.5 L87.5,331.5 L87.5,332.5 L88.5,333.5 L90.5,333.5 L91.5,334.5 L92.5,335.5 L92.5,336.5 L92.5,337.5 L92.5,338.5 L90.5,338.5 L89.5,338.5 L88.5,338.5 L87.5,337.5 L87.5,336.5 L87.5,335.5 L88.5,334.5 L89.5,333.5 L91.5,333.5 L92.5,333.5 L92.5,332.5 L92.5,331.5 L92.5,330.5 L90.5,330.5 L89.5,330.5 M96.5,332.5 L97.5,331.5 L98.5,330.5 L98.5,338.5" stroke="#fff"/>
<path d="M51.5,348.5 L50.5,349.5 L49.5,350.5 L49.5,351.5 L49.5,353.5 L49.5,354.5 L50.5,355.5 L51.5,356.5 L53.5,356.5 L54.5,356.5 L54.5,355.5 L55.5,354.5 L55.5,353.5 L55.5,351.5 L55.5,350.5 L54.5,349.5 L54.5,348.5 L53.5,348.5 L51.5,348.5 M63.5,349.5 L62.5,348.5 L61.5,348.5 L59.5,348.5 L58.5,348.5 L58.5,349.5 L58.5,350.5 L58.5,351.5 L59.5,351.5 L61.5,352.5 L62.5,353.5 L63.5,353.5 L63.5,354.5 L63.5,355.5 L62.5,356.5 L61.5,356.5 L59.5,356.5 L58.5,356.5 L58.5,355.5 M64.5,356.5 L70.5,356.5 M72.5,348.5 L76.5,348.5 L74.5,351.5 L75.5,351.5 L76.5,351.5 L76.5,352.5 L77.5,353.5 L77.5,354.5 L76.5,355.5 L76.5,356.5 L75.5,356.5 L73.5,356.5 L72.5,356.5 L72.5,355.5 L71.5,354.5 M81.5,348.5 L80.5,348.5 L80.5,349.5 L80.5,350.5 L80.5,351.5 L81.5,351.5 L82.5,351.5 L83.5,352.5 L84.5,353.5 L85.5,353.5 L85.5,354.5 L84.5,355.5 L84.5,356.5 L83.5,356.5 L81.5,356.5 L80.5,356.5 L80.5,355.5 L79.5,354.5 L79.5,353.5 L80.5,353.5 L80.5,352.5 L81.5,351.5 L83.5,351.5 L84.5,351.5 L84.5,350.5 L84.5,349.5 L84.5,348.5 L83.5,348.5 L81.5,348.5 M89.5,348.5 L88.5,348.5 L87.5,349.5 L87.5,350.5 L88.5,351.5 L90.5,351.5 L91.5,352.5 L92.5,353.5 L92.5,354.5 L92.5,355.5 L92.5,356.5 L90.5,356.5 L89.5,356.5 L88.5,356.5 L87.5,355.5 L87.5,354.5 L87.5,353.5 L88.5,352.5 L89.5,351.5 L91.5,351.5 L92.5,351.5 L92.5,350.5 L92.5,349.5 L92.5,348.5 L90.5,348.5 L89.5,348.5 M95.5,350.5 L95.5,349.5 L96.5,348.5 L97.5,348.5 L98.5,348.5 L99.5,348.5 L99.5,349.5 L100.5,350.5 L99.5,351.5 L98.5,352.5 L95.5,356.5 L100.5,356.5" stroke="#fff"/>
<path d="M51.5,365.5 L50.5,366.5 L49.5,367.5 L49.5,368.5 L49.5,370.5 L49.5,371.5 L50.5,372.5 L51.5,373.5 L53.5,373.5 L54.5,373.5 L54.5,372.5 L55.5,371.5 L55.5,370.5 L55.5,368.5 L55.5,367.5 L54.5,366.5 L54.5,365.5 L53.5,365.5 L51.5,365.5 M63.5,366.5 L62.5,365.5 L61.5,365.5 L59.5,365.5 L58.5,365.5 L58.5,366.5 L58.5,367.5 L58.5,368.5 L59.5,368.5 L61.5,369.5 L62.5,370.5 L63.5,370.5 L63.5,371.5 L63.5,372.5 L62.5,373.5 L61.5,373.5 L59.5,373.5 L58.5,373.5 L58.5,372.5 M64.5,373.5 L70.5,373.5 M72.5,365.5 L76.5,365.5 L74.5,368.5 L75.5,368.5 L76.5,368.5 L76.5,369.5 L77.5,370.5 L77.5,371.5 L76.5,372.5 L76.5,373.5 L75.5,373.5 L73.5,373.5 L72.5,373.5 L72.5,372.5 L71.5,371.5 M81.5,365.5 L80.5,365.5 L80.5,366.5 L80.5,367.5 L80.5,368.5 L81.5,368.5 L82.5,368.5 L83.5,369.5 L84.5,370.5 L85.5,370.5 L85.5,371.5 L84.5,372.5 L84.5,373.5 L83.5,373.5 L81.5,373.5 L80.5,373.5 L80.5,372.5 L79.5,371.5 L79.5,370.5 L80.5,370.5 L80.5,369.5 L81.5,368.5 L83.5,368.5 L84.5,368.5 L84.5,367.5 L84.5,366.5 L84.5,365.5 L83.5,365.5 L81.5,365.5 M89.5,365.5 L88.5,365.5 L87.5,366.5 L87.5,367.5 L88.5,368.5 L90.5,368.5 L91.5,369.5 L92.5,370.5 L92.5,371.5 L92.5,372.5 L92.5,373.5 L90.5,373.5 L89.5,373.5 L88.5,373.5 L87.5,372.5 L87.5,371.5 L87.5,370.5 L88.5,369.5 L89.5,368.5 L91.5,368.5 L92.5,368.5 L92.5,367.5 L92.5,366.5 L92.5,365.5 L90.5,365.5 L89.5,365.5 M95.5,365.5 L100.5,365.5 L97.5,368.5 L98.5,368.5 L99.5,368.5 L100.5,369.5 L100.5,370.5 L100.5,371.5 L100.5,372.5 L99.5,373.5 L98.5,373.5 L97.5,373.5 L95.5,373.5 L95.5,372.5 L95.5,371.5" stroke="#fff"/>
<path d="M51.5,383.5 L50.5,384.5 L49.5,385.5 L49.5,386.5 L49.5,388.5 L49.5,389.5 L50.5,390.5 L51.5,391.5 L53.5,391.5 L54.5,391.5 L54.5,390.5 L55.5,389.5 L55.5,388.5 L55.5,386.5 L55.5,385.5 L54.5,384.5 L54.5,383.5 L53.5,383.5 L51.5,383.5 M63.5,384.5 L62.5,383.5 L61.5,383.5 L59.5,383.5 L58.5,383.5 L58.5,384.5 L58.5,385.5 L58.5,386.5 L59.5,386.5 L61.5,387.5 L62.5,388.5 L63.5,388.5 L63.5,389.5 L63.5,390.5 L62.5,391.5 L61.5,391.5 L59.5,391.5 L58.5,391.5 L58.5,390.5 M64.5,391.5 L70.5,391.5 M72.5,383.5 L76.5,383.5 L74.5,386.5 L75.5,386.5 L76.5,386.5 L76.5,387.5 L77.5,388.5 L77.5,389.5 L76.5,390.5 L76.5,391.5 L75.5,391.5 L73.5,391.5 L72.5,391.5 L72.5,390.5 L71.5,389.5 M81.5,383.5 L80.5,383.5 L80.5,384.5 L80.5,385.5 L80.5,386.5 L81.5,386.5 L82.5,386.5 L83.5,387.5 L84.5,388.5 L85.5,388.5 L85.5,389.5 L84.5,390.5 L84.5,391.5 L83.5,391.5 L81.5,391.5 L80.5,391.5 L80.5,390.5 L79.5,389.5 L79.5,388.5 L80.5,388.5 L80.5,387.5 L81.5,386.5 L83.5,386.5 L84.5,386.5 L84.5,385.5 L84.5,384.5 L84.5,383.5 L83.5,383.5 L81.5,383.5 M89.5,383.5 L88.5,383.5 L87.5,384.5 L87.5,385.5 L88.5,386.5 L90.5,386.5 L91.5,387.5 L92.5,388.5 L92.5,389.5 L92.5,390.5 L92.5,391.5 L90.5,391.5 L89.5,391.5 L88.5,391.5 L87.5,390.5 L87.5,389.5 L87.5,388.5 L88.5,387.5 L89.5,386.5 L91.5,386.5 L92.5,386.5 L92.5,385.5 L92.5,384.5 L92.5,383.5 L90.5,383.5 L89.5,383.5 M98.5,383.5 L95.5,388.5 L100.5,388.5 M98.5,383.5 L98.5,391.5" stroke="#fff"/>
<path d="M51.5,400.5 L50.5,401.5 L49.5,402.5 L49.5,403.5 L49.5,405.5 L49.5,406.5 L50.5,407.5 L51.5,408.5 L53.5,408.5 L54.5,408.5 L54.5,407.5 L55.5,406.5 L55.5,405.5 L55.5,403.5 L55.5,402.5 L54.5,401.5 L54.5,400.5 L53.5,400.5 L51.5,400.5 M63.5,401.5 L62.5,400.5 L61.5,400.5 L59.5,400.5 L58.5,400.5 L58.5,401.5 L58.5,402.5 L58.5,403.5 L59.5,403.5 L61.5,404.5 L62.5,405.5 L63.5,405.5 L63.5,406.5 L63.5,407.5 L62.5,408.5 L61.5,408.5 L59.5,408.5 L58.5,408.5 L58.5,407.5 M64.5,408.5 L70.5,408.5 M72.5,400.5 L76.5,400.5 L74.5,403.5 L75.5,403.5 L76.5,403.5 L76.5,404.5 L77.5,405.5 L77.5,406.5 L76.5,407.5 L76.5,408.5 L75.5,408.5 L73.5,408.5 L72.5,408.5 L72.5,407.5 L71.5,406.5 M81.5,400.5 L80.5,400.5 L80.5,401.5 L80.5,402.5 L80.5,403.5 L81.5,403.5 L82.5,403.5 L83.5,404.5 L84.5,405.5 L85.5,405.5 L85.5,406.5 L84.5,407.5 L84.5,408.5 L83.5,408.5 L81.5,408.5 L80.5,408.5 L80.5,407.5 L79.5,406.5 L79.5,405.5 L80.5,405.5 L80.5,404.5 L81.5,403.5 L83.5,403.5 L84.5,403.5 L84.5,402.5 L84.5,401.5 L84.5,400.5 L83.5,400.5 L81.5,400.5 M89.5,400.5 L88.5,400.5 L87.5,401.5 L87.5,402.5 L88.5,403.5 L90.5,403.5 L91.5,404.5 L92.5,405.5 L92.5,406.5 L92.5,407.5 L92.5,408.5 L90.5,408.5 L89.5,408.5 L88.5,408.5 L87.5,407.5 L87.5,406.5 L87.5,405.5 L88.5,404.5 L89.5,403.5 L91.5,403.5 L92.5,403.5 L92.5,402.5 L92.5,401.5 L92.5,400.5 L90.5,400.5 L89.5,400.5 M99.5,400.5 L95.5,400.5 L95.5,403.5 L97.5,403.5 L98.5,403.5 L99.5,403.5 L100.5,404.5 L100.5,405.5 L100.5,406.5 L100.5,407.5 L99.5,408.5 L98.5,408.5 L97.5,408.5 L95.5,408.5 L95.5,407.5 L95.5,406.5" stroke="#fff"/>
<path d="M87.5,425.5 L88.5,424.5 L89.5,423.5 L89.5,431.5 M96.5,423.5 L94.5,423.5 L94.5,425.5 L93.5,426.5 L93.5,428.5 L94.5,429.5 L94.5,431.5 L96.5,431.5 L97.5,431.5 L98.5,429.5 L99.5,428.5 L99.5,426.5 L98.5,425.5 L97.5,423.5 L96.5,423.5 M103.5,423.5 L102.5,423.5 L101.5,425.5 L101.5,426.5 L101.5,428.5 L101.5,429.5 L102.5,431.5 L103.5,431.5 L104.5,431.5 L105.5,431.5 L106.5,429.5 L106.5,428.5 L106.5,426.5 L106.5,425.5 L105.5,423.5 L104.5,423.5 L103.5,423.5" stroke="#fff"/>
<path d="M95.5,435.5 L94.5,435.5 L93.5,436.5 L93.5,437.5 L94.5,438.5 L95.5,438.5 L96.5,438.5 L97.5,439.5 L98.5,440.5 L98.5,441.5 L98.5,442.5 L98.5,443.5 L96.5,443.5 L95.5,443.5 L94.5,443.5 L93.5,442.5 L93.5,441.5 L93.5,440.5 L94.5,439.5 L95.5,438.5 L97.5,438.5 L98.5,438.5 L98.5,437.5 L98.5,436.5 L98.5,435.5 L96.5,435.5 L95.5,435.5 M103.5,435.5 L102.5,435.5 L101.5,437.5 L101.5,438.5 L101.5,440.5 L101.5,441.5 L102.5,443.5 L103.5,443.5 L104.5,443.5 L105.5,443.5 L106.5,441.5 L106.5,440.5 L106.5,438.5 L106.5,437.5 L105.5,435.5 L104.5,435.5 L103.5,435.5" stroke="#fff"/>
<path d="M93.5,470.5 L94.5,469.5 L94.5,468.5 L95.5,468.5 L96.5,468.5 L97.5,468.5 L98.5,469.5 L98.5,470.5 L98.5,471.5 L97.5,472.5 L93.5,476.5 L98.5,476.5 M103.5,468.5 L102.5,468.5 L101.5,470.5 L101.5,471.5 L101.5,473.5 L101.5,474.5 L102.5,476.5 L103.5,476.5 L104.5,476.5 L105.5,476.5 L106.5,474.5 L106.5,473.5 L106.5,471.5 L106.5,470.5 L105.5,468.5 L104.5,468.5 L103.5,468.5" stroke="#fff"/>
<path d="M103.5,480.5 L102.5,480.5 L101.5,481.5 L101.5,483.5 L101.5,484.5 L101.5,486.5 L102.5,487.5 L103.5,487.5 L104.5,487.5 L105.5,487.5 L106.5,486.5 L106.5,484.5 L106.5,483.5 L106.5,481.5 L105.5,480.5 L104.5,480.5 L103.5,480.5" stroke="#fff"/>
<path d="M8.5,444.5 L8.5,452.5 M8.5,452.5 L13.5,452.5 M16.5,444.5 L13.5,452.5 M16.5,444.5 L19.5,452.5 M14.5,449.5 L18.5,449.5 M26.5,445.5 L26.5,444.5 L24.5,444.5 L23.5,444.5 L22.5,444.5 L21.5,445.5 L21.5,446.5 L21.5,447.5 L22.5,447.5 L23.5,447.5 L25.5,448.5 L26.5,449.5 L26.5,450.5 L26.5,451.5 L26.5,452.5 L24.5,452.5 L23.5,452.5 L22.5,452.5 L21.5,451.5 M34.5,446.5 L34.5,445.5 L33.5,444.5 L32.5,444.5 L31.5,444.5 L30.5,444.5 L29.5,445.5 L29.5,446.5 L29.5,447.5 L29.5,449.5 L29.5,450.5 L29.5,451.5 L30.5,452.5 L31.5,452.5 L32.5,452.5 L33.5,452.5 L34.5,451.5 L34.5,450.5 M39.5,444.5 L38.5,444.5 L37.5,445.5 L37.5,446.5 L37.5,447.5 L37.5,449.5 L37.5,450.5 L37.5,451.5 L38.5,452.5 L39.5,452.5 L40.5,452.5 L41.5,452.5 L42.5,451.5 L42.5,450.5 L43.5,449.5 L43.5,447.5 L42.5,446.5 L42.5,445.5 L41.5,444.5 L40.5,444.5 L39.5,444.5 M45.5,449.5 L52.5,449.5 M55.5,444.5 L55.5,452.5 M55.5,448.5 L56.5,447.5 L57.5,447.5 L58.5,447.5 L59.5,447.5 L60.5,448.5 L60.5,449.5 L60.5,450.5 L60.5,451.5 L59.5,452.5 L58.5,452.5 L57.5,452.5 L56.5,452.5 L55.5,451.5 M63.5,447.5 L63.5,450.5 L63.5,452.5 L64.5,452.5 L65.5,452.5 L66.5,452.5 L67.5,450.5 M67.5,447.5 L67.5,452.5 M72.5,444.5 L71.5,444.5 L70.5,446.5 L70.5,452.5 M69.5,447.5 L72.5,447.5 M77.5,444.5 L76.5,444.5 L75.5,444.5 L75.5,446.5 L75.5,452.5 M74.5,447.5 L76.5,447.5 M79.5,449.5 L83.5,449.5 L83.5,448.5 L83.5,447.5 L82.5,447.5 L81.5,447.5 L80.5,447.5 L79.5,448.5 L79.5,449.5 L79.5,450.5 L79.5,451.5 L80.5,452.5 L81.5,452.5 L82.5,452.5 L83.5,452.5 L83.5,451.5 M86.5,447.5 L86.5,452.5 M86.5,449.5 L86.5,448.5 L87.5,447.5 L88.5,447.5 L89.5,447.5" stroke="#fff"/>
<path d="M19.5,514.5 L18.5,513.5 L17.5,513.5 L16.5,513.5 L15.5,513.5 L15.5,514.5 L14.5,514.5 L14.5,515.5 L14.5,517.5 L14.5,518.5 L15.5,518.5 L15.5,519.5 L16.5,519.5 L17.5,519.5 L18.5,519.5 L19.5,518.5 M22.5,514.5 L23.5,514.5 L24.5,513.5 L24.5,519.5" stroke="#ff0000"/>
<path d="M40.5,514.5 L39.5,514.5 L39.5,513.5 L38.5,513.5 L37.5,513.5 L36.5,513.5 L36.5,514.5 L35.5,514.5 L35.5,515.5 L35.5,517.5 L35.5,518.5 L36.5,518.5 L36.5,519.5 L37.5,519.5 L38.5,519.5 L39.5,519.5 L39.5,518.5 L40.5,518.5 M42.5,514.5 L42.5,513.5 L43.5,513.5 L44.5,513.5 L45.5,513.5 L46.5,514.5 L46.5,515.5 L45.5,515.5 L45.5,516.5 L42.5,519.5 L46.5,519.5" stroke="#00ff00"/>
<path d="M61.5,514.5 L60.5,514.5 L60.5,513.5 L59.5,513.5 L58.5,513.5 L57.5,513.5 L57.5,514.5 L56.5,514.5 L56.5,515.5 L56.5,517.5 L56.5,518.5 L57.5,518.5 L57.5,519.5 L58.5,519.5 L59.5,519.5 L60.5,519.5 L60.5,518.5 L61.5,518.5 M63.5,513.5 L67.5,513.5 L65.5,515.5 L66.5,515.5 L66.5,516.5 L67.5,516.5 L67.5,517.5 L67.5,518.5 L66.5,519.5 L65.5,519.5 L64.5,519.5 L63.5,519.5 L63.5,518.5" stroke="#96e4ee"/>
<path d="M77.5,513.5 L77.5,519.5 M77.5,513.5 L81.5,513.5 M77.5,516.5 L80.5,516.5 M77.5,519.5 L81.5,519.5 M83.5,513.5 L83.5,519.5 M87.5,513.5 L87.5,519.5 M85.5,513.5 L89.5,513.5" stroke="#ffff00"/>
<path d="M308.5,511.5 L309.5,510.5 L309.5,509.5 L310.5,509.5 L311.5,509.5 L312.5,509.5 L313.5,510.5 L313.5,511.5 L313.5,512.5 L312.5,513.5 L308.5,517.5 L313.5,517.5 M318.5,509.5 L317.5,509.5 L316.5,511.5 L316.5,512.5 L316.5,514.5 L316.5,515.5 L317.5,517.5 L318.5,517.5 L319.5,517.5 L320.5,517.5 L321.5,515.5 L321.5,514.5 L321.5,512.5 L321.5,511.5 L320.5,509.5 L319.5,509.5 L318.5,509.5 M325.5,509.5 L324.5,509.5 L324.5,511.5 L323.5,512.5 L323.5,514.5 L324.5,515.5 L324.5,517.5 L325.5,517.5 L326.5,517.5 L327.5,517.5 L328.5,515.5 L329.5,514.5 L329.5,512.5 L328.5,511.5 L327.5,509.5 L326.5,509.5 L325.5,509.5 M335.5,509.5 L332.5,509.5 L331.5,512.5 L332.5,512.5 L333.5,512.5 L334.5,512.5 L335.5,512.5 L336.5,513.5 L336.5,514.5 L336.5,515.5 L336.5,516.5 L335.5,517.5 L334.5,517.5 L333.5,517.5 L332.5,517.5 L331.5,516.5 L331.5,515.5 M345.5,508.5 L338.5,520.5 M349.5,509.5 L348.5,509.5 L347.5,511.5 L347.5,512.5 L347.5,514.5 L347.5,515.5 L348.5,517.5 L349.5,517.5 L350.5,517.5 L351.5,517.5 L352.5,515.5 L352.5,514.5 L352.5,512.5 L352.5,511.5 L351.5,509.5 L350.5,509.5 L349.5,509.5 M356.5,509.5 L355.5,509.5 L355.5,510.5 L355.5,511.5 L355.5,512.5 L356.5,512.5 L357.5,512.5 L359.5,513.5 L359.5,514.5 L360.5,514.5 L360.5,515.5 L359.5,516.5 L359.5,517.5 L358.5,517.5 L356.5,517.5 L355.5,517.5 L355.5,516.5 L354.5,515.5 L354.5,514.5 L355.5,514.5 L355.5,513.5 L357.5,512.5 L358.5,512.5 L359.5,512.5 L359.5,511.5 L359.5,510.5 L359.5,509.5 L358.5,509.5 L356.5,509.5 M368.5,508.5 L362.5,520.5 M371.5,511.5 L371.5,510.5 L371.5,509.5 L372.5,509.5 L374.5,509.5 L375.5,510.5 L375.5,511.5 L375.5,512.5 L374.5,513.5 L370.5,517.5 L376.5,517.5 M383.5,512.5 L382.5,513.5 L382.5,514.5 L381.5,514.5 L380.5,514.5 L379.5,514.5 L378.5,513.5 L378.5,512.5 L378.5,511.5 L378.5,510.5 L379.5,509.5 L380.5,509.5 L381.5,509.5 L382.5,509.5 L382.5,510.5 L383.5,512.5 L383.5,514.5 L382.5,515.5 L382.5,517.5 L381.5,517.5 L380.5,517.5 L379.5,517.5 L378.5,516.5 M393.5,511.5 L393.5,510.5 L395.5,509.5 L395.5,517.5 M401.5,509.5 L400.5,509.5 L400.5,510.5 L400.5,511.5 L400.5,512.5 L401.5,512.5 L402.5,512.5 L403.5,513.5 L404.5,514.5 L404.5,515.5 L404.5,516.5 L404.5,517.5 L403.5,517.5 L401.5,517.5 L400.5,517.5 L400.5,516.5 L399.5,515.5 L399.5,514.5 L400.5,514.5 L400.5,513.5 L401.5,512.5 L403.5,512.5 L404.5,512.5 L404.5,511.5 L404.5,510.5 L404.5,509.5 L403.5,509.5 L401.5,509.5 M407.5,512.5 L408.5,512.5 L407.5,512.5 M407.5,516.5 L407.5,517.5 L408.5,517.5 L407.5,516.5 M411.5,509.5 L415.5,509.5 L413.5,512.5 L414.5,512.5 L415.5,512.5 L415.5,513.5 L416.5,514.5 L416.5,515.5 L415.5,516.5 L415.5,517.5 L414.5,517.5 L412.5,517.5 L411.5,517.5 L411.5,516.5 L411.5,515.5 M423.5,510.5 L423.5,509.5 L422.5,509.5 L421.5,509.5 L420.5,509.5 L419.5,511.5 L418.5,512.5 L418.5,514.5 L419.5,516.5 L420.5,517.5 L421.5,517.5 L422.5,517.5 L423.5,516.5 L423.5,515.5 L423.5,514.5 L423.5,513.5 L422.5,512.5 L421.5,512.5 L420.5,512.5 L419.5,513.5 L418.5,514.5 M426.5,512.5 L427.5,512.5 L426.5,512.5 M426.5,516.5 L426.5,517.5 L427.5,517.5 L426.5,516.5 M432.5,509.5 L431.5,509.5 L430.5,511.5 L430.5,512.5 L430.5,514.5 L430.5,515.5 L431.5,517.5 L432.5,517.5 L433.5,517.5 L434.5,517.5 L434.5,515.5 L435.5,514.5 L435.5,512.5 L434.5,511.5 L434.5,509.5 L433.5,509.5 L432.5,509.5 M439.5,509.5 L438.5,509.5 L437.5,511.5 L437.5,512.5 L437.5,514.5 L437.5,515.5 L438.5,517.5 L439.5,517.5 L440.5,517.5 L441.5,517.5 L442.5,515.5 L442.5,514.5 L442.5,512.5 L442.5,511.5 L441.5,509.5 L440.5,509.5 L439.5,509.5 M445.5,516.5 L445.5,517.5 L446.5,517.5 L445.5,516.5 M451.5,509.5 L450.5,509.5 L449.5,511.5 L448.5,512.5 L448.5,514.5 L449.5,515.5 L450.5,517.5 L451.5,517.5 L452.5,517.5 L453.5,517.5 L453.5,515.5 L454.5,514.5 L454.5,512.5 L453.5,511.5 L453.5,509.5 L452.5,509.5 L451.5,509.5 M458.5,509.5 L457.5,509.5 L456.5,511.5 L456.5,512.5 L456.5,514.5 L456.5,515.5 L457.5,517.5 L458.5,517.5 L459.5,517.5 L460.5,517.5 L461.5,515.5 L461.5,514.5 L461.5,512.5 L461.5,511.5 L460.5,509.5 L459.5,509.5 L458.5,509.5 M466.5,509.5 L465.5,509.5 L464.5,511.5 L464.5,512.5 L464.5,514.5 L464.5,515.5 L465.5,517.5 L466.5,517.5 L467.5,517.5 L468.5,517.5 L469.5,515.5 L469.5,514.5 L469.5,512.5 L469.5,511.5 L468.5,509.5 L467.5,509.5 L466.5,509.5" stroke="#fff"/>
</g>
</svg>
</body></html>
